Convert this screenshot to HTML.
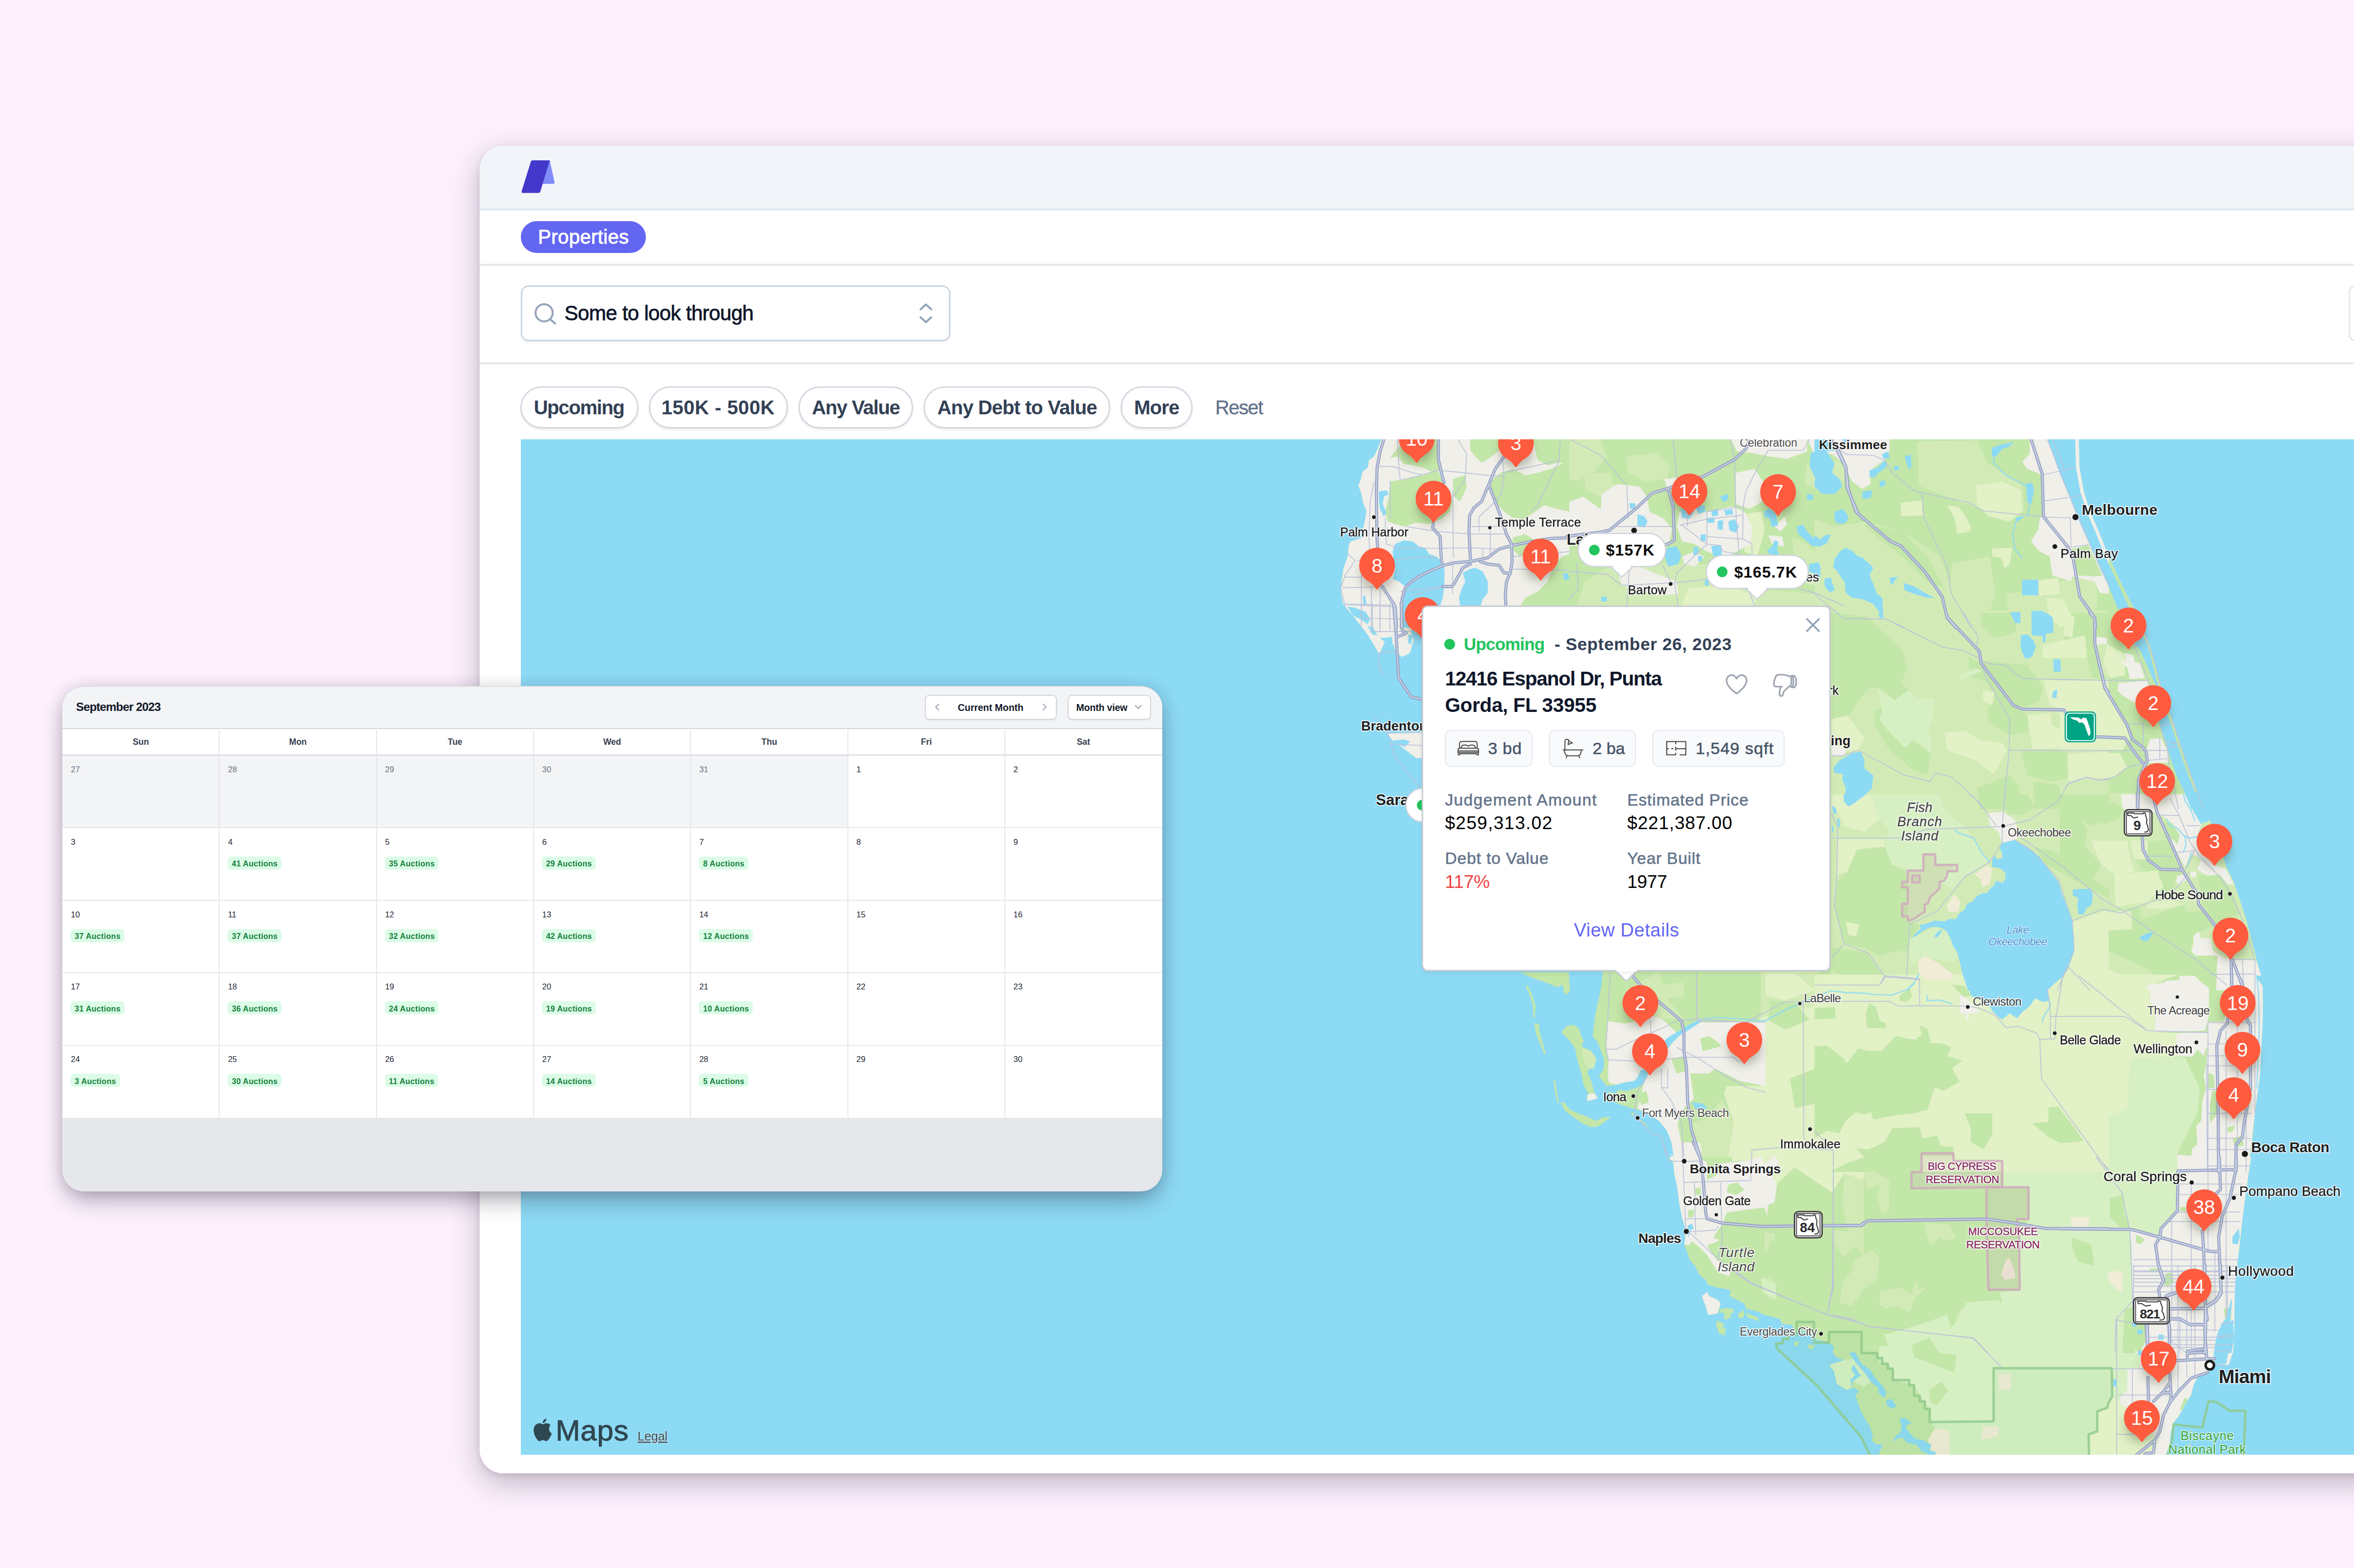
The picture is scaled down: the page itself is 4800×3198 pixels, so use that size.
<!DOCTYPE html><html><head><meta charset="utf-8"><title>Properties</title><style>
*{box-sizing:border-box;margin:0;padding:0}
html,body{width:4800px;height:3198px;overflow:hidden;background:#fdf1fe;font-family:"Liberation Sans",sans-serif;}
.b{position:absolute}
.t{position:absolute;white-space:nowrap;line-height:1.2}
svg{position:absolute;overflow:visible}

#map text{font-family:"Liberation Sans",sans-serif}
</style></head><body><div class="b" id="win" style="left:978px;top:297px;width:3900px;height:2708px;background:#fff;border-radius:48px;box-shadow:0 20px 60px rgba(35,25,45,.28),0 4px 14px rgba(35,25,45,.09);"></div>
<div class="b" style="left:978.0px;top:297.0px;width:3900.0px;height:132.0px;background:#f1f5f9;border-top-left-radius:48px;border-bottom:4px solid #e2e8f0;"></div>
<svg style="left:1063px;top:327px" width="70" height="68" viewBox="0 0 70 68"><path d="M41.5 0 H58 L67.6 44 Q68.6 48 64.5 48 H43 Z" fill="#818cf8"/><path d="M23 0 H58 L39 63 Q38 66.5 34 66.5 H3.5 Q-0.5 66.5 0.8 62.5 L19.5 2.5 Q20.3 0 23 0Z" fill="#4338ca"/></svg>
<div class="b" style="left:978.0px;top:429.0px;width:3900.0px;height:113.0px;border-bottom:4px solid #e5e7eb;"></div>
<div class="b" style="left:1062.0px;top:451.0px;width:255.0px;height:65.0px;background:#6366f1;border-radius:33px;"></div>
<span class="t" style="left:1097.0px;top:458.6px;font-size:40px;color:#fff;letter-spacing:0.30px;-webkit-text-stroke:0.9px #fff;">Properties</span>
<div class="b" style="left:978.0px;top:541.0px;width:3900.0px;height:202.0px;border-bottom:4px solid #e5e7eb;"></div>
<div class="b" style="left:1062.0px;top:582.0px;width:876.0px;height:114.0px;background:#fff;border:3px solid #cbd5e1;border-radius:16px;box-shadow:0 3px 4px rgba(0,0,0,.06);"></div>
<svg style="left:1085px;top:614px" width="56" height="56" viewBox="0 0 56 56"><circle cx="24.5" cy="24" r="17.5" fill="none" stroke="#94a3b8" stroke-width="4"/><path d="M37 37 L47 46" stroke="#94a3b8" stroke-width="4" stroke-linecap="round"/></svg>
<span class="t" style="left:1151.0px;top:613.7px;font-size:42px;color:#0f172a;letter-spacing:-0.70px;-webkit-text-stroke:0.8px #0f172a;">Some to look through</span>
<svg style="left:1870px;top:616px" width="36" height="46" viewBox="0 0 36 46"><path d="M7 15 L18 5 L29 15 M7 31 L18 41 L29 31" fill="none" stroke="#94a3b8" stroke-width="4" stroke-linecap="round" stroke-linejoin="round"/></svg>
<div class="b" style="left:4789.0px;top:582.0px;width:60.0px;height:114.0px;background:#fff;border:3px solid #e2e8f0;border-radius:14px;"></div>
<div class="b" style="left:1061.0px;top:788.0px;width:241.0px;height:86.0px;background:#fff;border:3px solid #d4d9e1;border-radius:43px;box-shadow:0 3px 5px rgba(0,0,0,.07);"></div>
<span class="t" style="left:1088.4px;top:806.6px;font-size:40px;color:#334155;font-weight:700;letter-spacing:-1.42px;">Upcoming</span>
<div class="b" style="left:1323.0px;top:788.0px;width:284.0px;height:86.0px;background:#fff;border:3px solid #d4d9e1;border-radius:43px;box-shadow:0 3px 5px rgba(0,0,0,.07);"></div>
<span class="t" style="left:1348.7px;top:806.6px;font-size:40px;color:#334155;font-weight:700;letter-spacing:0.40px;">150K - 500K</span>
<div class="b" style="left:1628.0px;top:788.0px;width:234.0px;height:86.0px;background:#fff;border:3px solid #d4d9e1;border-radius:43px;box-shadow:0 3px 5px rgba(0,0,0,.07);"></div>
<span class="t" style="left:1655.4px;top:806.6px;font-size:40px;color:#334155;font-weight:700;letter-spacing:-1.35px;">Any Value</span>
<div class="b" style="left:1883.0px;top:788.0px;width:381.0px;height:86.0px;background:#fff;border:3px solid #d4d9e1;border-radius:43px;box-shadow:0 3px 5px rgba(0,0,0,.07);"></div>
<span class="t" style="left:1911.3px;top:806.6px;font-size:40px;color:#334155;font-weight:700;letter-spacing:-0.87px;">Any Debt to Value</span>
<div class="b" style="left:2285.0px;top:788.0px;width:147.0px;height:86.0px;background:#fff;border:3px solid #d4d9e1;border-radius:43px;box-shadow:0 3px 5px rgba(0,0,0,.07);"></div>
<span class="t" style="left:2312.4px;top:806.6px;font-size:40px;color:#334155;font-weight:700;letter-spacing:-0.92px;">More</span>
<span class="t" style="left:2478.0px;top:806.6px;font-size:40px;color:#64748b;letter-spacing:-1.62px;-webkit-text-stroke:0.5px #64748b;">Reset</span>
<svg id="map" style="left:1062px;top:896px" width="3738" height="2071" viewBox="1062 896 3738 2071">
<defs><clipPath id="mc"><rect x="1062" y="896" width="3738" height="2071"/></clipPath><filter id="ps" x="-50%" y="-50%" width="200%" height="200%"><feGaussianBlur stdDeviation="9"/></filter><filter id="halo" x="-10%" y="-30%" width="120%" height="160%"><feMorphology operator="dilate" radius="1.6"/><feGaussianBlur stdDeviation="1.1"/></filter></defs>
<g clip-path="url(#mc)">
<rect x="1062" y="896" width="3738" height="2071" fill="#8ddaf5"/>
<g fill="#c3e6a9"><path d="M2816.8 880.0 L2816.8 895.3 L2809.2 915.7 L2801.5 931.0 L2791.3 938.7 L2788.8 954.0 L2778.6 961.6 L2773.5 982.0 L2769.6 989.7 L2776.0 1007.6 L2778.6 1022.9 L2786.2 1043.3 L2783.7 1058.6 L2778.6 1081.5 L2776.0 1096.8 L2753.1 1104.5 L2749.2 1117.2 L2748.0 1135.1 L2739.0 1160.6 L2735.2 1186.1 L2733.9 1206.5 L2737.8 1226.9 L2737.1 1230.0 L2762.7 1260.6 L2788.2 1293.8 L2800.9 1314.2 L2811.1 1332.0 L2813.7 1332.0 L2823.9 1309.1 L2841.7 1314.2 L2846.8 1332.0 L2859.6 1339.7 L2874.9 1332.0 L2882.6 1306.5 L2877.4 1288.7 L2887.7 1245.3 L2900.4 1240.2 L2950.0 1300.0 L3240.0 1960.0 L3267.9 1975.3 L3267.9 1983.0 L3265.3 2011.0 L3260.2 2036.5 L3252.6 2069.7 L3250.0 2092.7 L3247.4 2113.1 L3257.7 2125.8 L3262.8 2138.6 L3270.4 2159.0 L3270.4 2179.4 L3260.2 2194.7 L3275.5 2215.1 L3278.1 2225.3 L3293.4 2248.3 L3306.1 2253.4 L3329.1 2261.0 L3357.1 2268.7 L3382.7 2286.5 L3398.0 2304.4 L3408.2 2329.9 L3413.3 2360.0 L3388.8 2330.0 L3404.1 2363.2 L3411.7 2370.8 L3414.3 2396.3 L3419.4 2419.3 L3424.5 2457.6 L3429.6 2483.1 L3437.2 2508.6 L3434.7 2539.2 L3442.3 2559.6 L3444.9 2569.8 L3455.1 2580.0 L3465.3 2600.4 L3478.1 2610.6 L3483.2 2620.8 L3501.0 2625.9 L3529.1 2631.0 L3526.5 2643.8 L3557.1 2659.1 L3559.7 2669.3 L3582.7 2674.4 L3598.0 2682.0 L3628.6 2689.7 L3633.7 2699.9 L3654.1 2702.4 L3659.2 2712.7 L3684.7 2722.9 L3663.3 2707.6 L3699.0 2722.9 L3704.1 2733.1 L3721.9 2735.6 L3739.8 2745.8 L3737.2 2758.6 L3744.9 2768.8 L3760.2 2773.9 L3737.2 2781.5 L3729.6 2784.1 L3739.8 2796.8 L3742.3 2809.6 L3744.9 2822.3 L3765.3 2835.1 L3780.6 2830.0 L3790.8 2837.7 L3783.2 2845.3 L3790.8 2868.3 L3795.9 2881.0 L3806.1 2898.9 L3813.8 2911.6 L3818.9 2929.5 L3816.3 2937.1 L3824.0 2944.8 L3839.3 2947.3 L3831.6 2962.7 L3834.2 2978.0 L4416.8 2978.0 L4416.8 2967.8 L4424.5 2942.2 L4427.0 2919.3 L4432.1 2901.4 L4442.3 2888.7 L4450.0 2875.9 L4457.7 2860.6 L4467.9 2845.3 L4473.0 2824.9 L4480.6 2809.6 L4501.0 2799.4 L4516.3 2781.5 L4544.4 2784.1 L4553.3 2758.6 L4555.9 2722.9 L4557.1 2631.0 L4559.7 2580.0 L4557.1 2615.1 L4562.2 2576.8 L4567.3 2538.6 L4572.4 2487.6 L4577.6 2449.3 L4582.7 2411.0 L4590.3 2360.0 L4587.8 2359.9 L4592.9 2321.6 L4598.0 2270.6 L4603.1 2232.3 L4608.2 2194.1 L4610.7 2143.1 L4613.3 2092.0 L4614.5 2041.0 L4613.3 2010.4 L4598.0 1990.0 L4610.7 1989.9 L4603.1 1964.4 L4590.3 1913.4 L4580.1 1875.1 L4567.3 1836.8 L4554.6 1798.6 L4539.3 1768.0 L4518.9 1696.5 L4503.6 1671.0 L4480.6 1620.0 L4483.2 1619.9 L4470.4 1589.3 L4455.1 1548.5 L4444.9 1517.9 L4437.2 1492.3 L4421.9 1449.0 L4404.1 1392.9 L4393.9 1352.0 L4383.7 1313.8 L4373.5 1293.4 L4349.7 1237.1 L4335.7 1211.6 L4320.4 1178.5 L4300.0 1135.1 L4279.6 1084.1 L4261.7 1043.3 L4249.0 1002.4 L4240.1 951.4 L4238.8 896.6 L4238.8 880.0 Z"/><path d="M3099.5 1983.0 L3199.0 1983.0 L3201.5 2021.2 L3193.9 2028.9 L3188.8 2023.8 L3186.2 2008.5 L3176.0 2013.6 L3163.3 2008.5 L3142.9 2000.8 L3127.6 1995.7 L3109.7 1988.1 Z"/><path d="M3111.0 2011.0 L3114.8 2009.7 L3125.0 2031.4 L3131.4 2051.8 L3128.8 2077.3 L3126.3 2077.3 L3126.3 2051.8 L3119.9 2031.4 Z"/><path d="M3128.8 2087.6 L3137.8 2087.6 L3139.0 2102.9 L3145.4 2125.8 L3151.8 2148.8 L3149.2 2150.1 L3139.0 2125.8 L3131.4 2105.4 Z"/><path d="M3167.1 2203.6 L3170.9 2203.6 L3178.6 2248.3 L3176.0 2250.8 L3170.9 2225.3 Z"/><path d="M3182.4 2248.3 L3188.8 2248.3 L3201.5 2263.6 L3219.4 2271.2 L3239.8 2278.9 L3255.1 2286.5 L3267.9 2278.9 L3285.7 2277.6 L3270.4 2289.1 L3260.2 2296.7 L3244.9 2299.3 L3227.0 2291.6 L3209.2 2278.9 L3191.3 2266.1 Z"/><path d="M3183.7 2105.4 L3193.9 2092.7 L3209.2 2090.1 L3219.4 2097.8 L3224.5 2113.1 L3229.6 2123.3 L3224.5 2133.5 L3244.9 2143.7 L3255.1 2159.0 L3250.0 2179.4 L3239.8 2179.4 L3237.2 2189.6 L3244.9 2204.9 L3250.0 2225.3 L3257.7 2240.6 L3237.2 2245.7 L3234.7 2235.5 L3239.8 2230.4 L3229.6 2215.1 L3224.5 2189.6 L3216.8 2164.1 L3211.7 2138.6 L3201.5 2123.3 L3191.3 2113.1 Z"/><path d="M3324.0 2269.9 L3329.1 2268.7 L3357.1 2289.1 L3387.8 2317.1 L3385.2 2319.7 L3354.6 2294.2 Z"/><path d="M3470.4 2643.8 L3480.6 2634.8 L3485.7 2643.8 L3503.6 2651.4 L3508.7 2659.1 L3501.0 2679.5 L3483.2 2682.0 L3478.1 2664.2 Z"/><path d="M3513.8 2687.1 L3526.5 2679.5 L3531.6 2684.6 L3518.9 2692.2 Z"/><path d="M3501.0 2707.6 L3513.8 2712.7 L3518.9 2722.9 L3506.1 2720.3 Z"/><path d="M3544.4 2682.0 L3554.6 2671.8 L3557.1 2684.6 L3549.5 2689.7 Z"/><path d="M3506.1 2669.3 L3536.7 2671.8 L3531.6 2679.5 L3508.7 2676.9 Z"/><path d="M3500.0 2651.4 L3507.7 2656.5 L3505.1 2676.9 L3500.0 2679.5 Z"/><path d="M3515.3 2666.7 L3533.2 2669.3 L3525.5 2684.6 L3515.3 2682.0 Z"/><path d="M3543.4 2679.5 L3556.1 2671.8 L3553.6 2687.1 L3545.9 2689.7 Z"/><path d="M3500.0 2692.2 L3515.3 2699.9 L3512.8 2712.7 L3500.0 2707.6 Z"/><path d="M3507.7 2712.7 L3520.4 2707.6 L3515.3 2725.4 Z"/><path d="M3558.7 2676.9 L3584.2 2687.1 L3586.7 2694.8 L3563.8 2687.1 Z"/><path d="M3658.2 2736.9 L3668.4 2735.6 L3665.8 2745.8 L3659.4 2744.5 Z"/><path d="M3686.2 2742.0 L3701.5 2743.3 L3693.9 2753.5 L3687.5 2749.6 Z"/><path d="M2829.0 1495.3 L2900.4 1492.8 L2900.4 1546.3 L2887.7 1546.3 L2864.7 1528.5 L2839.2 1510.6 Z"/><path d="M4178.6 890.2 L4190.1 890.2 L4204.1 931.0 L4214.3 964.2 L4224.5 987.1 L4221.9 989.7 L4209.2 964.2 L4196.4 931.0 Z"/><path d="M4363.3 1308.7 L4370.9 1311.2 L4378.6 1334.2 L4373.5 1336.7 Z"/><path d="M4368.4 1344.4 L4376.0 1346.9 L4383.7 1367.3 L4378.6 1369.9 Z"/><path d="M4419.4 1469.4 L4427.0 1471.9 L4432.1 1494.9 L4427.0 1502.6 L4421.9 1489.8 Z"/><path d="M4429.6 1505.1 L4437.2 1507.7 L4439.8 1520.4 L4433.4 1517.9 Z"/><path d="M4439.8 1533.2 L4444.9 1533.2 L4452.6 1556.1 L4446.2 1553.6 Z"/></g>
<clipPath id="lc"><path d="M2816.8 880.0 L2816.8 895.3 L2809.2 915.7 L2801.5 931.0 L2791.3 938.7 L2788.8 954.0 L2778.6 961.6 L2773.5 982.0 L2769.6 989.7 L2776.0 1007.6 L2778.6 1022.9 L2786.2 1043.3 L2783.7 1058.6 L2778.6 1081.5 L2776.0 1096.8 L2753.1 1104.5 L2749.2 1117.2 L2748.0 1135.1 L2739.0 1160.6 L2735.2 1186.1 L2733.9 1206.5 L2737.8 1226.9 L2737.1 1230.0 L2762.7 1260.6 L2788.2 1293.8 L2800.9 1314.2 L2811.1 1332.0 L2813.7 1332.0 L2823.9 1309.1 L2841.7 1314.2 L2846.8 1332.0 L2859.6 1339.7 L2874.9 1332.0 L2882.6 1306.5 L2877.4 1288.7 L2887.7 1245.3 L2900.4 1240.2 L2950.0 1300.0 L3240.0 1960.0 L3267.9 1975.3 L3267.9 1983.0 L3265.3 2011.0 L3260.2 2036.5 L3252.6 2069.7 L3250.0 2092.7 L3247.4 2113.1 L3257.7 2125.8 L3262.8 2138.6 L3270.4 2159.0 L3270.4 2179.4 L3260.2 2194.7 L3275.5 2215.1 L3278.1 2225.3 L3293.4 2248.3 L3306.1 2253.4 L3329.1 2261.0 L3357.1 2268.7 L3382.7 2286.5 L3398.0 2304.4 L3408.2 2329.9 L3413.3 2360.0 L3388.8 2330.0 L3404.1 2363.2 L3411.7 2370.8 L3414.3 2396.3 L3419.4 2419.3 L3424.5 2457.6 L3429.6 2483.1 L3437.2 2508.6 L3434.7 2539.2 L3442.3 2559.6 L3444.9 2569.8 L3455.1 2580.0 L3465.3 2600.4 L3478.1 2610.6 L3483.2 2620.8 L3501.0 2625.9 L3529.1 2631.0 L3526.5 2643.8 L3557.1 2659.1 L3559.7 2669.3 L3582.7 2674.4 L3598.0 2682.0 L3628.6 2689.7 L3633.7 2699.9 L3654.1 2702.4 L3659.2 2712.7 L3684.7 2722.9 L3663.3 2707.6 L3699.0 2722.9 L3704.1 2733.1 L3721.9 2735.6 L3739.8 2745.8 L3737.2 2758.6 L3744.9 2768.8 L3760.2 2773.9 L3737.2 2781.5 L3729.6 2784.1 L3739.8 2796.8 L3742.3 2809.6 L3744.9 2822.3 L3765.3 2835.1 L3780.6 2830.0 L3790.8 2837.7 L3783.2 2845.3 L3790.8 2868.3 L3795.9 2881.0 L3806.1 2898.9 L3813.8 2911.6 L3818.9 2929.5 L3816.3 2937.1 L3824.0 2944.8 L3839.3 2947.3 L3831.6 2962.7 L3834.2 2978.0 L4416.8 2978.0 L4416.8 2967.8 L4424.5 2942.2 L4427.0 2919.3 L4432.1 2901.4 L4442.3 2888.7 L4450.0 2875.9 L4457.7 2860.6 L4467.9 2845.3 L4473.0 2824.9 L4480.6 2809.6 L4501.0 2799.4 L4516.3 2781.5 L4544.4 2784.1 L4553.3 2758.6 L4555.9 2722.9 L4557.1 2631.0 L4559.7 2580.0 L4557.1 2615.1 L4562.2 2576.8 L4567.3 2538.6 L4572.4 2487.6 L4577.6 2449.3 L4582.7 2411.0 L4590.3 2360.0 L4587.8 2359.9 L4592.9 2321.6 L4598.0 2270.6 L4603.1 2232.3 L4608.2 2194.1 L4610.7 2143.1 L4613.3 2092.0 L4614.5 2041.0 L4613.3 2010.4 L4598.0 1990.0 L4610.7 1989.9 L4603.1 1964.4 L4590.3 1913.4 L4580.1 1875.1 L4567.3 1836.8 L4554.6 1798.6 L4539.3 1768.0 L4518.9 1696.5 L4503.6 1671.0 L4480.6 1620.0 L4483.2 1619.9 L4470.4 1589.3 L4455.1 1548.5 L4444.9 1517.9 L4437.2 1492.3 L4421.9 1449.0 L4404.1 1392.9 L4393.9 1352.0 L4383.7 1313.8 L4373.5 1293.4 L4349.7 1237.1 L4335.7 1211.6 L4320.4 1178.5 L4300.0 1135.1 L4279.6 1084.1 L4261.7 1043.3 L4249.0 1002.4 L4240.1 951.4 L4238.8 896.6 L4238.8 880.0 Z M3099.5 1983.0 L3199.0 1983.0 L3201.5 2021.2 L3193.9 2028.9 L3188.8 2023.8 L3186.2 2008.5 L3176.0 2013.6 L3163.3 2008.5 L3142.9 2000.8 L3127.6 1995.7 L3109.7 1988.1 Z M3111.0 2011.0 L3114.8 2009.7 L3125.0 2031.4 L3131.4 2051.8 L3128.8 2077.3 L3126.3 2077.3 L3126.3 2051.8 L3119.9 2031.4 Z M3128.8 2087.6 L3137.8 2087.6 L3139.0 2102.9 L3145.4 2125.8 L3151.8 2148.8 L3149.2 2150.1 L3139.0 2125.8 L3131.4 2105.4 Z M3167.1 2203.6 L3170.9 2203.6 L3178.6 2248.3 L3176.0 2250.8 L3170.9 2225.3 Z M3182.4 2248.3 L3188.8 2248.3 L3201.5 2263.6 L3219.4 2271.2 L3239.8 2278.9 L3255.1 2286.5 L3267.9 2278.9 L3285.7 2277.6 L3270.4 2289.1 L3260.2 2296.7 L3244.9 2299.3 L3227.0 2291.6 L3209.2 2278.9 L3191.3 2266.1 Z M3183.7 2105.4 L3193.9 2092.7 L3209.2 2090.1 L3219.4 2097.8 L3224.5 2113.1 L3229.6 2123.3 L3224.5 2133.5 L3244.9 2143.7 L3255.1 2159.0 L3250.0 2179.4 L3239.8 2179.4 L3237.2 2189.6 L3244.9 2204.9 L3250.0 2225.3 L3257.7 2240.6 L3237.2 2245.7 L3234.7 2235.5 L3239.8 2230.4 L3229.6 2215.1 L3224.5 2189.6 L3216.8 2164.1 L3211.7 2138.6 L3201.5 2123.3 L3191.3 2113.1 Z M3324.0 2269.9 L3329.1 2268.7 L3357.1 2289.1 L3387.8 2317.1 L3385.2 2319.7 L3354.6 2294.2 Z M3470.4 2643.8 L3480.6 2634.8 L3485.7 2643.8 L3503.6 2651.4 L3508.7 2659.1 L3501.0 2679.5 L3483.2 2682.0 L3478.1 2664.2 Z M3513.8 2687.1 L3526.5 2679.5 L3531.6 2684.6 L3518.9 2692.2 Z M3501.0 2707.6 L3513.8 2712.7 L3518.9 2722.9 L3506.1 2720.3 Z M3544.4 2682.0 L3554.6 2671.8 L3557.1 2684.6 L3549.5 2689.7 Z M3506.1 2669.3 L3536.7 2671.8 L3531.6 2679.5 L3508.7 2676.9 Z M3500.0 2651.4 L3507.7 2656.5 L3505.1 2676.9 L3500.0 2679.5 Z M3515.3 2666.7 L3533.2 2669.3 L3525.5 2684.6 L3515.3 2682.0 Z M3543.4 2679.5 L3556.1 2671.8 L3553.6 2687.1 L3545.9 2689.7 Z M3500.0 2692.2 L3515.3 2699.9 L3512.8 2712.7 L3500.0 2707.6 Z M3507.7 2712.7 L3520.4 2707.6 L3515.3 2725.4 Z M3558.7 2676.9 L3584.2 2687.1 L3586.7 2694.8 L3563.8 2687.1 Z M3658.2 2736.9 L3668.4 2735.6 L3665.8 2745.8 L3659.4 2744.5 Z M3686.2 2742.0 L3701.5 2743.3 L3693.9 2753.5 L3687.5 2749.6 Z M2829.0 1495.3 L2900.4 1492.8 L2900.4 1546.3 L2887.7 1546.3 L2864.7 1528.5 L2839.2 1510.6 Z M4178.6 890.2 L4190.1 890.2 L4204.1 931.0 L4214.3 964.2 L4224.5 987.1 L4221.9 989.7 L4209.2 964.2 L4196.4 931.0 Z M4363.3 1308.7 L4370.9 1311.2 L4378.6 1334.2 L4373.5 1336.7 Z M4368.4 1344.4 L4376.0 1346.9 L4383.7 1367.3 L4378.6 1369.9 Z M4419.4 1469.4 L4427.0 1471.9 L4432.1 1494.9 L4427.0 1502.6 L4421.9 1489.8 Z M4429.6 1505.1 L4437.2 1507.7 L4439.8 1520.4 L4433.4 1517.9 Z M4439.8 1533.2 L4444.9 1533.2 L4452.6 1556.1 L4446.2 1553.6 Z"/></clipPath>
<g clip-path="url(#lc)">
<g fill="#d2ebb6"><path d="M2941.8 895.3 L2987.8 895.3 L2992.9 925.9 L2982.7 956.5 L2962.2 964.2 L2944.4 951.4 L2941.8 925.9 Z"/><path d="M2776.0 964.2 L2793.9 966.7 L2799.0 987.1 L2788.8 999.9 L2778.6 992.2 Z"/><path d="M2819.4 982.0 L2832.1 984.6 L2829.6 1012.7 L2819.4 1022.9 L2816.8 999.9 Z"/><path d="M2878.1 1084.1 L2898.5 1081.5 L2906.1 1096.8 L2893.4 1109.6 L2880.6 1101.9 Z"/><path d="M2839.8 1181.0 L2860.2 1181.0 L2865.3 1193.8 L2857.7 1211.6 L2844.9 1209.1 L2837.2 1193.8 Z"/><path d="M2865.3 1198.9 L2890.8 1201.4 L2893.4 1219.3 L2875.5 1234.6 L2860.2 1232.0 Z"/><path d="M2998.0 1173.4 L3008.2 1170.8 L3005.6 1188.7 L2995.4 1193.8 Z"/><path d="M3033.7 1186.1 L3054.1 1183.6 L3059.2 1201.4 L3054.1 1221.8 L3038.8 1219.3 Z"/><path d="M3230.6 1186.1 L3276.5 1158.1 L3378.6 1147.9 L3480.6 1150.4 L3557.1 1198.9 L3710.2 1211.6 L3800.0 1235.9 L3215.3 1235.9 Z"/><path d="M3314.8 931.0 L3378.6 923.4 L3406.6 951.4 L3399.0 976.9 L3353.1 982.0 L3319.9 964.2 Z"/><path d="M3200.0 895.3 L3263.8 895.3 L3276.5 931.0 L3251.0 964.2 L3215.3 982.0 L3200.0 976.9 Z"/><path d="M3230.6 966.7 L3284.2 964.2 L3291.8 1002.4 L3261.2 1012.7 L3233.2 999.9 Z"/><path d="M3654.1 1094.3 L3684.7 1109.6 L3710.2 1135.1 L3735.7 1173.4 L3710.2 1198.9 L3671.9 1186.1 L3659.2 1135.1 Z"/><path d="M3684.7 943.8 L3710.2 964.2 L3707.7 997.3 L3679.6 987.1 Z"/><path d="M3909.2 900.4 L4031.6 897.9 L4052.0 943.8 L4123.5 989.7 L4128.6 1043.3 L4057.1 1056.0 L4031.6 1033.1 L3993.4 1022.9 L3942.3 1002.4 L3911.7 989.7 L3911.7 943.8 Z"/><path d="M3700.0 1058.6 L3740.8 1073.9 L3802.0 1063.7 L3878.6 1084.1 L3955.1 1135.1 L3980.6 1198.9 L4018.9 1280.0 L3700.0 1280.0 Z"/><path d="M4092.9 1211.6 L4159.2 1198.9 L4223.0 1181.0 L4274.0 1173.4 L4276.5 1237.1 L4235.7 1280.0 L4092.9 1280.0 Z"/><path d="M3980.6 1147.9 L4057.1 1135.1 L4069.9 1211.6 L4044.4 1280.0 L3993.4 1280.0 L3975.5 1209.1 Z"/><path d="M3720.4 943.8 L3751.0 938.7 L3766.3 964.2 L3751.0 994.8 L3720.4 976.9 Z"/><path d="M3786.7 1209.1 L3802.0 1204.0 L3812.2 1214.2 L3802.0 1224.4 L3786.7 1219.3 Z"/><path d="M3734.4 1244.9 L4300.0 1244.9 L4300.0 1650.0 L3734.4 1650.0 Z"/><path d="M4197.4 1617.4 L4506.1 1617.4 L4633.7 2020.0 L4197.4 2020.0 Z"/><path d="M3734.4 1617.4 L4300.0 1617.4 L4300.0 2020.0 L3734.4 2020.0 Z"/><path d="M4062.2 2270.6 L4077.6 2260.4 L4087.8 2260.4 L4113.3 2347.1 L4082.7 2390.0 L4049.5 2390.0 L4044.4 2344.6 L4062.2 2314.0 Z"/><path d="M4200.0 2360.0 L4276.5 2360.0 L4296.9 2390.6 L4302.0 2444.2 L4276.5 2467.1 L4225.5 2462.0 L4200.0 2436.5 Z"/><path d="M3224.5 2138.6 L3244.9 2143.7 L3255.1 2159.0 L3250.0 2179.4 L3239.8 2179.4 L3229.6 2164.1 Z"/><path d="M3377.6 2011.0 L3433.7 2003.4 L3433.7 2034.0 L3398.0 2036.5 Z"/><path d="M3313.8 2018.7 L3382.7 1983.0 L3398.0 2036.5 L3433.7 2077.3 L3387.8 2077.3 L3357.1 2074.8 Z"/><path d="M3446.4 2291.6 L3484.7 2278.9 L3510.2 2240.6 L3535.7 2291.6 L3523.0 2360.0 L3466.8 2360.0 Z"/><path d="M3598.0 2513.7 L3618.4 2516.2 L3618.4 2529.0 L3608.2 2534.1 L3605.6 2551.9 L3598.0 2549.4 Z"/><path d="M3592.9 2608.1 L3608.2 2605.5 L3623.5 2618.3 L3618.4 2643.8 L3608.2 2651.4 L3595.4 2623.4 Z"/><path d="M3761.2 2393.8 L3800.0 2406.5 L3800.0 2559.6 L3774.0 2534.1 L3756.1 2457.6 Z"/><path d="M3966.8 2804.5 L4061.2 2791.7 L4065.1 2835.1 L4010.2 2860.6 L3966.8 2870.8 Z"/><path d="M3755.1 2618.3 L3780.6 2585.1 L3831.6 2587.7 L3826.5 2610.6 L3801.0 2628.5 L3775.5 2664.2 L3755.1 2656.5 Z"/><path d="M3831.6 2633.6 L3877.6 2625.9 L3903.1 2648.9 L3898.0 2669.3 L3862.2 2664.2 L3841.8 2669.3 Z"/><path d="M3700.0 2360.0 L3728.1 2360.0 L3763.8 2385.5 L3756.1 2400.8 L3740.8 2398.3 L3725.5 2390.6 L3700.0 2393.2 Z"/><path d="M3756.1 2375.3 L3814.8 2383.0 L3853.1 2408.5 L3850.5 2423.8 L3832.7 2416.1 L3807.1 2426.3 L3802.0 2405.9 L3766.3 2393.2 Z"/><path d="M3832.7 2416.1 L3850.5 2423.8 L3853.1 2467.1 L3837.8 2479.9 L3827.6 2446.7 Z"/><path d="M3921.9 2492.7 L3975.5 2497.8 L3988.3 2523.3 L3973.0 2530.9 L3955.1 2523.3 L3937.2 2541.1 L3929.6 2523.3 Z"/><path d="M3733.2 2508.0 L3771.4 2513.1 L3784.2 2538.6 L3761.2 2564.1 L3740.8 2538.6 Z"/><path d="M3779.1 2571.7 L3817.3 2548.8 L3832.7 2564.1 L3827.6 2597.2 L3799.5 2589.6 L3794.4 2625.3 L3763.8 2661.0 L3751.0 2658.5 L3758.7 2615.1 L3776.5 2604.9 Z"/><path d="M3832.7 2633.0 L3863.3 2627.9 L3878.6 2640.6 L3899.0 2638.1 L3904.1 2615.1 L3911.7 2612.6 L3909.2 2630.4 L3929.6 2625.3 L3904.1 2648.3 L3891.3 2676.3 L3863.3 2658.5 L3832.7 2663.6 Z"/><path d="M3998.5 2671.2 L4031.6 2653.4 L4039.3 2666.1 L4067.3 2704.4 L4057.1 2760.0 L4006.1 2717.1 L3988.3 2686.5 Z"/><path d="M4159.2 2615.1 L4197.4 2625.3 L4207.7 2666.1 L4184.7 2678.9 L4164.3 2653.4 Z"/><path d="M4225.5 2523.3 L4261.2 2538.6 L4271.4 2581.9 L4238.3 2571.7 Z"/><path d="M2859.6 1523.4 L2887.7 1520.8 L2892.8 1531.0 L2880.0 1543.8 L2864.7 1533.6 Z"/><path d="M2880.0 1449.4 L2892.8 1439.2 L2895.3 1446.8 L2882.6 1454.5 Z"/><path d="M3590.0 1975.0 L3710.0 1975.0 L3710.0 2340.0 L3590.0 2340.0 Z"/></g>
<g fill="#c3e6a9"><path d="M3734.4 1250.0 L3807.1 1257.7 L3878.6 1326.5 L3888.8 1364.8 L3876.0 1392.9 L3893.9 1408.2 L3863.3 1428.6 L3842.9 1408.2 L3814.8 1400.5 L3789.3 1428.6 L3771.4 1459.2 L3734.4 1469.4 Z"/><path d="M4013.8 1339.3 L4041.8 1352.0 L4082.7 1403.1 L4108.2 1438.8 L4138.8 1466.8 L4133.7 1492.3 L4098.0 1500.0 L4057.1 1471.9 L4052.0 1449.0 L4067.3 1423.5 L4052.0 1392.9 L4016.3 1377.6 Z"/><path d="M4039.3 1346.9 L4133.7 1357.1 L4166.8 1403.1 L4159.2 1428.6 L4133.7 1441.3 L4108.2 1438.8 Z"/><path d="M3822.4 1449.0 L3837.8 1443.9 L3832.7 1469.4 L3842.9 1484.7 L3883.7 1525.5 L3893.9 1505.1 L3937.2 1538.3 L3929.6 1581.6 L3899.0 1568.9 L3876.0 1548.5 L3853.1 1530.6 L3822.4 1479.6 Z"/><path d="M4120.9 1530.6 L4210.2 1530.6 L4235.7 1581.6 L4184.7 1594.4 L4133.7 1581.6 Z"/><path d="M4031.6 1607.1 L4098.0 1581.6 L4118.4 1607.1 L4113.3 1650.0 L4036.7 1650.0 Z"/><path d="M4146.4 1594.4 L4197.4 1599.5 L4207.7 1650.0 L4149.0 1650.0 Z"/><path d="M4039.3 1250.0 L4118.4 1250.0 L4108.2 1290.8 L4069.9 1301.0 L4041.8 1280.6 Z"/><path d="M4210.2 1283.2 L4248.5 1265.3 L4268.9 1301.0 L4235.7 1316.3 L4210.2 1306.1 Z"/><path d="M4200.0 1250.0 L4268.9 1250.0 L4271.4 1313.8 L4286.7 1372.4 L4296.9 1382.7 L4266.3 1382.7 L4251.0 1326.5 L4225.5 1321.4 L4210.2 1295.9 Z"/><path d="M4274.0 1250.0 L4307.1 1250.0 L4302.0 1283.2 L4312.2 1301.0 L4342.9 1324.0 L4332.7 1334.2 L4296.9 1313.8 L4276.5 1313.8 Z"/><path d="M4337.8 1362.2 L4368.4 1364.8 L4373.5 1382.7 L4342.9 1385.2 Z"/><path d="M4368.4 1479.6 L4404.1 1479.6 L4406.6 1505.1 L4383.7 1507.7 L4378.6 1515.3 L4368.4 1505.1 Z"/><path d="M4332.7 1538.3 L4368.4 1530.6 L4376.0 1556.1 L4353.1 1571.4 L4337.8 1561.2 Z"/><path d="M4340.3 1581.6 L4363.3 1576.5 L4363.3 1619.9 L4342.9 1612.2 Z"/><path d="M4245.9 1898.1 L4284.2 1898.1 L4284.2 1859.8 L4363.3 1849.6 L4365.8 1875.1 L4455.1 1844.5 L4457.7 1859.8 L4506.1 1857.2 L4513.8 1887.9 L4473.0 1908.3 L4467.9 1938.9 L4475.5 1949.1 L4521.4 1949.1 L4518.9 2020.0 L4480.6 2020.0 L4478.1 1997.6 L4444.9 1995.0 L4442.3 2002.7 L4419.4 2007.8 L4378.6 1977.1 L4263.8 1921.0 Z"/><path d="M4381.1 1714.4 L4416.8 1714.4 L4444.9 1773.1 L4406.6 1773.1 L4378.6 1752.7 Z"/><path d="M4200.0 1620.0 L4230.6 1620.0 L4235.7 1660.8 L4256.1 1691.4 L4251.0 1727.1 L4284.2 1762.9 L4263.8 1798.6 L4225.5 1783.3 L4200.0 1762.9 Z"/><path d="M4281.6 1653.2 L4307.1 1635.3 L4332.7 1648.1 L4319.9 1671.0 L4286.7 1681.2 Z"/><path d="M4480.6 1783.3 L4501.0 1785.8 L4526.5 1783.3 L4541.8 1803.7 L4557.1 1829.2 L4567.3 1864.9 L4552.0 1870.0 L4513.8 1887.9 L4506.1 1857.2 L4490.8 1844.5 L4485.7 1813.9 Z"/><path d="M4411.7 1671.0 L4424.5 1706.7 L4439.8 1739.9 L4424.5 1732.2 L4411.7 1704.2 Z"/><path d="M4353.1 1752.7 L4378.6 1752.7 L4406.6 1773.1 L4444.9 1773.1 L4455.1 1783.3 L4439.8 1785.8 L4429.6 1813.9 L4404.1 1824.1 L4378.6 1785.8 Z"/><path d="M3786.7 1732.2 L3842.9 1727.1 L3858.2 1762.9 L3888.8 1778.2 L3890.1 1877.7 L3914.3 1886.6 L3899.0 1913.4 L3888.8 1938.9 L3858.2 1941.4 L3832.7 1949.1 L3802.0 1933.8 L3761.2 1923.6 L3740.8 1849.6 L3745.9 1798.6 L3766.3 1778.2 Z"/><path d="M4149.0 1729.7 L4184.7 1734.8 L4235.7 1773.1 L4300.0 1813.9 L4300.0 1831.7 L4261.2 1813.9 L4210.2 1783.3 L4171.9 1762.9 Z"/><path d="M4090.3 1620.0 L4133.7 1620.0 L4149.0 1645.5 L4120.9 1663.4 L4092.9 1658.3 Z"/><path d="M4210.2 1620.0 L4300.0 1620.0 L4300.0 1671.0 L4261.2 1683.8 L4223.0 1658.3 Z"/><path d="M3735.7 1931.2 L3807.1 1944.0 L3842.9 1992.4 L3832.7 2010.3 L3763.8 2010.3 L3735.7 1977.1 Z"/><path d="M4455.1 2155.8 L4493.4 2153.3 L4499.7 2168.6 L4493.4 2194.1 L4498.5 2219.6 L4490.8 2245.1 L4488.3 2285.9 L4478.1 2296.1 L4480.6 2334.4 L4470.4 2342.0 L4467.9 2357.3 L4439.8 2354.8 L4455.1 2321.6 L4480.6 2270.6 L4485.7 2219.6 L4470.4 2189.0 Z"/><path d="M4332.7 1990.0 L4378.6 1990.0 L4388.8 2005.3 L4386.2 2038.5 L4363.3 2018.1 Z"/><path d="M4475.5 1990.0 L4531.6 1990.0 L4536.7 2015.5 L4531.6 2041.0 L4541.8 2066.5 L4531.6 2084.4 L4503.6 2084.4 L4504.8 2015.5 L4490.8 2005.3 Z"/><path d="M4200.0 2265.5 L4220.4 2285.9 L4245.9 2321.6 L4225.5 2347.1 L4200.0 2334.4 Z"/></g>
<g fill="#d6f0c4"><path d="M3827.6 1403.1 L3863.3 1428.6 L3891.3 1408.2 L3909.2 1423.5 L3944.9 1426.0 L3942.3 1464.3 L3932.1 1484.7 L3939.8 1517.9 L3934.7 1535.7 L3904.1 1507.7 L3883.7 1525.5 L3842.9 1479.6 L3832.7 1466.8 L3837.8 1446.4 Z"/><path d="M3995.9 1377.6 L4031.6 1362.2 L4041.8 1369.9 L4018.9 1377.6 L3998.5 1387.8 Z"/><path d="M3812.2 1620.0 L3955.1 1620.0 L3967.9 1658.3 L4006.1 1683.8 L4031.6 1722.0 L4057.1 1757.8 L4006.1 1788.4 L3980.6 1813.9 L3955.1 1798.6 L3970.4 1776.9 L3990.8 1764.1 L3946.2 1764.1 L3946.2 1742.4 L3921.9 1742.4 L3921.9 1775.6 L3890.1 1775.6 L3858.2 1762.9 L3842.9 1727.1 L3853.1 1696.5 L3832.7 1671.0 Z"/><path d="M3893.9 1915.9 L3944.9 1890.4 L3970.4 1900.6 L3993.4 1951.6 L3980.6 1961.8 L3929.6 1951.6 L3893.9 1964.4 Z"/><path d="M4098.0 2291.0 L4143.9 2291.0 L4177.0 2319.1 L4202.6 2331.8 L4248.5 2326.7 L4300.0 2390.0 L4108.2 2390.0 Z"/><path d="M4062.2 2061.4 L4075.0 2074.2 L4082.7 2079.3 L4098.0 2066.5 L4113.3 2076.7 L4123.5 2064.0 L4133.7 2056.3 L4141.3 2048.7 L4149.0 2035.9 L4159.2 2041.0 L4169.4 2043.6 L4177.0 2041.0 L4179.6 2053.8 L4161.7 2089.5 L4149.0 2102.2 L4115.8 2094.6 L4090.3 2095.9 L4069.9 2074.2 Z"/><path d="M4342.9 2168.6 L4353.1 2158.4 L4429.6 2153.3 L4455.1 2155.8 L4470.4 2189.0 L4485.7 2219.6 L4480.6 2270.6 L4455.1 2321.6 L4439.8 2354.8 L4439.8 2390.0 L4225.5 2390.0 L4240.8 2306.3 L4337.8 2260.4 Z"/><path d="M4197.4 2360.0 L4439.8 2360.0 L4439.8 2469.7 L4406.6 2505.4 L4404.1 2523.3 L4342.9 2510.5 L4346.7 2538.6 L4348.0 2615.1 L4350.5 2699.3 L4353.1 2760.0 L4197.4 2760.0 Z"/><path d="M4197.4 2580.0 L4350.5 2580.0 L4350.5 2697.3 L4332.7 2671.8 L4337.8 2743.3 L4363.3 2758.6 L4363.3 2791.7 L4337.8 2791.7 L4337.8 2835.1 L4325.0 2845.3 L4322.4 2860.6 L4353.1 2886.1 L4378.6 2911.6 L4399.0 2937.1 L4393.9 2970.3 L4197.4 2970.3 Z"/><path d="M3831.6 2745.8 L3877.6 2743.3 L3933.7 2728.0 L3984.7 2702.4 L4010.2 2656.5 L4074.0 2651.4 L4100.0 2669.3 L4100.0 2970.3 L3949.0 2970.3 L3946.4 2911.6 L3934.9 2900.2 L3934.9 2873.4 L3914.5 2846.6 L3903.1 2824.9 L3859.7 2814.7 L3859.7 2791.7 L3849.5 2781.5 L3831.6 2779.0 Z"/><path d="M3591.8 2605.5 L3619.9 2618.3 L3622.4 2651.4 L3594.4 2636.1 Z"/><path d="M3729.6 2784.1 L3760.2 2773.9 L3778.1 2771.3 L3788.3 2784.1 L3803.6 2801.9 L3813.8 2817.2 L3801.0 2830.0 L3778.1 2817.2 L3775.5 2830.0 L3765.3 2835.1 L3744.9 2822.3 L3742.3 2809.6 L3739.8 2796.8 Z"/><path d="M4082.7 2360.0 L4300.0 2360.0 L4300.0 2760.0 L4057.1 2760.0 L4077.6 2706.9 L4082.7 2653.4 L4077.6 2635.5 L4118.4 2630.4 L4118.4 2502.9 L4138.8 2487.6 L4138.8 2421.2 L4085.2 2421.2 Z"/><path d="M3842.9 2722.2 L3904.1 2704.4 L3942.3 2691.6 L3970.4 2681.4 L3980.6 2712.0 L4001.0 2722.2 L4018.9 2760.0 L3853.1 2760.0 Z"/><path d="M4090.0 2745.0 L4210.0 2745.0 L4210.0 2975.0 L4090.0 2975.0 Z"/></g>
<g fill="#e2f1c6"><path d="M3557.1 1048.4 L3592.9 1043.3 L3598.0 1084.1 L3582.7 1135.1 L3557.1 1124.9 Z"/><path d="M3442.3 1198.9 L3531.6 1193.8 L3582.7 1219.3 L3577.6 1235.9 L3429.6 1235.9 Z"/><path d="M3876.0 1025.4 L3919.4 1020.3 L3921.9 1050.9 L3876.0 1053.5 Z"/><path d="M3970.4 1030.5 L3993.4 1033.1 L4008.7 1053.5 L4018.9 1073.9 L4016.3 1084.1 L3990.8 1089.2 L3985.7 1058.6 Z"/><path d="M4062.2 1118.5 L4103.1 1117.2 L4098.0 1150.4 L4087.8 1159.3 L4080.1 1137.7 L4062.2 1135.1 Z"/><path d="M4029.1 989.7 L4082.7 982.0 L4120.9 999.9 L4123.5 1043.3 L4098.0 1063.7 L4057.1 1053.5 L4031.6 1033.1 Z"/><path d="M4156.6 1183.6 L4197.4 1178.5 L4200.0 1211.6 L4159.2 1214.2 Z"/><path d="M4171.9 1219.3 L4205.1 1221.8 L4225.5 1257.6 L4205.1 1280.0 L4179.6 1262.7 Z"/><path d="M4133.7 1459.2 L4179.6 1454.1 L4184.7 1479.6 L4210.2 1492.3 L4207.7 1525.5 L4143.9 1528.1 L4141.3 1505.1 Z"/><path d="M3965.3 1494.9 L4006.1 1489.8 L4039.3 1510.2 L4082.7 1515.3 L4092.9 1530.6 L4064.8 1579.1 L4029.1 1551.0 L4001.0 1540.8 L3970.4 1530.6 Z"/><path d="M4164.3 1316.3 L4251.0 1295.9 L4256.1 1341.8 L4164.3 1341.8 Z"/><path d="M4166.8 1387.8 L4300.0 1387.8 L4300.0 1505.1 L4274.0 1505.1 L4210.2 1449.0 L4179.6 1438.8 Z"/><path d="M3734.4 1466.8 L3766.3 1459.2 L3802.0 1505.1 L3789.3 1530.6 L3734.4 1535.7 Z"/><path d="M3734.4 1619.9 L3776.5 1650.0 L3734.4 1650.0 Z"/><path d="M4210.2 1250.0 L4230.6 1257.7 L4225.5 1301.0 L4207.7 1295.9 Z"/><path d="M4041.8 1408.2 L4067.3 1410.7 L4062.2 1438.8 L4044.4 1428.6 Z"/><path d="M4235.7 1535.7 L4300.0 1533.2 L4300.0 1581.6 L4261.2 1581.6 Z"/><path d="M4200.0 1387.8 L4291.8 1387.8 L4332.7 1477.0 L4342.9 1505.1 L4327.6 1530.6 L4200.0 1530.6 Z"/><path d="M4296.9 1313.8 L4332.7 1334.2 L4332.7 1377.6 L4302.0 1382.7 L4289.3 1352.0 Z"/><path d="M4215.3 1538.3 L4322.4 1535.7 L4337.8 1566.3 L4307.1 1586.7 L4251.0 1586.7 L4217.9 1599.5 Z"/><path d="M4312.2 1783.3 L4399.0 1775.6 L4411.7 1808.8 L4378.6 1839.4 L4314.8 1849.6 L4312.2 1824.1 Z"/><path d="M4281.6 1859.8 L4345.4 1857.2 L4348.0 1895.5 L4284.2 1898.1 Z"/><path d="M4200.0 1938.9 L4228.1 1941.4 L4302.0 1977.1 L4378.6 2020.0 L4200.0 2020.0 Z"/><path d="M4378.6 1839.4 L4429.6 1836.8 L4452.6 1844.5 L4411.7 1854.7 L4378.6 1852.1 Z"/><path d="M4342.9 1714.4 L4378.6 1714.4 L4378.6 1752.7 L4353.1 1752.7 Z"/><path d="M4263.8 1714.4 L4337.8 1714.4 L4342.9 1747.6 L4353.1 1778.2 L4312.2 1783.3 L4284.2 1762.9 Z"/><path d="M3745.9 1711.8 L3842.9 1711.8 L3842.9 1727.1 L3786.7 1732.2 L3766.3 1778.2 L3745.9 1783.3 Z"/><path d="M3735.7 1620.0 L3812.2 1620.0 L3832.7 1671.0 L3802.0 1696.5 L3761.2 1686.3 L3745.9 1653.2 Z"/><path d="M3763.8 1880.2 L3791.8 1885.3 L3784.2 1910.8 L3768.9 1905.7 Z"/><path d="M4225.5 1880.2 L4300.0 1854.7 L4300.0 2020.0 L4217.9 2020.0 L4217.9 1977.1 L4229.3 1941.4 Z"/><path d="M3700.0 1987.4 L4300.0 1987.4 L4300.0 2390.0 L3700.0 2390.0 Z"/><path d="M3858.2 2194.1 L3868.4 2209.4 L3865.8 2245.1 L3863.3 2273.2 L3819.9 2283.4 L3814.8 2260.4 L3817.3 2229.8 L3842.9 2219.6 Z"/><path d="M3878.6 2229.8 L3904.1 2227.2 L3911.7 2245.1 L3901.5 2260.4 L3883.7 2255.3 Z"/><path d="M3914.3 2163.5 L3950.0 2168.6 L3957.7 2201.7 L3937.2 2211.9 L3921.9 2209.4 L3924.5 2194.1 L3911.7 2191.5 Z"/><path d="M4197.4 1987.4 L4442.3 1987.4 L4386.2 2007.9 L4383.7 2043.6 L4395.2 2053.8 L4393.9 2104.8 L4437.2 2107.3 L4439.8 2153.3 L4353.1 2158.4 L4342.9 2168.6 L4337.8 2260.4 L4240.8 2306.3 L4225.5 2390.0 L4197.4 2390.0 Z"/><path d="M4258.7 2924.4 L4276.5 2919.3 L4276.5 2886.1 L4296.9 2860.6 L4307.1 2850.4 L4322.4 2860.6 L4353.1 2886.1 L4378.6 2911.6 L4399.0 2937.1 L4393.9 2970.3 L4261.2 2970.3 Z"/><path d="M3510.2 2215.1 L3600.0 2215.1 L3600.0 2360.0 L3523.0 2360.0 L3535.7 2291.6 Z"/><path d="M3531.6 2330.0 L3800.0 2330.0 L3800.0 2406.5 L3761.2 2393.8 L3735.7 2432.0 L3697.4 2406.5 L3659.2 2381.0 L3623.5 2414.2 L3608.2 2391.2 L3628.6 2370.8 L3618.4 2355.5 L3598.0 2373.4 L3590.3 2358.1 L3572.4 2365.7 L3531.6 2368.3 Z"/><path d="M2808.6 1393.3 L2831.5 1390.7 L2829.0 1398.4 L2811.1 1406.0 Z"/><path d="M3588.0 2075.0 L3712.0 2050.0 L3712.0 2342.0 L3588.0 2342.0 Z"/><path d="M3600.0 1985.0 L3660.0 1985.0 L3700.0 2020.0 L3640.0 2040.0 L3600.0 2030.0 Z"/></g>
<g fill="#f1ecd8"><path d="M4026.5 1783.3 L4052.0 1765.4 L4062.2 1773.1 L4057.1 1803.7 L4041.8 1808.8 L4039.3 1793.5 Z"/><path d="M3970.4 1844.5 L3985.7 1824.1 L3997.2 1839.4 L3993.4 1859.8 L3973.0 1859.8 Z"/><path d="M3911.7 1959.3 L3924.5 1949.1 L3952.6 1964.4 L3967.9 1977.1 L3983.2 1987.3 L3980.6 1997.6 L3929.6 1997.6 L3911.7 1982.2 Z"/><path d="M4223.0 2482.4 L4261.2 2482.4 L4256.1 2501.6 L4223.0 2501.6 Z"/><path d="M4299.5 2597.2 L4312.2 2592.1 L4327.6 2594.7 L4327.6 2635.5 L4317.3 2630.4 L4302.0 2615.1 Z"/><path d="M4296.9 2595.3 L4327.6 2592.8 L4327.6 2636.1 L4302.0 2613.2 Z"/><path d="M3931.1 2937.1 L3946.4 2911.6 L3974.5 2919.3 L3977.0 2970.3 L3941.3 2970.3 Z"/><path d="M4043.4 2909.1 L4076.5 2909.1 L4074.0 2929.5 L4040.8 2937.1 Z"/><path d="M4074.0 2801.9 L4100.0 2801.9 L4100.0 2835.1 L4076.5 2835.1 Z"/><path d="M4223.0 2482.4 L4261.2 2482.4 L4256.1 2501.6 L4224.2 2501.6 Z"/><path d="M4090.3 2569.2 L4098.0 2566.6 L4108.2 2594.7 L4109.4 2607.4 L4087.8 2610.0 L4080.1 2599.8 Z"/></g>
<g fill="#f0efe9"><path d="M2816.8 895.3 L3200.0 895.3 L3200.0 1237.1 L2899.0 1237.1 L2899.0 1280.0 L2776.0 1280.0 L2753.1 1257.6 L2737.8 1226.9 L2733.9 1206.5 L2739.0 1160.6 L2748.0 1135.1 L2749.2 1117.2 L2753.1 1104.5 L2776.0 1096.8 L2778.6 1081.5 L2783.7 1058.6 L2786.2 1043.3 L2778.6 1022.9 L2776.0 1007.6 L2769.6 989.7 L2773.5 982.0 L2778.6 961.6 L2788.8 954.0 L2791.3 938.7 L2801.5 931.0 L2809.2 915.7 Z"/><path d="M2994.1 1163.2 L3003.1 1168.3 L3008.2 1186.1 L3000.5 1201.4 L2994.1 1186.1 Z"/><path d="M3200.0 1022.9 L3228.1 1012.7 L3263.8 1038.2 L3266.3 1007.6 L3296.9 987.1 L3342.9 992.2 L3358.2 1012.7 L3363.3 1043.3 L3393.9 1058.6 L3409.2 1079.0 L3404.1 1104.5 L3378.6 1109.6 L3223.0 1109.6 L3200.0 1104.5 Z"/><path d="M3424.5 1043.3 L3455.1 1033.1 L3480.6 1043.3 L3531.6 1033.1 L3557.1 1043.3 L3572.4 1073.9 L3569.9 1109.6 L3531.6 1130.0 L3506.1 1135.1 L3480.6 1124.9 L3455.1 1109.6 L3429.6 1104.5 L3419.4 1073.9 Z"/><path d="M3539.3 964.2 L3577.6 956.5 L3598.0 987.1 L3592.9 1022.9 L3567.3 1038.2 L3539.3 1028.0 Z"/><path d="M3529.1 895.3 L3684.7 895.3 L3684.7 920.8 L3643.9 936.1 L3608.2 931.0 L3569.9 923.4 L3541.8 920.8 Z"/><path d="M3684.7 895.3 L3800.0 895.3 L3800.0 931.0 L3761.2 946.3 L3735.7 925.9 L3697.4 923.4 Z"/><path d="M3296.9 1160.6 L3342.9 1155.5 L3378.6 1170.8 L3419.4 1186.1 L3421.9 1211.6 L3378.6 1214.2 L3307.1 1193.8 Z"/><path d="M3393.9 976.9 L3419.4 974.4 L3419.4 992.2 L3399.0 997.3 Z"/><path d="M3618.4 1073.9 L3638.8 1053.5 L3643.9 1068.8 L3631.1 1084.1 Z"/><path d="M3429.6 1135.1 L3455.1 1124.9 L3475.5 1135.1 L3455.1 1155.5 L3434.7 1150.4 Z"/><path d="M3501.0 1135.1 L3531.6 1130.0 L3541.8 1150.4 L3521.4 1160.6 L3501.0 1150.4 Z"/><path d="M3605.6 1091.7 L3633.7 1094.3 L3638.8 1114.7 L3613.3 1109.6 Z"/><path d="M3700.0 895.3 L3853.1 895.3 L3853.1 920.8 L3842.9 938.7 L3819.9 954.0 L3812.2 969.3 L3814.8 987.1 L3796.9 997.3 L3776.5 982.0 L3763.8 956.5 L3751.0 925.9 L3725.5 918.3 L3700.0 918.3 Z"/><path d="M4138.8 895.3 L4300.0 895.3 L4300.0 1211.6 L4281.6 1209.1 L4271.4 1186.1 L4225.5 1175.9 L4223.0 1186.1 L4184.7 1173.4 L4179.6 1135.1 L4159.2 1124.9 L4141.3 1104.5 L4156.6 1079.0 L4159.2 1056.0 L4164.3 1053.5 L4164.3 969.3 L4154.1 964.2 L4133.7 956.5 L4123.5 941.2 L4138.8 925.9 Z"/><path d="M3734.4 1520.4 L3766.3 1525.5 L3761.2 1540.8 L3734.4 1540.8 Z"/><path d="M4274.0 1298.5 L4296.9 1301.0 L4296.9 1313.8 L4275.3 1313.8 Z"/><path d="M4322.4 1346.9 L4363.3 1352.0 L4373.5 1382.7 L4342.9 1385.2 L4337.8 1362.2 Z"/><path d="M4319.9 1392.9 L4378.6 1387.8 L4381.1 1403.1 L4363.3 1423.5 L4353.1 1433.7 L4327.6 1418.4 L4317.3 1408.2 Z"/><path d="M4383.7 1507.7 L4406.6 1505.1 L4419.4 1530.6 L4421.9 1556.1 L4378.6 1556.1 L4376.0 1530.6 Z"/><path d="M4274.0 1301.0 L4294.4 1301.0 L4294.4 1313.8 L4274.0 1313.8 Z"/><path d="M4327.6 1627.6 L4358.2 1632.7 L4388.8 1650.0 L4327.6 1650.0 Z"/><path d="M4424.5 1619.9 L4444.9 1627.6 L4455.1 1650.0 L4429.6 1650.0 Z"/><path d="M4332.7 1331.6 L4350.5 1336.7 L4353.1 1352.0 L4335.2 1349.5 Z"/><path d="M4325.0 1620.0 L4460.2 1620.0 L4473.0 1655.7 L4488.3 1681.2 L4480.6 1706.7 L4513.8 1762.9 L4539.3 1773.1 L4554.6 1803.7 L4541.8 1803.7 L4526.5 1783.3 L4501.0 1785.8 L4480.6 1773.1 L4488.3 1752.7 L4467.9 1739.9 L4455.1 1768.0 L4439.8 1739.9 L4424.5 1706.7 L4419.4 1671.0 L4404.1 1660.8 L4358.2 1648.1 L4327.6 1648.1 Z"/><path d="M4439.8 1785.8 L4455.1 1783.3 L4460.2 1793.5 L4444.9 1803.7 L4437.2 1798.6 Z"/><path d="M4465.3 1778.2 L4478.1 1778.2 L4478.1 1788.4 L4467.9 1788.4 Z"/><path d="M4473.0 1908.3 L4483.2 1899.3 L4488.3 1913.4 L4506.1 1913.4 L4513.8 1941.4 L4529.1 1949.1 L4539.3 1954.2 L4600.5 1959.3 L4610.7 1989.9 L4613.3 2020.0 L4518.9 2020.0 L4521.4 1949.1 L4475.5 1949.1 L4467.9 1938.9 L4473.0 1926.1 Z"/><path d="M4378.6 2007.8 L4442.3 2002.7 L4444.9 1995.0 L4478.1 1997.6 L4480.6 2020.0 L4378.6 2020.0 Z"/><path d="M4054.6 1658.3 L4082.7 1655.7 L4108.2 1671.0 L4118.4 1706.7 L4108.2 1713.1 L4082.7 1719.5 L4075.0 1696.5 L4057.1 1683.8 Z"/><path d="M3995.9 2028.3 L4006.1 2033.4 L4026.5 2053.8 L4039.3 2064.0 L4026.5 2066.5 L4013.8 2066.5 L4013.8 2079.3 L4008.7 2079.3 L4007.4 2066.5 L3997.2 2066.5 Z"/><path d="M3886.2 2117.6 L3906.6 2117.6 L3905.4 2131.6 L3888.8 2130.3 Z"/><path d="M4386.2 2007.9 L4411.7 2005.3 L4416.8 2000.2 L4442.3 1998.9 L4444.9 1990.0 L4475.5 1990.0 L4490.8 2005.3 L4504.8 2015.5 L4503.6 2074.2 L4495.9 2102.2 L4393.9 2104.8 L4395.2 2053.8 L4383.7 2043.6 Z"/><path d="M4437.2 2107.3 L4501.0 2104.8 L4501.0 2132.9 L4493.4 2153.3 L4480.6 2140.5 L4470.4 2155.8 L4439.8 2153.3 Z"/><path d="M4501.0 2084.4 L4531.6 2084.4 L4541.8 2066.5 L4531.6 2041.0 L4539.3 2015.5 L4531.6 1990.0 L4598.0 1990.0 L4613.3 2010.4 L4614.5 2092.0 L4608.2 2194.1 L4598.0 2270.6 L4587.8 2359.9 L4585.2 2390.0 L4439.8 2390.0 L4439.8 2354.8 L4467.9 2357.3 L4470.4 2342.0 L4480.6 2334.4 L4478.1 2296.1 L4488.3 2285.9 L4490.8 2245.1 L4498.5 2219.6 L4493.4 2194.1 L4499.7 2168.6 L4501.0 2132.9 Z"/><path d="M4439.8 2360.0 L4590.3 2360.0 L4582.7 2411.0 L4572.4 2487.6 L4562.2 2576.8 L4553.3 2666.1 L4557.1 2729.9 L4552.0 2760.0 L4353.1 2760.0 L4376.0 2742.7 L4378.6 2701.8 L4350.5 2699.3 L4348.0 2615.1 L4346.7 2538.6 L4342.9 2510.5 L4404.1 2523.3 L4406.6 2505.4 L4439.8 2469.7 Z"/><path d="M4350.5 2580.0 L4559.7 2580.0 L4557.1 2631.0 L4555.9 2722.9 L4553.3 2758.6 L4544.4 2784.1 L4516.3 2781.5 L4501.0 2799.4 L4480.6 2809.6 L4473.0 2824.9 L4467.9 2845.3 L4457.7 2860.6 L4450.0 2875.9 L4442.3 2888.7 L4432.1 2901.4 L4427.0 2919.3 L4424.5 2942.2 L4416.8 2970.3 L4393.9 2970.3 L4399.0 2937.1 L4378.6 2911.6 L4353.1 2886.1 L4322.4 2860.6 L4325.0 2845.3 L4337.8 2835.1 L4337.8 2791.7 L4363.3 2791.7 L4363.3 2758.6 L4376.0 2733.1 L4376.0 2702.4 L4350.5 2697.3 Z"/><path d="M4521.4 2831.3 L4532.9 2826.2 L4535.5 2847.9 L4524.0 2850.4 Z"/><path d="M3237.2 2230.4 L3255.1 2230.4 L3257.7 2240.6 L3237.2 2245.7 Z"/><path d="M3278.1 2082.4 L3313.8 2087.6 L3344.4 2079.9 L3369.9 2072.2 L3387.8 2077.3 L3418.4 2105.4 L3398.0 2118.2 L3354.6 2179.4 L3344.4 2184.5 L3339.3 2197.2 L3331.6 2204.9 L3313.8 2207.4 L3295.9 2212.6 L3280.6 2207.4 L3278.1 2189.6 L3280.6 2164.1 L3275.5 2138.6 Z"/><path d="M3408.2 2128.4 L3423.5 2113.1 L3443.9 2100.3 L3466.8 2085.0 L3600.0 2085.0 L3600.0 2215.1 L3548.5 2204.9 L3497.4 2179.4 L3484.7 2189.6 L3471.9 2215.1 L3454.1 2240.6 L3433.7 2261.0 L3420.9 2291.6 L3433.7 2360.0 L3408.2 2360.0 L3398.0 2304.4 L3382.7 2286.5 L3357.1 2268.7 L3339.3 2261.0 L3352.0 2210.0 L3357.1 2194.7 L3369.9 2184.5 Z"/><path d="M3404.1 2363.2 L3411.7 2345.3 L3429.6 2330.0 L3465.3 2330.0 L3470.4 2345.3 L3465.3 2360.6 L3480.6 2370.8 L3506.1 2373.4 L3572.4 2365.7 L3590.3 2358.1 L3598.0 2373.4 L3618.4 2355.5 L3628.6 2370.8 L3608.2 2391.2 L3623.5 2414.2 L3618.4 2452.4 L3605.6 2457.6 L3603.1 2480.5 L3598.0 2462.7 L3557.1 2467.8 L3521.4 2472.9 L3511.2 2498.4 L3503.6 2508.6 L3493.4 2523.9 L3506.1 2529.0 L3498.5 2534.1 L3480.6 2539.2 L3493.4 2559.6 L3501.0 2569.8 L3529.1 2590.2 L3526.5 2603.0 L3503.6 2595.3 L3480.6 2559.6 L3465.3 2544.3 L3450.0 2531.5 L3444.9 2539.2 L3434.7 2539.2 L3437.2 2508.6 L3429.6 2483.1 L3424.5 2457.6 L3419.4 2419.3 L3414.3 2396.3 L3411.7 2370.8 Z"/><path d="M3470.4 2643.8 L3480.6 2634.8 L3485.7 2643.8 L3503.6 2651.4 L3508.7 2659.1 L3501.0 2679.5 L3483.2 2682.0 L3478.1 2664.2 Z"/><path d="M2737.1 1230.0 L2900.4 1230.0 L2900.4 1240.2 L2887.7 1245.3 L2877.4 1288.7 L2882.6 1306.5 L2874.9 1332.0 L2859.6 1339.7 L2846.8 1332.0 L2841.7 1314.2 L2823.9 1309.1 L2813.7 1332.0 L2811.1 1332.0 L2800.9 1314.2 L2788.2 1293.8 L2762.7 1260.6 Z"/><path d="M2829.0 1495.3 L2900.4 1492.8 L2900.4 1546.3 L2887.7 1546.3 L2864.7 1528.5 L2839.2 1510.6 Z"/></g>
<g fill="#c3e6a9"><path d="M2834.7 982.0 L2865.3 976.9 L2901.0 969.3 L2931.6 959.1 L2941.8 982.0 L2957.1 999.9 L2962.2 1022.9 L2957.1 1043.3 L2939.3 1058.6 L2913.8 1068.8 L2885.7 1066.2 L2865.3 1073.9 L2844.9 1068.8 L2829.6 1063.7 L2824.5 1043.3 L2830.9 1017.8 L2833.4 997.3 Z"/><path d="M2865.3 895.3 L2931.6 895.3 L2931.6 936.1 L2939.3 956.5 L2918.9 961.6 L2901.0 954.0 L2880.6 948.9 L2862.8 946.3 L2850.0 931.0 L2834.7 933.6 L2844.9 920.8 L2855.1 908.1 Z"/><path d="M2998.0 895.3 L3059.2 895.3 L3056.6 918.3 L3038.8 933.6 L3020.9 943.8 L3008.2 931.0 L2998.0 918.3 Z"/><path d="M3125.5 895.3 L3200.0 895.3 L3200.0 946.3 L3176.5 943.8 L3156.1 948.9 L3135.7 938.7 L3130.6 918.3 Z"/><path d="M3033.7 987.1 L3059.2 964.2 L3084.7 956.5 L3110.2 969.3 L3135.7 964.2 L3168.9 954.0 L3200.0 938.7 L3200.0 1043.3 L3176.5 1038.2 L3148.5 1030.5 L3130.6 1043.3 L3107.7 1058.6 L3084.7 1056.0 L3066.8 1043.3 L3049.0 1022.9 L3038.8 1002.4 Z"/><path d="M2962.2 976.9 L2987.8 969.3 L2990.3 994.8 L2977.6 1022.9 L2964.8 1012.7 Z"/><path d="M3084.7 1096.8 L3110.2 1089.2 L3125.5 1099.4 L3120.4 1124.9 L3100.0 1135.1 L3084.7 1122.3 Z"/><path d="M3100.0 1237.1 L3110.2 1219.3 L3135.7 1206.5 L3156.1 1186.1 L3168.9 1150.4 L3186.7 1135.1 L3200.0 1130.0 L3200.0 1237.1 Z"/><path d="M3799.5 1068.8 L3878.6 1084.1 L3929.6 1135.1 L3965.3 1198.9 L3929.6 1186.1 L3878.6 1135.1 L3827.6 1096.8 Z"/><path d="M4223.0 1119.8 L4258.7 1112.1 L4286.7 1173.4 L4274.0 1175.9 L4235.7 1173.4 L4228.1 1145.3 Z"/><path d="M4414.3 1673.6 L4429.6 1678.7 L4444.9 1704.2 L4439.8 1722.0 L4424.5 1706.7 Z"/><path d="M3700.0 2132.9 L3725.5 2132.9 L3758.7 2158.4 L3766.3 2168.6 L3789.3 2138.0 L3809.7 2143.1 L3837.8 2143.1 L3865.8 2112.4 L3883.7 2117.6 L3906.6 2120.1 L3919.4 2109.9 L3914.3 2092.0 L3929.6 2097.1 L3937.2 2127.8 L3957.7 2127.8 L3978.1 2135.4 L3970.4 2153.3 L4001.0 2163.5 L3980.6 2178.8 L3995.9 2206.8 L3962.8 2224.7 L3944.9 2217.0 L3929.6 2265.5 L3919.4 2265.5 L3904.1 2270.6 L3878.6 2273.2 L3858.2 2275.7 L3819.9 2283.4 L3814.8 2268.1 L3802.0 2273.2 L3784.2 2268.1 L3763.8 2285.9 L3751.0 2311.4 L3725.5 2306.3 L3700.0 2321.6 Z"/><path d="M3804.6 2066.5 L3812.2 2046.1 L3825.0 2053.8 L3832.7 2081.8 L3845.4 2086.9 L3845.4 2097.1 L3807.1 2097.1 Z"/><path d="M3700.0 2056.3 L3740.8 2053.8 L3743.4 2076.7 L3700.0 2079.3 Z"/><path d="M3873.5 2030.8 L3893.9 2015.5 L3899.0 2030.8 L3888.8 2043.6 L3873.5 2041.0 Z"/><path d="M4006.1 2270.6 L4062.2 2270.6 L4062.2 2314.0 L4044.4 2344.6 L4018.9 2329.3 L4018.9 2301.2 Z"/><path d="M4143.9 2291.0 L4177.0 2288.5 L4177.0 2257.9 L4197.4 2257.9 L4223.0 2291.0 L4248.5 2326.7 L4202.6 2331.8 L4177.0 2319.1 Z"/><path d="M3784.2 2342.0 L3809.7 2344.6 L3842.9 2329.3 L3858.2 2301.2 L3914.3 2298.7 L3919.4 2321.6 L3950.0 2316.5 L3957.7 2336.9 L3983.2 2339.5 L3983.2 2357.3 L3916.8 2357.3 L3916.8 2390.0 L3730.6 2390.0 L3766.3 2372.7 L3802.0 2359.9 Z"/><path d="M3980.6 2007.9 L4006.1 2010.4 L4018.9 2030.8 L4003.6 2033.4 Z"/><path d="M4503.6 2189.0 L4513.8 2191.5 L4516.3 2219.6 L4501.0 2219.6 Z"/><path d="M4511.2 2224.7 L4521.4 2224.7 L4521.4 2270.6 L4506.1 2291.0 L4506.1 2252.8 Z"/><path d="M4541.8 2298.7 L4557.1 2296.1 L4552.0 2308.9 L4541.8 2308.9 Z"/><path d="M4552.0 2321.6 L4572.4 2316.5 L4575.0 2336.9 L4557.1 2339.5 Z"/><path d="M4302.0 2444.2 L4327.6 2436.5 L4332.7 2474.8 L4342.9 2502.9 L4322.4 2502.9 L4302.0 2482.4 Z"/><path d="M4225.5 2523.3 L4263.8 2538.6 L4271.4 2581.9 L4238.3 2574.3 L4225.5 2546.2 Z"/><path d="M4332.7 2668.7 L4350.5 2666.1 L4353.1 2760.0 L4327.6 2760.0 Z"/><path d="M4355.6 2518.2 L4365.8 2523.3 L4373.5 2528.4 L4363.3 2538.6 L4355.6 2533.5 Z"/><path d="M4383.7 2587.0 L4401.5 2587.0 L4401.5 2594.7 L4383.7 2594.7 Z"/><path d="M4416.8 2597.2 L4429.6 2594.7 L4432.1 2615.1 L4419.4 2625.3 L4409.2 2617.7 Z"/><path d="M4534.2 2668.7 L4549.5 2669.9 L4549.5 2689.1 L4536.7 2687.8 Z"/><path d="M4444.9 2462.0 L4457.7 2462.0 L4457.7 2469.7 L4444.9 2469.7 Z"/><path d="M4332.7 2671.8 L4376.0 2682.0 L4376.0 2733.1 L4363.3 2758.6 L4337.8 2743.3 Z"/><path d="M4536.7 2674.4 L4549.5 2671.8 L4549.5 2692.2 L4539.3 2692.2 Z"/><path d="M4455.1 2850.4 L4462.8 2855.5 L4452.6 2878.5 L4444.9 2873.4 Z"/><path d="M4522.7 2826.2 L4531.6 2819.8 L4534.2 2827.4 L4525.3 2832.6 Z"/><path d="M3466.8 2118.2 L3484.7 2113.1 L3500.0 2123.3 L3510.2 2133.5 L3492.3 2138.6 L3471.9 2143.7 Z"/><path d="M3408.2 2159.0 L3433.7 2153.9 L3438.8 2184.5 L3418.4 2189.6 Z"/><path d="M3339.3 2230.4 L3357.1 2225.3 L3362.2 2248.3 L3346.9 2253.4 Z"/><path d="M3446.4 2189.6 L3484.7 2189.6 L3525.5 2204.9 L3510.2 2240.6 L3484.7 2278.9 L3446.4 2291.6 L3433.7 2261.0 L3454.1 2240.6 Z"/><path d="M3524.0 2416.7 L3541.8 2411.6 L3557.1 2426.9 L3539.3 2437.1 L3521.4 2432.0 Z"/><path d="M3442.3 2467.8 L3455.1 2467.8 L3452.6 2483.1 L3442.3 2483.1 Z"/><path d="M3455.1 2424.4 L3467.9 2421.8 L3467.9 2437.1 L3455.1 2437.1 Z"/><path d="M3480.6 2370.8 L3506.1 2373.4 L3501.0 2396.3 L3480.6 2406.5 Z"/><path d="M3898.0 2743.3 L3933.7 2728.0 L3954.1 2758.6 L3989.8 2763.7 L3984.7 2799.4 L3964.3 2791.7 L3933.7 2779.0 L3903.1 2768.8 Z"/><path d="M3933.7 2835.1 L3959.2 2817.2 L3971.9 2837.7 L3949.0 2865.7 L3936.2 2860.6 Z"/><path d="M3610.0 2040.0 L3660.0 2045.0 L3690.0 2080.0 L3640.0 2100.0 L3605.0 2080.0 Z"/><path d="M3650.0 2200.0 L3700.0 2180.0 L3705.0 2250.0 L3660.0 2260.0 Z"/></g>
</g>
<g fill="#8ddaf5"><path d="M2862.8 1101.9 L2880.6 1104.5 L2893.4 1114.7 L2906.1 1117.2 L2913.8 1130.0 L2929.1 1135.1 L2939.3 1145.3 L2944.9 1155.5 L2945.7 1173.4 L2944.4 1198.9 L2941.8 1219.3 L2936.7 1234.6 L2899.0 1237.1 L2899.0 1280.0 L2857.7 1280.0 L2856.4 1237.1 L2857.7 1219.3 L2865.3 1196.3 L2852.6 1186.1 L2839.8 1181.0 L2844.9 1160.6 L2842.3 1145.3 L2839.8 1124.9 L2844.9 1109.6 Z"/><path d="M2982.7 1168.3 L2998.0 1160.6 L3008.2 1158.1 L3023.5 1165.7 L3033.7 1186.1 L3033.7 1209.1 L3023.5 1221.8 L3018.4 1237.1 L2977.6 1237.1 L2975.0 1219.3 L2980.1 1201.4 L2987.8 1186.1 Z"/><path d="M2811.7 1002.4 L2827.0 999.9 L2832.1 1007.6 L2821.9 1012.7 L2819.4 1028.0 L2827.0 1045.8 L2821.9 1053.5 L2814.3 1038.2 L2811.7 1020.3 Z"/><path d="M2778.6 1216.7 L2783.7 1214.2 L2786.2 1232.0 L2781.1 1237.1 Z"/><path d="M2748.0 1237.1 L2763.3 1239.7 L2783.7 1247.3 L2793.9 1262.7 L2788.8 1272.9 L2773.5 1262.7 L2758.2 1255.0 Z"/><path d="M3186.7 1170.8 L3196.9 1168.3 L3200.0 1181.0 L3189.3 1183.6 Z"/><path d="M3427.0 1038.2 L3442.3 1033.1 L3455.1 1043.3 L3444.9 1058.6 L3429.6 1056.0 Z"/><path d="M3457.7 1033.1 L3475.5 1030.5 L3478.1 1043.3 L3462.8 1048.4 Z"/><path d="M3507.4 1012.7 L3521.4 1007.6 L3525.3 1017.8 L3513.8 1024.1 Z"/><path d="M3489.5 1040.7 L3502.3 1038.2 L3503.6 1050.9 L3490.8 1053.5 Z"/><path d="M3515.1 1040.7 L3531.6 1038.2 L3534.2 1048.4 L3518.9 1050.9 Z"/><path d="M3480.6 1056.0 L3495.9 1056.0 L3495.9 1066.2 L3481.9 1066.2 Z"/><path d="M3502.3 1062.4 L3513.8 1061.1 L3512.5 1081.5 L3502.3 1079.0 Z"/><path d="M3524.0 1063.7 L3536.7 1058.6 L3545.7 1073.9 L3539.3 1086.6 L3526.5 1081.5 Z"/><path d="M3467.3 1090.5 L3477.6 1089.2 L3478.1 1103.2 L3467.9 1104.5 Z"/><path d="M3339.0 1048.4 L3353.1 1053.5 L3359.4 1063.7 L3353.1 1076.4 L3339.0 1071.3 Z"/><path d="M3322.4 1025.9 L3334.7 1026.7 L3333.9 1038.2 L3323.7 1036.9 Z"/><path d="M3399.0 1117.2 L3419.4 1114.7 L3428.3 1132.6 L3421.9 1150.4 L3401.5 1155.5 L3395.2 1137.7 Z"/><path d="M3453.8 1116.0 L3462.8 1114.7 L3462.8 1131.3 L3452.6 1132.6 Z"/><path d="M3462.8 1133.8 L3470.9 1133.8 L3470.4 1145.3 L3462.8 1144.0 Z"/><path d="M3489.5 1113.4 L3509.9 1112.1 L3511.2 1132.6 L3493.4 1135.1 Z"/><path d="M3596.7 1043.3 L3608.2 1036.9 L3620.9 1048.4 L3626.0 1071.3 L3613.3 1075.2 L3608.2 1058.6 L3598.0 1053.5 Z"/><path d="M3692.3 923.4 L3710.2 918.3 L3730.6 931.0 L3740.8 946.3 L3735.7 964.2 L3751.0 976.9 L3756.1 992.2 L3740.8 1007.6 L3720.4 1007.6 L3707.7 992.2 L3700.0 971.8 L3689.8 951.4 Z"/><path d="M3684.7 1007.6 L3697.4 1008.8 L3696.2 1020.3 L3684.7 1019.0 Z"/><path d="M3740.8 1043.3 L3758.7 1038.2 L3768.9 1053.5 L3761.2 1068.8 L3743.4 1066.2 Z"/><path d="M3663.0 1073.9 L3677.0 1070.1 L3684.7 1084.1 L3697.4 1096.8 L3710.2 1101.9 L3720.4 1091.7 L3730.6 1094.3 L3723.0 1109.6 L3710.2 1114.7 L3694.9 1113.4 L3679.6 1099.4 L3666.8 1089.2 Z"/><path d="M3763.8 1117.2 L3776.5 1124.9 L3789.3 1135.1 L3800.0 1137.7 L3812.2 1160.6 L3812.2 1209.1 L3786.7 1211.6 L3774.0 1198.9 L3756.1 1181.0 L3743.4 1160.6 L3740.8 1142.8 L3751.0 1124.9 Z"/><path d="M3688.5 1150.4 L3707.7 1146.6 L3714.0 1160.6 L3700.0 1170.8 L3688.5 1165.7 Z"/><path d="M3618.4 1101.9 L3626.0 1104.5 L3623.5 1122.3 L3628.6 1132.6 L3608.2 1130.0 L3603.1 1122.3 L3613.3 1114.7 Z"/><path d="M3720.4 1179.7 L3734.4 1178.5 L3735.7 1200.2 L3723.0 1201.4 Z"/><path d="M3265.1 1218.0 L3276.5 1216.7 L3276.5 1226.9 L3265.1 1226.9 Z"/><path d="M3475.5 1183.6 L3483.2 1182.3 L3484.4 1193.8 L3476.8 1195.1 Z"/><path d="M3794.4 1209.1 L3800.0 1206.5 L3800.0 1221.8 Z"/><path d="M3753.6 895.3 L3768.9 895.3 L3763.8 903.0 Z"/><path d="M3700.0 895.3 L3730.6 895.3 L3745.9 918.3 L3725.5 920.8 L3740.8 946.3 L3730.6 951.4 L3723.0 938.7 L3705.1 956.5 L3700.0 956.5 Z"/><path d="M3700.0 976.9 L3715.3 992.2 L3756.1 982.0 L3738.3 1005.0 L3715.3 1007.6 L3700.0 992.2 Z"/><path d="M3837.8 925.9 L3850.5 920.8 L3853.1 933.6 L3840.3 936.1 Z"/><path d="M3883.7 931.0 L3896.4 927.2 L3897.7 954.0 L3891.3 956.5 Z"/><path d="M3812.2 959.1 L3827.6 954.0 L3842.9 938.7 L3848.0 951.4 L3827.6 966.7 L3822.4 974.4 L3812.2 971.8 Z"/><path d="M3862.0 951.4 L3872.2 950.2 L3872.2 959.1 L3862.0 959.6 Z"/><path d="M3832.7 982.0 L3842.9 979.5 L3845.4 989.7 L3832.7 993.5 Z"/><path d="M3796.9 1002.4 L3817.3 999.9 L3814.8 1015.2 L3798.2 1017.8 Z"/><path d="M3740.8 1045.8 L3754.8 1038.2 L3763.8 1048.4 L3768.9 1061.1 L3751.0 1068.8 L3740.8 1061.1 Z"/><path d="M3700.0 1091.7 L3712.8 1101.9 L3717.9 1109.6 L3700.0 1112.1 Z"/><path d="M3720.4 1091.7 L3733.2 1090.5 L3725.5 1107.0 L3717.9 1104.5 Z"/><path d="M3740.8 1137.7 L3766.3 1135.1 L3763.8 1119.8 L3776.5 1122.3 L3789.3 1137.7 L3807.1 1145.3 L3819.9 1158.1 L3812.2 1173.4 L3819.9 1191.2 L3827.6 1211.6 L3837.8 1219.3 L3840.3 1257.6 L3832.7 1249.9 L3819.9 1232.0 L3796.9 1221.8 L3776.5 1219.3 L3763.8 1209.1 L3761.2 1186.1 L3751.0 1168.3 L3738.3 1158.1 Z"/><path d="M3720.4 1183.6 L3733.2 1181.0 L3742.1 1204.0 L3730.6 1207.8 L3720.4 1193.8 Z"/><path d="M3700.0 1147.9 L3710.2 1155.5 L3712.8 1175.9 L3700.0 1181.0 Z"/><path d="M3853.1 1178.5 L3870.9 1175.9 L3863.3 1183.6 L3859.4 1193.8 L3854.3 1188.7 Z"/><path d="M3881.1 1188.7 L3904.1 1196.3 L3924.5 1209.1 L3944.9 1219.3 L3929.6 1219.3 L3904.1 1211.6 L3883.7 1204.0 Z"/><path d="M4062.2 913.2 L4075.0 908.1 L4105.6 901.7 L4098.0 910.6 L4082.7 915.7 L4067.3 933.6 L4061.0 928.5 Z"/><path d="M4131.1 987.1 L4143.9 984.6 L4147.7 999.9 L4141.3 1030.5 L4133.7 1022.9 Z"/><path d="M4110.7 1056.0 L4128.6 1052.2 L4118.4 1061.1 L4110.7 1063.7 Z"/><path d="M4123.0 1182.3 L4156.1 1182.3 L4156.1 1214.2 L4123.0 1214.2 Z"/><path d="M4099.2 1248.6 L4119.6 1248.6 L4119.6 1270.3 L4108.2 1270.3 Z"/><path d="M4142.6 1246.1 L4164.3 1246.1 L4184.7 1257.6 L4187.2 1280.0 L4142.6 1280.0 Z"/><path d="M3751.0 1551.0 L3776.5 1535.7 L3794.4 1533.2 L3802.0 1551.0 L3800.8 1566.3 L3819.9 1581.6 L3817.3 1607.1 L3802.0 1622.4 L3784.2 1635.2 L3771.4 1644.1 L3761.2 1632.7 L3763.8 1607.1 L3756.1 1589.3 L3758.7 1579.1 L3740.8 1576.5 L3738.3 1566.3 Z"/><path d="M4120.9 1295.9 L4133.7 1293.4 L4146.4 1306.1 L4151.5 1318.9 L4143.9 1339.3 L4131.1 1344.4 L4123.5 1331.6 L4119.6 1316.3 Z"/><path d="M4142.6 1250.0 L4166.8 1250.0 L4186.0 1260.2 L4187.2 1290.8 L4171.9 1292.1 L4170.7 1309.9 L4165.6 1309.9 L4164.8 1297.2 L4142.6 1295.9 Z"/><path d="M4099.2 1250.0 L4119.6 1250.0 L4119.6 1270.4 L4110.7 1270.4 Z"/><path d="M4187.2 1344.4 L4201.3 1344.4 L4202.6 1369.9 L4187.8 1369.4 Z"/><path d="M4186.0 1410.7 L4194.9 1405.6 L4193.6 1423.5 L4184.7 1423.5 Z"/><path d="M3830.1 1250.0 L3840.3 1255.1 L3839.0 1262.8 L3831.4 1257.7 Z"/><path d="M4460.2 1620.0 L4479.3 1620.0 L4501.0 1671.0 L4488.3 1681.2 L4473.0 1655.7 Z"/><path d="M4228.1 1816.4 L4261.2 1813.9 L4266.3 1824.1 L4265.1 1844.5 L4253.6 1852.1 L4245.9 1864.9 L4238.3 1864.9 L4235.7 1844.5 L4238.3 1831.7 L4228.1 1826.6 Z"/><path d="M4363.3 1910.8 L4378.6 1903.2 L4391.3 1900.6 L4383.7 1913.4 L4378.6 1919.7 L4365.8 1917.2 Z"/><path d="M3758.7 1620.0 L3802.0 1620.0 L3781.6 1637.9 L3768.9 1644.2 L3759.9 1635.3 Z"/><path d="M3735.7 1643.0 L3743.4 1648.1 L3744.6 1660.8 L3738.3 1658.3 Z"/><path d="M3745.9 1668.5 L3751.0 1671.0 L3751.0 1688.9 L3747.2 1683.8 Z"/><path d="M3735.7 1683.8 L3739.5 1687.6 L3738.3 1696.5 L3735.2 1699.1 Z"/><path d="M4226.8 1813.9 L4261.2 1812.6 L4267.6 1824.1 L4265.1 1844.5 L4253.6 1853.4 L4248.5 1864.9 L4238.3 1864.9 L4235.7 1844.5 L4239.5 1831.7 L4226.8 1826.6 Z"/><path d="M3943.6 1909.5 L3952.6 1899.3 L3960.2 1895.5 L3957.7 1903.2 L3948.7 1912.1 Z"/><path d="M3899.0 1913.4 L3919.4 1900.6 L3921.9 1898.1 L3916.8 1893.0 L3904.1 1905.7 Z"/><path d="M4108.2 1713.1 L4133.7 1727.1 L4159.2 1747.6 L4177.0 1773.1 L4197.4 1798.6 L4205.1 1824.1 L4217.9 1857.2 L4225.5 1880.2 L4229.3 1913.4 L4229.3 1941.4 L4217.9 1972.0 L4205.1 1992.4 L4184.7 2010.3 L4174.5 2020.0 L4012.5 2020.0 L4009.9 2010.3 L4003.6 1992.4 L3998.5 1972.0 L3993.4 1951.6 L3990.8 1941.4 L3983.2 1931.2 L3978.1 1915.9 L3970.4 1900.6 L3962.8 1894.2 L3950.0 1890.4 L3937.2 1890.4 L3921.9 1898.1 L3916.8 1893.0 L3914.3 1886.6 L3924.5 1885.3 L3944.9 1877.7 L3965.3 1878.9 L3975.5 1873.8 L3988.3 1875.1 L3993.4 1864.9 L4006.1 1854.7 L4011.2 1841.9 L4021.4 1839.4 L4029.1 1829.2 L4041.8 1821.5 L4052.0 1821.5 L4057.1 1813.9 L4067.3 1803.7 L4069.9 1796.0 L4082.7 1801.1 L4090.3 1790.9 L4087.8 1778.2 L4077.6 1770.5 L4062.2 1768.0 L4062.2 1752.7 L4067.3 1745.0 L4072.4 1752.7 L4082.7 1750.1 L4082.7 1739.9 L4077.6 1729.7 L4082.7 1719.5 L4108.2 1713.1 Z"/><path d="M4003.6 1987.4 L4006.1 1997.7 L4013.8 2015.5 L4018.9 2030.8 L4039.3 2041.0 L4057.1 2051.2 L4062.2 2061.4 L4075.0 2074.2 L4082.7 2079.3 L4098.0 2066.5 L4113.3 2076.7 L4123.5 2064.0 L4133.7 2056.3 L4141.3 2048.7 L4149.0 2035.9 L4159.2 2041.0 L4169.4 2043.6 L4177.0 2041.0 L4174.5 2014.2 L4205.1 1987.4 Z"/><path d="M4002.6 1956.8 L4206.6 1956.8 L4206.6 1990.0 L4002.6 1990.0 Z"/><path d="M4524.0 2712.0 L4539.3 2699.3 L4553.3 2691.6 L4555.9 2729.9 L4549.5 2760.0 L4513.8 2760.0 L4518.9 2729.9 Z"/><path d="M4552.0 2523.3 L4564.8 2505.4 L4567.3 2523.3 L4562.2 2538.6 L4552.0 2536.0 Z"/><path d="M4348.0 2696.7 L4356.9 2696.7 L4356.9 2705.7 L4348.0 2705.7 Z"/><path d="M4358.2 2712.0 L4368.4 2712.0 L4368.4 2721.0 L4358.2 2721.0 Z"/><path d="M4401.5 2722.2 L4411.7 2722.2 L4411.7 2732.4 L4401.5 2732.4 Z"/><path d="M4549.0 2651.4 L4551.5 2651.4 L4548.5 2682.0 L4544.9 2722.9 L4543.4 2758.6 L4539.3 2782.0 L4516.3 2781.5 L4513.8 2768.8 L4516.3 2745.8 L4521.4 2722.9 L4529.1 2702.4 L4539.3 2687.1 Z"/><path d="M4348.0 2696.1 L4356.9 2696.1 L4356.9 2705.0 L4348.0 2705.0 Z"/><path d="M4358.2 2711.4 L4368.4 2711.4 L4368.4 2720.3 L4358.2 2720.3 Z"/><path d="M4401.5 2722.9 L4411.7 2722.9 L4411.7 2731.8 L4401.5 2731.8 Z"/><path d="M4359.4 2754.7 L4368.4 2754.7 L4368.4 2763.7 L4359.4 2763.7 Z"/><path d="M4308.4 2813.4 L4316.1 2813.4 L4316.1 2827.4 L4308.4 2827.4 Z"/><path d="M3275.5 2215.1 L3295.9 2212.6 L3313.8 2207.4 L3331.6 2204.9 L3339.3 2197.2 L3344.4 2184.5 L3354.6 2179.4 L3398.0 2118.2 L3418.4 2105.4 L3438.8 2092.7 L3464.3 2079.9 L3466.8 2085.0 L3443.9 2100.3 L3423.5 2113.1 L3408.2 2128.4 L3369.9 2184.5 L3357.1 2194.7 L3352.0 2210.0 L3339.3 2217.7 L3316.3 2225.3 L3301.0 2222.8 L3293.4 2230.4 L3278.1 2225.3 Z"/><path d="M3331.6 2261.0 L3357.1 2268.7 L3382.7 2286.5 L3398.0 2304.4 L3408.2 2329.9 L3408.2 2360.0 L3400.5 2360.0 L3390.3 2335.0 L3377.6 2314.6 L3352.0 2289.1 L3331.6 2276.3 Z"/><path d="M3449.0 2248.3 L3471.9 2250.8 L3482.1 2261.0 L3459.2 2263.6 Z"/><path d="M3442.3 2498.4 L3450.0 2495.8 L3453.8 2506.0 L3447.4 2508.6 L3442.3 2523.9 L3439.8 2508.6 Z"/><path d="M3770.4 2758.6 L3783.2 2758.6 L3795.9 2781.5 L3813.8 2794.3 L3821.4 2807.0 L3839.3 2827.4 L3846.9 2840.2 L3841.8 2850.4 L3831.6 2842.8 L3829.1 2830.0 L3813.8 2817.2 L3803.6 2801.9 L3788.3 2784.1 L3778.1 2771.3 Z"/><path d="M3775.5 2789.2 L3780.6 2784.1 L3790.8 2801.9 L3795.9 2804.5 L3778.1 2817.2 L3775.5 2830.0 L3773.0 2814.7 L3783.2 2804.5 L3776.8 2796.8 Z"/><path d="M3846.9 2855.5 L3857.1 2853.0 L3867.3 2868.3 L3857.1 2873.4 L3846.9 2865.7 Z"/><path d="M3872.4 2893.8 L3882.7 2891.2 L3898.0 2901.4 L3885.2 2909.1 L3892.9 2921.8 L3905.6 2934.6 L3920.9 2937.1 L3938.8 2947.3 L3933.7 2957.6 L3949.0 2962.7 L3941.3 2970.3 L3918.4 2960.1 L3908.2 2947.3 L3887.8 2942.2 L3880.1 2932.0 L3867.3 2934.6 L3857.1 2942.2 L3864.8 2929.5 L3875.0 2921.8 L3877.6 2906.5 Z"/><path d="M2757.6 1240.2 L2772.9 1245.3 L2788.2 1263.2 L2780.5 1265.7 L2767.8 1253.0 Z"/><path d="M2788.2 1275.9 L2800.9 1281.0 L2808.6 1296.3 L2798.4 1293.8 Z"/><path d="M2813.7 1301.4 L2839.2 1298.9 L2839.2 1314.2 L2823.9 1309.1 Z"/><path d="M2872.3 1293.8 L2880.0 1296.3 L2877.4 1314.2 L2871.1 1311.6 Z"/><path d="M2839.2 1510.6 L2864.7 1508.1 L2874.9 1513.2 L2864.7 1523.4 L2849.4 1518.3 Z"/><path d="M4173.5 890.2 L4196.4 956.5 L4219.4 1012.7 L4239.8 1063.7 L4260.2 1109.6 L4280.6 1155.5 L4301.0 1198.9 L4318.9 1242.2 L4343.1 1242.2 L4328.6 1211.6 L4313.3 1178.5 L4292.9 1135.1 L4272.4 1084.1 L4254.6 1043.3 L4241.8 1002.4 L4232.9 951.4 L4231.6 890.2 Z"/><path d="M4353.1 1313.8 L4363.3 1326.5 L4378.6 1357.1 L4386.2 1377.6 L4399.0 1403.1 L4404.1 1479.6 L4416.8 1512.8 L4424.5 1543.4 L4437.2 1579.1 L4452.6 1612.2 L4467.9 1650.0 L4488.3 1650.0 L4478.1 1619.9 L4465.3 1589.3 L4450.0 1548.5 L4439.8 1517.9 L4432.1 1492.3 L4416.8 1449.0 L4399.0 1392.9 L4388.8 1352.0 L4378.6 1313.8 L4368.4 1293.4 L4353.1 1293.4 Z"/><path d="M4467.9 1614.9 L4488.3 1614.9 L4506.1 1671.0 L4495.9 1678.7 L4480.6 1655.7 Z"/></g>
<path d="M4064.8 933.6 L4064.8 943.8 L4090.3 969.3 L4133.7 992.2 M4138.8 1030.5 L4133.7 1053.5 M4110.7 1063.7 L4104.3 1089.2 L4108.2 1119.8 L4123.5 1137.7 M4452.6 1620.0 L4455.1 1632.8 L4467.9 1653.2 L4475.5 1673.6 M4419.4 1671.0 L4424.5 1683.8 L4439.8 1688.9 L4452.6 1704.2 L4465.3 1709.3 L4480.6 1706.7 M4455.1 1704.2 L4457.7 1722.0 L4452.6 1737.3 M4467.9 1739.9 L4462.8 1757.8 L4460.2 1768.0 M3985.7 1692.7 L3993.4 1699.1 L4024.0 1709.3 L4041.8 1739.9 L4057.1 1759.0 M3911.7 1987.3 L3901.5 2007.8 L3888.8 2020.0 M3700.0 2033.4 L3733.2 2020.6 L3763.8 2024.4 L3802.0 2025.7 L3819.9 2028.3 L3858.2 2029.5 L3888.8 2018.1 L3904.1 2002.8 L3911.7 1990.0 M3929.6 2030.8 L3929.6 2041.0 L3955.1 2039.7 L3980.6 2047.4 M4174.5 2023.2 L4180.9 2051.2 L4166.8 2074.2 L4164.3 2084.4 M4601.8 1990.0 L4605.6 2028.3 L4606.9 2092.0 L4604.3 2168.6 L4601.8 2219.6 M3464.3 2079.9 L3497.4 2074.8 L3535.7 2077.3 L3600.0 2082.4 M3600.0 2082.0 L3640.0 2060.0 L3700.0 2034.0" fill="none" stroke="#8ddaf5" stroke-width="2.6" stroke-opacity=".85" stroke-linecap="round" stroke-linejoin="round"/>
<g fill="rgba(120,190,110,.07)"><path d="M3622.4 2739.4 L3635.2 2739.4 L3635.2 2730.5 L3646.7 2730.5 L3646.7 2721.6 L3663.3 2721.6 L3663.3 2696.1 L3699.0 2696.1 L3699.0 2738.2 L3729.6 2738.2 L3729.6 2716.5 L3795.9 2716.5 L3795.9 2759.8 L3827.8 2759.8 L3827.8 2770.1 L3838.0 2770.1 L3838.0 2781.5 L3849.5 2781.5 L3849.5 2791.7 L3859.7 2791.7 L3859.7 2814.7 L3892.9 2814.7 L3892.9 2824.9 L3903.1 2824.9 L3903.1 2846.6 L3914.5 2846.6 L3914.5 2858.1 L3924.7 2858.1 L3924.7 2873.4 L3934.9 2873.4 L3934.9 2900.2 L4065.1 2898.9 L4065.1 2790.5 L4112.2 2790.5 L4112.2 2972.9 L3813.8 2972.9 L3795.9 2932.0 L3704.1 2824.9 L3622.4 2749.6 Z"/><path d="M4112.0 2790.0 L4200.0 2790.0 L4306.0 2790.0 L4307.0 2848.0 L4299.0 2860.0 L4297.0 2871.0 L4276.0 2878.0 L4276.0 2919.0 L4259.0 2925.0 L4260.0 2975.0 L4112.0 2975.0 Z"/></g>
<path d="M4200.0 2790.5 L4305.9 2790.5 L4307.1 2847.9 L4299.5 2860.6 L4296.9 2870.8 L4276.5 2878.5 L4276.5 2919.3 L4258.7 2925.7 L4259.9 2970.3 M4419.4 2970.3 L4429.6 2937.1 L4432.1 2905.3 L4490.8 2911.6 L4503.6 2858.1 L4518.9 2859.3 L4546.9 2877.2 L4578.8 2877.2 L4575.0 2970.3 M3815.1 2972.9 L3795.9 2932.0 L3704.1 2824.9 L3622.4 2749.6 L3622.4 2739.4 L3635.2 2739.4 L3635.2 2730.5 L3646.7 2730.5 L3646.7 2721.6 L3663.3 2721.6 L3663.3 2696.1 L3699.0 2696.1 L3699.0 2738.2 L3729.6 2738.2 L3729.6 2716.5 L3795.9 2716.5 L3795.9 2759.8 L3827.8 2759.8 L3827.8 2770.1 L3838.0 2770.1 L3838.0 2781.5 L3849.5 2781.5 L3849.5 2791.7 L3859.7 2791.7 L3859.7 2814.7 L3892.9 2814.7 L3892.9 2824.9 L3903.1 2824.9 L3903.1 2846.6 L3914.5 2846.6 L3914.5 2858.1 L3924.7 2858.1 L3924.7 2873.4 L3934.9 2873.4 L3934.9 2900.2 L4065.1 2898.9 L4065.1 2790.5 L4112.2 2790.5 M4095.0 2790.5 L4205.0 2790.5" fill="none" stroke="#8fc98a" stroke-width="5" stroke-linejoin="round" stroke-opacity=".8"/>
<g fill="rgba(200,160,180,.16)" stroke="#cfa9bd" stroke-width="4.5" stroke-linejoin="round" stroke-opacity=".85"><path d="M3921.9 1742.4 L3946.2 1742.4 L3946.2 1764.1 L3990.8 1764.1 L3990.8 1776.9 L3971.7 1776.9 L3969.1 1788.4 L3964.0 1796.0 L3955.1 1798.6 L3955.1 1811.3 L3944.9 1821.5 L3936.0 1829.2 L3930.9 1843.2 L3924.5 1844.5 L3924.5 1859.8 L3914.3 1866.2 L3901.5 1875.1 L3890.1 1877.7 L3890.1 1868.7 L3878.6 1868.7 L3878.6 1843.2 L3890.1 1843.2 L3890.1 1810.1 L3878.6 1810.1 L3878.6 1798.6 L3890.1 1798.6 L3890.1 1775.6 L3921.9 1775.6 Z"/><path d="M3899.0 1785.8 L3914.3 1785.8 L3914.3 1799.8 L3899.0 1799.8 Z"/><path d="M3918.1 2352.3 L3918.1 2390.6 L3897.7 2390.6 L3897.7 2423.8 L4082.7 2421.2 L4082.7 2367.7 L3983.2 2367.7 L3983.2 2352.3 Z"/><path d="M4050.8 2421.2 L4136.2 2421.2 L4136.2 2486.3 L4113.3 2486.3 L4113.3 2502.9 L4117.1 2502.9 L4118.4 2630.4 L4054.6 2630.4 L4050.8 2502.9 Z"/></g>
<path d="M2811.7 951.4 L2839.8 951.4 L2880.6 964.2 L2901.0 968.0 L2931.6 959.1 L2972.4 962.9 L3033.7 969.3 L3066.8 971.8 M2850.0 895.3 L2852.6 956.5 L2855.1 979.5 M2834.7 979.5 L2834.7 1058.6 M2855.1 979.5 L2898.5 969.3 M2962.2 999.9 L2963.5 1137.7 M2972.4 895.3 L2990.3 925.9 L2987.8 976.9 L2963.5 1012.7 M2867.9 1073.9 L2931.6 1084.1 L2998.0 1089.2 L3071.9 1089.2 M2839.8 1117.2 L2931.6 1118.5 L2998.0 1117.2 L3049.0 1119.8 M2768.4 1142.8 L2844.9 1141.5 L2906.1 1135.1 L2931.6 1137.7 M2748.0 1130.0 L2763.3 1142.8 L2742.9 1173.4 L2733.9 1198.9 L2742.9 1237.1 M2737.8 1198.9 L2819.4 1196.3 M2740.3 1232.0 L2844.9 1234.6 M2742.9 1177.2 L2778.6 1177.2 M2776.0 1142.8 L2776.0 1280.0 M2796.4 1196.3 L2796.4 1280.0 M2814.3 1196.3 L2814.3 1280.0 M2801.5 982.0 L2793.9 1022.9 L2791.3 1096.8 L2793.9 1142.8 M2824.5 1056.0 L2827.0 1109.6 L2844.9 1114.7 M3015.8 1084.1 L3015.8 1053.5 L3038.8 1033.1 L3061.7 1007.6 L3066.8 971.8 L3064.3 938.7 M3000.5 1073.9 L3071.9 1073.9 M3038.8 1073.9 L3038.8 1135.1 M3023.5 1117.2 L3023.5 1142.8 M3181.6 895.3 L3179.1 941.2 L3163.8 969.3 L3135.7 1030.5 L3123.0 1043.3 M3064.3 964.2 L3135.7 948.9 L3179.1 938.7 M2855.1 1206.5 L2941.8 1196.3 M2962.2 1150.4 L2962.2 1211.6 M2880.6 1214.2 L2939.3 1196.3 M3084.7 1135.1 L3200.0 1124.9 M3084.7 1160.6 L3200.0 1163.2 M3529.1 895.3 L3536.7 941.2 L3539.3 1033.1 L3541.8 1084.1 L3546.9 1130.0 M3605.6 918.3 L3582.7 956.5 L3559.7 1002.4 L3554.6 1033.1 L3553.3 1099.4 M3480.6 1043.3 L3552.0 1033.1 M3424.5 1071.3 L3480.6 1058.6 L3552.0 1050.9 M3480.6 1043.3 L3480.6 1109.6 L3419.4 1168.3 L3414.3 1188.7 L3421.9 1235.9 M3317.3 989.7 L3319.9 1058.6 M3411.7 895.3 L3419.4 976.9 M3200.0 895.3 L3263.8 928.5 L3314.8 987.1 M3296.9 1073.9 L3411.7 1073.9 M3429.6 1071.3 L3480.6 1109.6 M3480.6 1109.6 L3506.1 1112.1 L3513.8 1124.9 L3546.9 1130.0 M3554.6 1099.4 L3572.4 1109.6 L3572.4 1130.0 M3200.0 1165.7 L3276.5 1170.8 L3307.1 1193.8 L3411.7 1188.7 M3416.8 1188.7 L3480.6 1181.0 M3669.4 1201.4 L3700.0 1209.1 L3761.2 1235.9 M3322.4 1160.6 L3317.3 1235.9 M3215.3 1147.9 L3217.9 1201.4 L3200.0 1221.8 M3388.8 1150.4 L3406.6 1186.1 M3567.3 1206.5 L3577.6 1235.9 M3605.6 918.3 L3677.0 918.3 L3689.8 895.3 M3439.8 1043.3 L3441.1 1073.9 M3480.6 1094.3 L3554.6 1099.4 M4184.7 895.3 L4200.0 931.0 L4210.2 964.2 M3751.0 918.3 L3766.3 927.2 L3819.9 928.5 L3842.9 938.7 L3858.2 964.2 L3904.1 1002.4 L3919.4 1005.0 L4016.3 1025.4 L4044.4 1042.0 L4108.2 1048.4 L4164.3 1053.5 M3919.4 1005.0 L3921.9 1053.5 L3970.4 1155.5 L3978.1 1209.1 L4018.9 1280.0 M4166.8 968.0 L4230.6 954.0 M4169.4 1021.6 L4245.9 1010.1 M4166.8 1054.7 L4221.7 1056.0 L4223.0 1116.0 L4258.7 1110.9 M3700.0 1211.6 L3758.7 1261.4 L3845.4 1262.7 L3883.7 1280.0 M4174.5 895.3 L4210.2 987.1 L4261.2 1109.6 L4300.0 1193.8 M3745.9 1250.0 L3758.7 1261.5 L3845.4 1262.8 L3962.8 1320.2 L4003.6 1326.5 L4034.2 1341.8 L4052.0 1353.3 L4090.3 1357.1 L4123.5 1383.9 L4300.0 1387.8 M4003.6 1250.0 L4034.2 1299.7 L4029.1 1318.9 L4039.3 1352.0 L4052.0 1385.2 L4098.0 1466.8 L4096.7 1530.6 L4085.2 1650.0 M4096.7 1529.8 L4300.0 1530.6 M3734.4 1540.8 L3756.1 1542.1 L3789.3 1529.8 L3819.9 1547.2 L3882.4 1580.4 L3934.7 1594.4 L3946.2 1576.0 L3980.6 1585.5 L4031.6 1632.7 L4044.4 1650.0 M4171.9 1650.0 L4197.4 1632.7 L4217.9 1596.9 L4254.8 1584.9 L4281.6 1591.8 L4300.0 1589.3 M4350.5 1313.8 L4378.6 1382.7 L4383.7 1398.0 L4404.1 1479.6 L4419.4 1525.5 L4421.9 1556.1 L4442.3 1650.0 M4200.0 1386.5 L4378.6 1387.8 M4200.0 1530.6 L4419.4 1530.6 M4340.3 1475.8 L4370.9 1475.8 L4369.6 1530.6 M4378.6 1551.0 L4419.4 1547.2 M4404.1 1505.1 L4404.1 1547.2 M4200.0 1627.6 L4217.9 1598.2 L4253.6 1585.5 L4281.6 1591.8 L4312.2 1584.2 L4337.8 1565.1 L4373.5 1556.1 M4424.5 1627.7 L4444.9 1665.9 L4465.3 1716.9 L4485.7 1747.6 L4526.5 1788.4 L4541.8 1811.3 L4567.3 1862.3 L4582.7 1908.3 L4598.0 1959.3 L4598.0 2020.0 M4401.5 1662.1 L4444.9 1663.4 M4381.1 1746.3 L4429.6 1746.3 M4439.8 1738.6 L4478.1 1734.8 M4457.7 1683.8 L4485.7 1683.8 M4200.0 1762.9 L4284.2 1831.7 L4327.6 1857.2 L4393.9 1903.2 L4480.6 1959.3 L4541.8 2010.3 M4225.5 1877.7 L4286.7 1854.7 L4325.0 1862.3 L4393.9 1836.8 L4455.1 1826.6 M4455.1 1773.1 L4467.9 1752.7 L4473.0 1737.3 M4465.3 1778.2 L4439.8 1808.8 L4429.6 1816.4 M4506.1 1987.3 L4598.0 1986.1 M4552.0 1956.7 L4598.0 1956.7 M4572.4 1956.7 L4575.0 2020.0 M3734.4 1709.3 L3873.5 1709.3 L3929.6 1691.4 L4082.7 1685.8 M4082.7 1685.8 L4138.8 1672.3 L4197.4 1632.8 L4205.1 1620.0 M4016.3 1620.0 L4034.2 1634.0 L4069.9 1683.8 M4087.8 1620.0 L4082.7 1685.8 L4082.7 1719.5 L4057.1 1757.8 L4006.1 1788.4 L3950.0 1858.5 L3893.9 1885.3 L3887.5 1992.4 M3734.4 1658.3 L3747.2 1686.3 L3745.9 1773.1 L3740.8 1847.0 L3759.9 1924.8 L3809.7 1944.0 L3844.1 1992.4 L3914.3 1997.6 L3914.3 2020.0 M3759.9 1924.8 L3734.4 1954.2 M3844.1 1992.4 L3832.7 2009.0 L3700.0 2009.0 M4108.2 1713.1 L4146.4 1737.3 L4197.4 1793.5 L4225.5 1877.7 L4229.3 1938.9 L4207.7 1989.9 L4194.9 2020.0 M4120.9 1708.0 L4200.0 1763.9 M4225.5 1877.7 L4286.7 1854.7 L4300.0 1856.0 M4207.7 1989.9 L4217.9 1972.0 L4261.2 2020.0 M3700.0 2042.3 L3853.1 2042.3 L3870.9 2052.5 L3914.3 2051.2 L4012.5 2052.0 L4036.7 2056.3 L4069.9 2071.6 L4090.3 2095.9 L4115.8 2093.3 L4152.8 2107.3 L4159.2 2120.1 L4189.8 2118.8 L4192.3 2074.2 L4206.4 1990.0 M3842.9 1990.0 L3832.7 2009.1 L3700.0 2009.1 M3842.9 1990.0 L3914.3 1996.4 L3914.3 2051.2 M4159.2 2120.1 L4163.0 2200.5 L4300.0 2390.0 M4180.9 2117.6 L4180.9 2072.9 L4300.0 2072.9 M4174.5 2014.2 L4179.6 2053.8 L4180.9 2072.9 M3700.0 2306.3 L3738.3 2345.9 L3738.3 2390.0 M4502.3 2086.9 L4502.3 2390.0 M4539.3 2102.2 L4539.3 2390.0 M4562.2 2092.0 L4562.2 2390.0 M4598.0 1990.0 L4598.0 2270.6 M4580.1 2270.6 L4580.1 2390.0 M4501.0 2085.7 L4600.1 2085.7 M4501.0 2129.0 L4598.1 2129.0 M4501.0 2153.3 L4597.0 2153.3 M4501.0 2173.7 L4596.1 2173.7 M4501.0 2222.1 L4594.0 2222.1 M4501.0 2270.6 L4591.8 2270.6 M4501.0 2321.6 L4589.5 2321.6 M4501.0 2344.6 L4588.5 2344.6 M4501.0 2377.8 L4587.0 2377.8 M4200.0 2072.9 L4332.7 2072.9 L4378.6 2102.2 L4501.0 2106.1 M4238.3 1990.0 L4378.6 2102.2 M4499.7 2168.6 L4501.0 2390.0 M4467.9 2411.0 L4467.9 2760.0 M4428.3 2487.6 L4428.3 2691.6 M4502.3 2360.0 L4502.3 2548.8 M4539.3 2360.0 L4539.3 2691.6 M4444.9 2691.6 L4444.9 2760.0 M4516.3 2553.9 L4516.3 2717.1 M4442.3 2414.8 L4571.9 2414.8 M4442.3 2436.5 L4570.6 2436.5 M4439.8 2472.2 L4568.6 2472.2 M4421.9 2491.4 L4567.5 2491.4 M4350.5 2569.2 L4563.0 2569.2 M4350.5 2581.9 L4562.3 2581.9 M4350.5 2592.1 L4561.7 2592.1 M4350.5 2601.1 L4561.2 2601.1 M4350.5 2615.1 L4560.4 2615.1 M4378.6 2727.3 L4553.9 2727.3 M4378.6 2742.7 L4553.0 2742.7 M4274.0 2360.0 L4327.6 2434.0 L4342.9 2510.5 L4350.5 2699.3 L4314.8 2691.6 L4312.2 2760.0 M4441.1 2580.0 L4441.1 2835.1 M4458.9 2669.3 L4458.9 2809.6 M4475.5 2580.0 L4475.5 2809.6 M4516.3 2580.0 L4516.3 2707.6 M4541.8 2580.0 L4541.8 2687.1 M4350.5 2580.0 L4350.5 2697.3 M4316.1 2692.2 L4316.1 2970.3 M4348.0 2791.7 L4348.0 2860.6 M4350.5 2594.0 L4557.1 2594.0 M4350.5 2608.1 L4557.1 2608.1 M4350.5 2623.4 L4557.1 2623.4 M4350.5 2634.8 L4557.1 2634.8 M4424.5 2712.7 L4521.4 2712.7 M4424.5 2733.1 L4518.9 2733.1 M4424.5 2748.4 L4516.3 2748.4 M4307.1 2791.7 L4429.6 2791.7 M4317.3 2845.3 L4424.5 2845.3 M4317.3 2925.7 L4378.6 2925.7 M4313.5 2692.2 L4350.5 2651.4 M4424.5 2733.1 L4457.7 2758.6 M4516.3 2756.0 L4552.0 2753.5 M4521.4 2725.4 L4557.1 2721.6 M4529.1 2699.9 L4557.1 2697.3 M4516.3 2781.5 L4541.8 2786.6 M3283.2 1983.0 L3278.1 2082.4 L3274.2 2136.0 L3279.3 2161.5 L3329.1 2164.1 L3387.8 2161.5 L3433.7 2156.4 L3535.7 2156.4 L3543.4 2164.1 L3561.2 2164.1 M3275.5 2139.8 L3295.9 2139.8 L3334.2 2120.7 L3387.8 2097.8 L3418.4 2082.4 L3459.2 2078.6 M3364.8 2079.9 L3367.3 2113.1 L3377.6 2123.3 M3418.4 2136.0 L3433.7 2143.7 L3459.2 2156.4 L3523.0 2197.2 L3561.2 2217.7 L3600.0 2227.9 M3387.8 2179.4 L3387.8 2217.7 L3400.5 2218.9 L3400.5 2179.4 M3387.8 2217.7 L3408.2 2245.7 L3428.6 2291.6 L3433.7 2360.0 M3359.7 2194.7 L3339.3 2225.3 L3331.6 2276.3 L3341.8 2284.0 L3367.3 2312.0 L3387.8 2317.1 L3398.0 2360.0 M3459.2 1983.0 L3460.5 2079.9 M3459.2 2082.4 L3600.0 2085.0 M3429.6 2330.0 L3433.4 2406.5 L3437.2 2508.6 L3444.9 2513.7 L3480.6 2546.8 L3506.1 2569.8 L3569.9 2615.7 L3725.5 2681.5 L3800.0 2699.9 M3434.7 2411.6 L3569.9 2407.8 L3572.4 2345.3 L3633.7 2340.2 L3738.3 2345.3 L3738.3 2625.9 L3725.5 2681.5 M3455.1 2411.6 L3457.7 2518.8 M3508.7 2411.6 L3511.2 2534.1 L3503.6 2564.7 M3437.2 2485.6 L3478.1 2485.6 M3444.9 2512.4 L3498.5 2508.6 L3503.6 2500.9 M3404.1 2368.3 L3465.3 2368.3 M3391.3 2330.0 L3404.1 2368.3 M3538.3 2595.3 L3571.4 2618.3 L3724.5 2680.8 L3770.4 2688.4 L3808.7 2705.0 L4023.0 2729.2 L4081.6 2789.2 M3737.2 2580.0 L3736.0 2625.9 L3725.8 2680.8 M3738.3 2360.0 L3737.0 2625.3 L3725.5 2681.4 M3700.0 2671.2 L3725.5 2681.4 L3766.3 2687.8 L3809.7 2705.7 L4024.0 2728.6 L4054.6 2760.0 M4276.5 2360.0 L4300.0 2385.5 M2811.1 1332.0 L2813.7 1362.7 L2821.3 1378.0 M2803.5 1463.4 L2829.0 1495.3 L2836.6 1520.8 L2846.8 1546.3 L2887.7 1597.3 L2900.4 1612.7 M2742.2 1232.6 L2839.2 1237.7 M2778.0 1260.6 L2877.4 1263.2 M2793.3 1288.7 L2877.4 1287.4 M2775.4 1230.0 L2776.7 1258.1 M2798.4 1230.0 L2798.4 1288.7 M2813.7 1230.0 L2813.7 1288.7 M2834.1 1230.0 L2834.1 1286.1 M2811.1 1332.0 L2846.8 1328.2 M2829.0 1495.3 L2900.4 1494.0 M2834.1 1517.0 L2900.4 1520.8 M3459.0 2078.0 L3560.0 2085.0 L3640.0 2043.0 L3700.0 2042.0 M3677.0 2040.0 L3678.0 2320.0 L3690.0 2345.0 M4373.5 1293.4 L4393.9 1352.0 L4404.1 1392.9 L4437.2 1492.3 L4470.4 1589.3 L4493.4 1650.0 M4404.1 1479.6 L4434.7 1474.5 M4416.8 1512.8 L4442.3 1515.3 M4419.4 1525.5 L4444.9 1520.4" fill="none" stroke="#bbc3da" stroke-width="1.7" stroke-linejoin="round"/>
<path d="M2821.9 895.3 L2814.3 920.8 L2807.9 954.0 L2806.6 1002.4 L2807.1 1058.6 L2807.9 1099.4 L2809.2 1117.2 M2932.9 895.3 L2932.9 936.1 L2939.3 964.2 L2944.4 984.6 M2922.7 1066.2 L2921.4 1076.4 L2936.7 1094.3 L2938.0 1124.9 L2939.3 1145.3 L2941.8 1150.4 M3066.8 931.0 L3049.0 956.5 L3036.2 987.1 L3020.9 1022.9 L3005.6 1035.6 L2996.7 1050.9 L2995.4 1084.1 L2998.0 1135.1 L2999.2 1145.3 M3036.2 989.7 L3056.6 1043.3 L3071.9 1089.2 L3082.1 1109.6 L3083.4 1145.3 L3079.6 1168.3 L3071.9 1186.1 L3069.4 1211.6 L3070.7 1237.1 M3200.0 1096.8 L3161.2 1098.1 L3123.0 1104.5 L3084.7 1112.1 L3056.6 1119.8 L3033.7 1137.7 L2998.0 1145.3 L2964.8 1147.9 L2944.4 1153.0 L2918.9 1163.2 L2893.4 1175.9 L2878.1 1186.1 L2865.3 1198.9 L2858.9 1221.8 L2857.7 1242.2 L2857.7 1280.0 M3018.4 1145.3 L3033.7 1150.4 L3056.6 1153.0 L3066.8 1168.3 L3079.6 1169.5 M2998.0 1150.4 L2982.7 1158.1 L2964.8 1191.2 L2959.7 1196.3 L2941.8 1196.3 M2816.8 1193.8 L2832.1 1216.7 L2844.9 1237.1 L2847.4 1280.0 M3194.9 1093.8 L3263.8 1085.4 L3281.6 1081.5 L3337.8 1035.6 L3368.4 1006.3 L3401.5 996.1 L3473.0 971.8 L3536.7 937.4 L3559.7 915.7 L3568.6 895.3 M3401.5 997.3 L3411.7 1033.1 L3414.3 1101.9 L3401.5 1109.6 L3378.6 1113.4 M3748.5 918.3 L3763.8 951.4 L3768.9 997.3 L3784.2 1043.3 L3800.0 1058.6 M3733.2 895.3 L3745.9 918.3 L3763.8 954.0 L3766.3 994.8 L3789.3 1048.4 L3855.6 1104.5 L3876.0 1113.4 L3924.5 1165.7 L3960.2 1216.7 L3970.4 1260.1 L3988.3 1280.0 M4141.3 895.3 L4164.3 966.7 L4166.8 1053.5 L4217.9 1117.2 L4228.1 1142.8 L4240.8 1216.7 L4271.4 1260.1 L4272.7 1280.0 M3967.9 1250.0 L3971.7 1260.2 L4036.7 1329.1 L4039.3 1352.0 L4105.6 1438.8 L4123.5 1446.4 L4207.7 1447.7 L4212.8 1454.1 M4274.0 1502.6 L4300.0 1503.8 M4261.2 1250.0 L4271.4 1260.2 L4271.4 1313.8 L4291.8 1400.5 L4300.0 1413.3 M4261.2 1250.0 L4271.4 1260.2 L4271.4 1313.8 L4291.8 1403.1 L4337.8 1479.6 L4348.0 1507.7 L4370.9 1525.5 L4376.0 1533.2 L4378.6 1551.0 L4373.5 1561.2 L4360.7 1589.3 L4359.4 1650.0 M4274.0 1502.6 L4332.7 1505.1 L4353.1 1535.7 L4373.5 1561.2 M4358.2 1620.0 L4358.2 1645.5 M4368.4 1706.7 L4369.6 1732.2 L4381.1 1755.2 L4406.6 1773.1 L4450.0 1774.3 M4388.8 1620.0 L4399.0 1658.3 L4424.5 1714.4 L4450.0 1774.3 L4480.6 1824.1 L4483.2 1844.5 L4518.9 1890.4 L4549.5 1956.7 L4550.8 2020.0 M4552.0 1956.7 L4567.3 1997.6 L4575.0 2020.0 M4550.8 1990.0 L4550.8 2010.4 L4541.8 2086.9 L4527.8 2102.2 L4520.2 2132.9 L4522.7 2245.1 L4524.0 2390.0 M4564.8 1990.0 L4572.4 2007.9 L4582.7 2081.8 L4589.0 2092.0 L4589.0 2219.6 L4575.0 2296.1 L4572.4 2319.1 L4559.7 2334.4 L4558.4 2390.0 M4200.0 2506.2 L4342.9 2507.4 L4353.1 2509.2 L4404.1 2523.3 L4493.4 2548.8 L4508.7 2552.6 L4524.0 2552.6 M4441.1 2388.1 L4439.8 2469.7 L4406.6 2505.4 L4404.1 2523.3 L4395.2 2538.6 L4401.5 2581.9 L4411.7 2612.6 L4401.5 2630.4 L4404.1 2648.3 M4559.7 2360.0 L4559.7 2383.0 L4546.9 2444.2 L4531.6 2479.9 L4524.0 2523.3 L4525.3 2553.9 L4529.1 2638.1 L4518.9 2653.4 L4498.5 2666.1 L4495.9 2760.0 M4525.3 2360.0 L4526.5 2388.1 L4527.8 2426.3 L4518.9 2434.0 M4490.8 2510.5 L4493.4 2548.8 L4497.2 2666.1 L4501.0 2691.6 M4376.0 2701.8 L4378.6 2742.7 L4376.0 2760.0 M4419.4 2648.3 L4424.5 2717.1 L4421.9 2760.0 M4441.1 2388.1 L4559.7 2385.5 M4419.4 2641.9 L4439.8 2635.5 M4424.5 2669.9 L4498.5 2668.7 M4424.5 2690.4 L4444.9 2690.4 L4465.3 2701.8 L4495.9 2701.8 M4460.2 2760.0 L4495.9 2758.0 M4378.6 2699.9 L4379.8 2743.3 M4379.8 2809.6 L4381.1 2858.1 M4495.9 2580.0 L4497.2 2664.2 L4495.9 2722.9 L4499.7 2768.8 L4501.0 2773.9 M4419.4 2646.3 L4424.5 2738.2 L4421.9 2743.3 M4424.5 2801.9 L4427.0 2847.9 L4424.5 2860.6 M4401.5 2580.0 L4411.7 2610.6 L4401.5 2631.0 L4404.1 2646.3 M4424.5 2669.3 L4495.9 2668.0 M4424.5 2689.7 L4444.9 2689.7 L4465.3 2701.2 L4495.9 2701.2 M4416.8 2643.8 L4439.8 2636.1 M4498.5 2664.2 L4518.9 2651.4 L4529.1 2633.6 L4527.8 2580.0 M4460.2 2766.2 L4460.2 2756.0 L4498.5 2750.9 M4437.2 2775.2 L4501.0 2771.3 L4516.3 2771.3 M4501.0 2799.4 L4467.9 2810.9 L4442.3 2837.7 L4424.5 2860.6 L4411.7 2886.1 L4404.1 2919.3 L4393.9 2937.1 L4353.1 2970.3 M4424.5 2819.8 L4411.7 2837.7 L4391.3 2858.1 M4411.7 2840.2 L4427.0 2840.2 M4393.9 2937.1 L4391.3 2962.7 L4373.5 2965.2 M3329.1 1990.6 L3344.4 2008.5 L3377.6 2039.1 L3428.6 2082.4 L3433.7 2105.4 L3433.7 2143.7 L3438.8 2176.8 L3441.3 2248.3 L3449.0 2304.4 L3466.8 2360.0 M3452.6 2330.0 L3467.9 2363.2 L3473.0 2406.5 L3478.1 2472.9 L3480.6 2485.6 L3511.2 2494.5 L3592.9 2501.4 L3659.2 2500.4 M3716.6 2499.6 L3794.4 2498.9 L3800.0 2494.5 M3715.3 2499.8 L3795.7 2499.8 L3807.1 2490.1 L4049.5 2486.3 L4113.3 2495.2 L4169.4 2505.4 L4300.0 2506.2 M2841.7 1230.0 L2846.8 1293.8 L2851.9 1383.1 L2877.4 1421.3 L2900.4 1426.4 M2857.0 1230.0 L2859.6 1286.1 L2867.2 1291.2 L2849.4 1298.9" fill="none" stroke="#98a4c5" stroke-width="6.4" stroke-linejoin="round" stroke-linecap="round"/>
<path d="M2821.9 895.3 L2814.3 920.8 L2807.9 954.0 L2806.6 1002.4 L2807.1 1058.6 L2807.9 1099.4 L2809.2 1117.2 M2932.9 895.3 L2932.9 936.1 L2939.3 964.2 L2944.4 984.6 M2922.7 1066.2 L2921.4 1076.4 L2936.7 1094.3 L2938.0 1124.9 L2939.3 1145.3 L2941.8 1150.4 M3066.8 931.0 L3049.0 956.5 L3036.2 987.1 L3020.9 1022.9 L3005.6 1035.6 L2996.7 1050.9 L2995.4 1084.1 L2998.0 1135.1 L2999.2 1145.3 M3036.2 989.7 L3056.6 1043.3 L3071.9 1089.2 L3082.1 1109.6 L3083.4 1145.3 L3079.6 1168.3 L3071.9 1186.1 L3069.4 1211.6 L3070.7 1237.1 M3200.0 1096.8 L3161.2 1098.1 L3123.0 1104.5 L3084.7 1112.1 L3056.6 1119.8 L3033.7 1137.7 L2998.0 1145.3 L2964.8 1147.9 L2944.4 1153.0 L2918.9 1163.2 L2893.4 1175.9 L2878.1 1186.1 L2865.3 1198.9 L2858.9 1221.8 L2857.7 1242.2 L2857.7 1280.0 M3018.4 1145.3 L3033.7 1150.4 L3056.6 1153.0 L3066.8 1168.3 L3079.6 1169.5 M2998.0 1150.4 L2982.7 1158.1 L2964.8 1191.2 L2959.7 1196.3 L2941.8 1196.3 M2816.8 1193.8 L2832.1 1216.7 L2844.9 1237.1 L2847.4 1280.0 M3194.9 1093.8 L3263.8 1085.4 L3281.6 1081.5 L3337.8 1035.6 L3368.4 1006.3 L3401.5 996.1 L3473.0 971.8 L3536.7 937.4 L3559.7 915.7 L3568.6 895.3 M3401.5 997.3 L3411.7 1033.1 L3414.3 1101.9 L3401.5 1109.6 L3378.6 1113.4 M3748.5 918.3 L3763.8 951.4 L3768.9 997.3 L3784.2 1043.3 L3800.0 1058.6 M3733.2 895.3 L3745.9 918.3 L3763.8 954.0 L3766.3 994.8 L3789.3 1048.4 L3855.6 1104.5 L3876.0 1113.4 L3924.5 1165.7 L3960.2 1216.7 L3970.4 1260.1 L3988.3 1280.0 M4141.3 895.3 L4164.3 966.7 L4166.8 1053.5 L4217.9 1117.2 L4228.1 1142.8 L4240.8 1216.7 L4271.4 1260.1 L4272.7 1280.0 M3967.9 1250.0 L3971.7 1260.2 L4036.7 1329.1 L4039.3 1352.0 L4105.6 1438.8 L4123.5 1446.4 L4207.7 1447.7 L4212.8 1454.1 M4274.0 1502.6 L4300.0 1503.8 M4261.2 1250.0 L4271.4 1260.2 L4271.4 1313.8 L4291.8 1400.5 L4300.0 1413.3 M4261.2 1250.0 L4271.4 1260.2 L4271.4 1313.8 L4291.8 1403.1 L4337.8 1479.6 L4348.0 1507.7 L4370.9 1525.5 L4376.0 1533.2 L4378.6 1551.0 L4373.5 1561.2 L4360.7 1589.3 L4359.4 1650.0 M4274.0 1502.6 L4332.7 1505.1 L4353.1 1535.7 L4373.5 1561.2 M4358.2 1620.0 L4358.2 1645.5 M4368.4 1706.7 L4369.6 1732.2 L4381.1 1755.2 L4406.6 1773.1 L4450.0 1774.3 M4388.8 1620.0 L4399.0 1658.3 L4424.5 1714.4 L4450.0 1774.3 L4480.6 1824.1 L4483.2 1844.5 L4518.9 1890.4 L4549.5 1956.7 L4550.8 2020.0 M4552.0 1956.7 L4567.3 1997.6 L4575.0 2020.0 M4550.8 1990.0 L4550.8 2010.4 L4541.8 2086.9 L4527.8 2102.2 L4520.2 2132.9 L4522.7 2245.1 L4524.0 2390.0 M4564.8 1990.0 L4572.4 2007.9 L4582.7 2081.8 L4589.0 2092.0 L4589.0 2219.6 L4575.0 2296.1 L4572.4 2319.1 L4559.7 2334.4 L4558.4 2390.0 M4200.0 2506.2 L4342.9 2507.4 L4353.1 2509.2 L4404.1 2523.3 L4493.4 2548.8 L4508.7 2552.6 L4524.0 2552.6 M4441.1 2388.1 L4439.8 2469.7 L4406.6 2505.4 L4404.1 2523.3 L4395.2 2538.6 L4401.5 2581.9 L4411.7 2612.6 L4401.5 2630.4 L4404.1 2648.3 M4559.7 2360.0 L4559.7 2383.0 L4546.9 2444.2 L4531.6 2479.9 L4524.0 2523.3 L4525.3 2553.9 L4529.1 2638.1 L4518.9 2653.4 L4498.5 2666.1 L4495.9 2760.0 M4525.3 2360.0 L4526.5 2388.1 L4527.8 2426.3 L4518.9 2434.0 M4490.8 2510.5 L4493.4 2548.8 L4497.2 2666.1 L4501.0 2691.6 M4376.0 2701.8 L4378.6 2742.7 L4376.0 2760.0 M4419.4 2648.3 L4424.5 2717.1 L4421.9 2760.0 M4441.1 2388.1 L4559.7 2385.5 M4419.4 2641.9 L4439.8 2635.5 M4424.5 2669.9 L4498.5 2668.7 M4424.5 2690.4 L4444.9 2690.4 L4465.3 2701.8 L4495.9 2701.8 M4460.2 2760.0 L4495.9 2758.0 M4378.6 2699.9 L4379.8 2743.3 M4379.8 2809.6 L4381.1 2858.1 M4495.9 2580.0 L4497.2 2664.2 L4495.9 2722.9 L4499.7 2768.8 L4501.0 2773.9 M4419.4 2646.3 L4424.5 2738.2 L4421.9 2743.3 M4424.5 2801.9 L4427.0 2847.9 L4424.5 2860.6 M4401.5 2580.0 L4411.7 2610.6 L4401.5 2631.0 L4404.1 2646.3 M4424.5 2669.3 L4495.9 2668.0 M4424.5 2689.7 L4444.9 2689.7 L4465.3 2701.2 L4495.9 2701.2 M4416.8 2643.8 L4439.8 2636.1 M4498.5 2664.2 L4518.9 2651.4 L4529.1 2633.6 L4527.8 2580.0 M4460.2 2766.2 L4460.2 2756.0 L4498.5 2750.9 M4437.2 2775.2 L4501.0 2771.3 L4516.3 2771.3 M4501.0 2799.4 L4467.9 2810.9 L4442.3 2837.7 L4424.5 2860.6 L4411.7 2886.1 L4404.1 2919.3 L4393.9 2937.1 L4353.1 2970.3 M4424.5 2819.8 L4411.7 2837.7 L4391.3 2858.1 M4411.7 2840.2 L4427.0 2840.2 M4393.9 2937.1 L4391.3 2962.7 L4373.5 2965.2 M3329.1 1990.6 L3344.4 2008.5 L3377.6 2039.1 L3428.6 2082.4 L3433.7 2105.4 L3433.7 2143.7 L3438.8 2176.8 L3441.3 2248.3 L3449.0 2304.4 L3466.8 2360.0 M3452.6 2330.0 L3467.9 2363.2 L3473.0 2406.5 L3478.1 2472.9 L3480.6 2485.6 L3511.2 2494.5 L3592.9 2501.4 L3659.2 2500.4 M3716.6 2499.6 L3794.4 2498.9 L3800.0 2494.5 M3715.3 2499.8 L3795.7 2499.8 L3807.1 2490.1 L4049.5 2486.3 L4113.3 2495.2 L4169.4 2505.4 L4300.0 2506.2 M2841.7 1230.0 L2846.8 1293.8 L2851.9 1383.1 L2877.4 1421.3 L2900.4 1426.4 M2857.0 1230.0 L2859.6 1286.1 L2867.2 1291.2 L2849.4 1298.9" fill="none" stroke="#cfd5e8" stroke-width="2" stroke-linejoin="round" stroke-linecap="round"/>
<text x="3709.0" y="915.7" font-size="26" fill="#1f1f1f" font-weight="700" letter-spacing="0.21" style="paint-order:stroke;stroke:rgba(255,255,255,.85);stroke-width:3.5px;stroke-linejoin:round;">Kissimmee</text>
<text x="3547.4" y="911.0" font-size="23" fill="#4a4a4a" letter-spacing="-0.02" style="paint-order:stroke;stroke:rgba(255,255,255,.85);stroke-width:3.5px;stroke-linejoin:round;">Celebration</text>
<text x="4244.9" y="1050.4" font-size="30" fill="#1f1f1f" font-weight="700" letter-spacing="0.33" style="paint-order:stroke;stroke:rgba(255,255,255,.85);stroke-width:3.5px;stroke-linejoin:round;">Melbourne</text>
<circle cx="4232.1" cy="1054.7" r="7" fill="#1a1a1a" stroke="rgba(255,255,255,.8)" stroke-width="1.5"/>
<text x="4201.5" y="1137.7" font-size="26.5" fill="#1f1f1f" letter-spacing="0.51" stroke="#1f1f1f" stroke-width="0.5" style="filter:drop-shadow(0 0 1.1px #fff) drop-shadow(0 0 1.1px #fff) drop-shadow(0 0 1px #fff)">Palm Bay</text>
<circle cx="4190.0" cy="1114.7" r="5.5" fill="#1a1a1a" stroke="rgba(255,255,255,.8)" stroke-width="1.5"/>
<text x="2732.7" y="1094.3" font-size="25" fill="#1f1f1f" letter-spacing="-0.13" stroke="#1f1f1f" stroke-width="0.5" style="filter:drop-shadow(0 0 1.1px #fff) drop-shadow(0 0 1.1px #fff) drop-shadow(0 0 1px #fff)">Palm Harbor</text>
<circle cx="2801.5" cy="1054.7" r="4.5" fill="#1a1a1a" stroke="rgba(255,255,255,.8)" stroke-width="1.5"/>
<text x="3048.6" y="1074.0" font-size="25" fill="#1f1f1f" letter-spacing="0.35" stroke="#1f1f1f" stroke-width="0.5" style="filter:drop-shadow(0 0 1.1px #fff) drop-shadow(0 0 1.1px #fff) drop-shadow(0 0 1px #fff)">Temple Terrace</text>
<circle cx="3037.9" cy="1076.3" r="4" fill="#1a1a1a" stroke="rgba(255,255,255,.8)" stroke-width="1.5"/>
<text x="3194.4" y="1111.3" font-size="31" fill="#1f1f1f" font-weight="700" style="paint-order:stroke;stroke:rgba(255,255,255,.85);stroke-width:3.5px;stroke-linejoin:round;">Lakeland</text>
<circle cx="3332.0" cy="1082.0" r="6.5" fill="#1a1a1a" stroke="rgba(255,255,255,.8)" stroke-width="1.5"/>
<text x="3319.4" y="1212.4" font-size="25" fill="#1f1f1f" letter-spacing="0.24" stroke="#1f1f1f" stroke-width="0.5" style="filter:drop-shadow(0 0 1.1px #fff) drop-shadow(0 0 1.1px #fff) drop-shadow(0 0 1px #fff)">Bartow</text>
<circle cx="3406.6" cy="1191.0" r="4.5" fill="#1a1a1a" stroke="rgba(255,255,255,.8)" stroke-width="1.5"/>
<text x="3709.0" y="1186.0" font-size="25" fill="#1f1f1f" text-anchor="end" stroke="#1f1f1f" stroke-width="0.5" style="filter:drop-shadow(0 0 1.1px #fff) drop-shadow(0 0 1.1px #fff) drop-shadow(0 0 1px #fff)">Lake Wales</text>
<text x="2775.4" y="1490.2" font-size="27" fill="#1f1f1f" font-weight="700" style="paint-order:stroke;stroke:rgba(255,255,255,.85);stroke-width:3.5px;stroke-linejoin:round;">Bradenton</text>
<text x="2805.6" y="1642.0" font-size="31" fill="#1f1f1f" font-weight="700" style="paint-order:stroke;stroke:rgba(255,255,255,.85);stroke-width:3.5px;stroke-linejoin:round;">Sarasota</text>
<text x="3749.0" y="1417.0" font-size="25" fill="#1f1f1f" text-anchor="end" stroke="#1f1f1f" stroke-width="0.5" style="filter:drop-shadow(0 0 1.1px #fff) drop-shadow(0 0 1.1px #fff) drop-shadow(0 0 1px #fff)">Avon Park</text>
<text x="3773.5" y="1520.4" font-size="27" fill="#1f1f1f" font-weight="700" text-anchor="end" style="paint-order:stroke;stroke:rgba(255,255,255,.85);stroke-width:3.5px;stroke-linejoin:round;">Sebring</text>
<text x="3914.5" y="1655.7" font-size="27" fill="#4a4a4a" font-style="italic" text-anchor="middle" letter-spacing="0.33" stroke="#4a4a4a" stroke-width="0.5" style="filter:drop-shadow(0 0 1.1px #fff) drop-shadow(0 0 1.1px #fff) drop-shadow(0 0 1px #fff)">Fish</text>
<text x="3914.8" y="1685.0" font-size="27" fill="#4a4a4a" font-style="italic" text-anchor="middle" letter-spacing="1.09" stroke="#4a4a4a" stroke-width="0.5" style="filter:drop-shadow(0 0 1.1px #fff) drop-shadow(0 0 1.1px #fff) drop-shadow(0 0 1px #fff)">Branch</text>
<text x="3914.7" y="1714.4" font-size="27" fill="#4a4a4a" font-style="italic" text-anchor="middle" letter-spacing="0.75" stroke="#4a4a4a" stroke-width="0.5" style="filter:drop-shadow(0 0 1.1px #fff) drop-shadow(0 0 1.1px #fff) drop-shadow(0 0 1px #fff)">Island</text>
<text x="4094.0" y="1706.2" font-size="23.5" fill="#3c3c3c" letter-spacing="-0.47" style="paint-order:stroke;stroke:rgba(255,255,255,.85);stroke-width:3.5px;stroke-linejoin:round;">Okeechobee</text>
<circle cx="4084.7" cy="1684.5" r="4.5" fill="#1a1a1a" stroke="rgba(255,255,255,.8)" stroke-width="1.5"/>
<text x="4114.2" y="1904.4" font-size="22" fill="#4a8fd0" font-style="italic" text-anchor="middle" letter-spacing="-0.57" style="paint-order:stroke;stroke:rgba(255,255,255,.85);stroke-width:2px;stroke-linejoin:round;">Lake</text>
<text x="4114.2" y="1928.0" font-size="22" fill="#4a8fd0" font-style="italic" text-anchor="middle" letter-spacing="-0.53" style="paint-order:stroke;stroke:rgba(255,255,255,.85);stroke-width:2px;stroke-linejoin:round;">Okeechobee</text>
<text x="4394.4" y="1833.8" font-size="26.5" fill="#1f1f1f" letter-spacing="-0.97" stroke="#1f1f1f" stroke-width="0.5" style="filter:drop-shadow(0 0 1.1px #fff) drop-shadow(0 0 1.1px #fff) drop-shadow(0 0 1px #fff)">Hobe Sound</text>
<circle cx="4547.0" cy="1823.0" r="4.5" fill="#1a1a1a" stroke="rgba(255,255,255,.8)" stroke-width="1.5"/>
<text x="3678.4" y="2043.6" font-size="24" fill="#3c3c3c" letter-spacing="-0.71" style="paint-order:stroke;stroke:rgba(255,255,255,.85);stroke-width:3.5px;stroke-linejoin:round;">LaBelle</text>
<circle cx="3670.1" cy="2046.7" r="4" fill="#1a1a1a" stroke="rgba(255,255,255,.8)" stroke-width="1.5"/>
<text x="4022.7" y="2051.2" font-size="24" fill="#3c3c3c" letter-spacing="-0.57" style="paint-order:stroke;stroke:rgba(255,255,255,.85);stroke-width:3.5px;stroke-linejoin:round;">Clewiston</text>
<circle cx="4012.5" cy="2053.8" r="4.5" fill="#1a1a1a" stroke="rgba(255,255,255,.8)" stroke-width="1.5"/>
<text x="4200.0" y="2130.3" font-size="25" fill="#1f1f1f" letter-spacing="-0.43" stroke="#1f1f1f" stroke-width="0.5" style="filter:drop-shadow(0 0 1.1px #fff) drop-shadow(0 0 1.1px #fff) drop-shadow(0 0 1px #fff)">Belle Glade</text>
<circle cx="4189.8" cy="2107.3" r="4.5" fill="#1a1a1a" stroke="rgba(255,255,255,.8)" stroke-width="1.5"/>
<text x="4378.6" y="2069.0" font-size="23.5" fill="#3c3c3c" letter-spacing="-0.58" style="paint-order:stroke;stroke:rgba(255,255,255,.85);stroke-width:3.5px;stroke-linejoin:round;">The Acreage</text>
<circle cx="4439.8" cy="2033.4" r="4" fill="#1a1a1a" stroke="rgba(255,255,255,.8)" stroke-width="1.5"/>
<text x="4350.5" y="2148.0" font-size="26" fill="#1f1f1f" letter-spacing="-0.10" stroke="#1f1f1f" stroke-width="0.5" style="filter:drop-shadow(0 0 1.1px #fff) drop-shadow(0 0 1.1px #fff) drop-shadow(0 0 1px #fff)">Wellington</text>
<circle cx="4478.6" cy="2126.0" r="4.5" fill="#1a1a1a" stroke="rgba(255,255,255,.8)" stroke-width="1.5"/>
<text x="4590.3" y="2349.7" font-size="29.5" fill="#1f1f1f" font-weight="700" letter-spacing="-0.50" style="paint-order:stroke;stroke:rgba(255,255,255,.85);stroke-width:3.5px;stroke-linejoin:round;">Boca Raton</text>
<circle cx="4577.5" cy="2353.5" r="7" fill="#1a1a1a" stroke="rgba(255,255,255,.8)" stroke-width="1.5"/>
<text x="4289.3" y="2408.5" font-size="28" fill="#1f1f1f" letter-spacing="0.01" stroke="#1f1f1f" stroke-width="0.5" style="filter:drop-shadow(0 0 1.1px #fff) drop-shadow(0 0 1.1px #fff) drop-shadow(0 0 1px #fff)">Coral Springs</text>
<circle cx="4469.0" cy="2411.8" r="5" fill="#1a1a1a" stroke="rgba(255,255,255,.8)" stroke-width="1.5"/>
<text x="4566.0" y="2439.0" font-size="28" fill="#1f1f1f" letter-spacing="-0.03" stroke="#1f1f1f" stroke-width="0.5" style="filter:drop-shadow(0 0 1.1px #fff) drop-shadow(0 0 1.1px #fff) drop-shadow(0 0 1px #fff)">Pompano Beach</text>
<circle cx="4555.0" cy="2443.0" r="5" fill="#1a1a1a" stroke="rgba(255,255,255,.8)" stroke-width="1.5"/>
<text x="4543.0" y="2601.8" font-size="28" fill="#1f1f1f" letter-spacing="0.60" stroke="#1f1f1f" stroke-width="0.5" style="filter:drop-shadow(0 0 1.1px #fff) drop-shadow(0 0 1.1px #fff) drop-shadow(0 0 1px #fff)">Hollywood</text>
<circle cx="4531.6" cy="2605.7" r="5" fill="#1a1a1a" stroke="rgba(255,255,255,.8)" stroke-width="1.5"/>
<text x="4524.0" y="2821.0" font-size="39" fill="#1f1f1f" font-weight="700" letter-spacing="-0.88" style="paint-order:stroke;stroke:rgba(255,255,255,.85);stroke-width:3.5px;stroke-linejoin:round;">Miami</text>
<circle cx="4506" cy="2784.6" r="8.5" fill="#fff" stroke="#1a1a1a" stroke-width="5"/>
<text x="4500.9" y="2937.0" font-size="25.5" fill="#2fa02f" text-anchor="middle" letter-spacing="0.70" style="paint-order:stroke;stroke:rgba(255,255,255,.85);stroke-width:2.5px;stroke-linejoin:round;">Biscayne</text>
<text x="4500.7" y="2965.0" font-size="25.5" fill="#2fa02f" text-anchor="middle" letter-spacing="0.41" style="paint-order:stroke;stroke:rgba(255,255,255,.85);stroke-width:2.5px;stroke-linejoin:round;">National Park</text>
<text x="3269.0" y="2245.7" font-size="25" fill="#1f1f1f" letter-spacing="-0.45" stroke="#1f1f1f" stroke-width="0.5" style="filter:drop-shadow(0 0 1.1px #fff) drop-shadow(0 0 1.1px #fff) drop-shadow(0 0 1px #fff)">Iona</text>
<circle cx="3330.4" cy="2235.5" r="4.5" fill="#1a1a1a" stroke="rgba(255,255,255,.8)" stroke-width="1.5"/>
<text x="3348.2" y="2277.6" font-size="23.5" fill="#4a4a4a" letter-spacing="-0.54" style="paint-order:stroke;stroke:rgba(255,255,255,.85);stroke-width:3.5px;stroke-linejoin:round;">Fort Myers Beach</text>
<circle cx="3339.3" cy="2280.0" r="4.5" fill="#1a1a1a" stroke="rgba(255,255,255,.8)" stroke-width="1.5"/>
<text x="3629.8" y="2341.5" font-size="25" fill="#1f1f1f" letter-spacing="0.12" stroke="#1f1f1f" stroke-width="0.5" style="filter:drop-shadow(0 0 1.1px #fff) drop-shadow(0 0 1.1px #fff) drop-shadow(0 0 1px #fff)">Immokalee</text>
<circle cx="3690.8" cy="2303.0" r="4.5" fill="#1a1a1a" stroke="rgba(255,255,255,.8)" stroke-width="1.5"/>
<text x="3445.4" y="2392.5" font-size="26.5" fill="#1f1f1f" font-weight="700" letter-spacing="-0.22" style="paint-order:stroke;stroke:rgba(255,255,255,.85);stroke-width:3.5px;stroke-linejoin:round;">Bonita Springs</text>
<circle cx="3434.2" cy="2368.3" r="5.5" fill="#1a1a1a" stroke="rgba(255,255,255,.8)" stroke-width="1.5"/>
<text x="3432.0" y="2457.6" font-size="25" fill="#1f1f1f" letter-spacing="-0.38" stroke="#1f1f1f" stroke-width="0.5" style="filter:drop-shadow(0 0 1.1px #fff) drop-shadow(0 0 1.1px #fff) drop-shadow(0 0 1px #fff)">Golden Gate</text>
<circle cx="3499.7" cy="2477.4" r="4" fill="#1a1a1a" stroke="rgba(255,255,255,.8)" stroke-width="1.5"/>
<text x="3340.8" y="2534.6" font-size="28" fill="#1f1f1f" font-weight="700" letter-spacing="-0.86" style="paint-order:stroke;stroke:rgba(255,255,255,.85);stroke-width:3.5px;stroke-linejoin:round;">Naples</text>
<circle cx="3438.5" cy="2511.6" r="6" fill="#1a1a1a" stroke="rgba(255,255,255,.8)" stroke-width="1.5"/>
<text x="3503.6" y="2564.0" font-size="28" fill="#4a4a4a" font-style="italic" letter-spacing="0.90" style="paint-order:stroke;stroke:rgba(255,255,255,.85);stroke-width:3.5px;stroke-linejoin:round;">Turtle</text>
<text x="3502.3" y="2592.8" font-size="28" fill="#4a4a4a" font-style="italic" letter-spacing="0.12" style="paint-order:stroke;stroke:rgba(255,255,255,.85);stroke-width:3.5px;stroke-linejoin:round;">Island</text>
<text x="3547.4" y="2724.0" font-size="23" fill="#4a4a4a" letter-spacing="-0.25" style="paint-order:stroke;stroke:rgba(255,255,255,.85);stroke-width:3.5px;stroke-linejoin:round;">Everglades City</text>
<circle cx="3713.3" cy="2720.3" r="4.5" fill="#1a1a1a" stroke="rgba(255,255,255,.8)" stroke-width="1.5"/>
<text x="3930.9" y="2385.5" font-size="21.5" fill="#8a2f62" letter-spacing="-0.58" stroke="#8a2f62" stroke-width="0.5" style="filter:drop-shadow(0 0 1.1px #fff) drop-shadow(0 0 1.1px #fff) drop-shadow(0 0 1px #fff)">BIG CYPRESS</text>
<text x="3926.5" y="2412.8" font-size="22" fill="#8a2f62" letter-spacing="-0.40" stroke="#8a2f62" stroke-width="0.5" style="filter:drop-shadow(0 0 1.1px #fff) drop-shadow(0 0 1.1px #fff) drop-shadow(0 0 1px #fff)">RESERVATION</text>
<text x="4013.3" y="2519.4" font-size="21.5" fill="#8a2f62" letter-spacing="-0.28" stroke="#8a2f62" stroke-width="0.5" style="filter:drop-shadow(0 0 1.1px #fff) drop-shadow(0 0 1.1px #fff) drop-shadow(0 0 1px #fff)">MICCOSUKEE</text>
<text x="4009.2" y="2546.2" font-size="22" fill="#8a2f62" letter-spacing="-0.40" stroke="#8a2f62" stroke-width="0.5" style="filter:drop-shadow(0 0 1.1px #fff) drop-shadow(0 0 1.1px #fff) drop-shadow(0 0 1px #fff)">RESERVATION</text>


<g><rect x="4331.9" y="1651.3" width="56.1" height="53.4" rx="8" fill="#fff" stroke="#3a3a3a" stroke-width="2.8"/><rect x="4336.0" y="1655.4" width="47.9" height="45.2" rx="1.5" fill="#fff" stroke="#3a3a3a" stroke-width="1.7"/><path d="M4358.7 1666.4 L4351.0 1668.3 L4344.6 1663.2 L4338.9 1663.2 L4338.2 1658.1 L4351.0 1658.1 L4351.7 1659.7 L4370.2 1659.7 L4370.8 1658.1 L4374.0 1658.1 L4375.9 1665.8 L4377.8 1671.5 L4376.6 1677.9 L4379.1 1684.3 L4381.0 1692.6 L4378.4 1696.4 L4373.3 1697.0" fill="none" stroke="#3a3a3a" stroke-width="2.1" stroke-linejoin="round" stroke-linecap="round"/><text x="4357.9" y="1693.1" font-size="27.5" font-weight="700" fill="#2a2a2a" text-anchor="middle" letter-spacing="0" style="paint-order:stroke;stroke:#fff;stroke-width:2.5px">9</text></g>
<g><rect x="3659.2" y="2471.1" width="56.1" height="53.6" rx="8" fill="#fff" stroke="#3a3a3a" stroke-width="2.8"/><rect x="3663.3" y="2475.2" width="47.9" height="45.4" rx="1.5" fill="#fff" stroke="#3a3a3a" stroke-width="1.7"/><path d="M3686.0 2486.3 L3678.3 2488.2 L3671.9 2483.1 L3666.2 2483.1 L3665.5 2477.9 L3678.3 2477.9 L3679.0 2479.5 L3697.5 2479.5 L3698.1 2477.9 L3701.3 2477.9 L3703.2 2485.6 L3705.1 2491.4 L3703.9 2497.8 L3706.4 2504.2 L3708.3 2512.6 L3705.7 2516.4 L3700.6 2517.0" fill="none" stroke="#3a3a3a" stroke-width="2.1" stroke-linejoin="round" stroke-linecap="round"/><text x="3685.2" y="2513.1" font-size="27.5" font-weight="700" fill="#2a2a2a" text-anchor="middle" letter-spacing="0" style="paint-order:stroke;stroke:#fff;stroke-width:2.5px">84</text></g>
<g><rect x="4350.5" y="2647.0" width="72.7" height="53.0" rx="8" fill="#fff" stroke="#3a3a3a" stroke-width="2.8"/><rect x="4354.6" y="2651.1" width="64.5" height="44.8" rx="1.5" fill="#fff" stroke="#3a3a3a" stroke-width="1.7"/><path d="M4385.2 2662.0 L4375.4 2663.9 L4367.2 2658.8 L4359.8 2658.8 L4359.0 2653.8 L4375.4 2653.8 L4376.2 2655.3 L4400.0 2655.3 L4400.8 2653.8 L4404.8 2653.8 L4407.3 2661.4 L4409.7 2667.1 L4408.2 2673.4 L4411.4 2679.7 L4413.9 2688.0 L4410.6 2691.8 L4404.0 2692.4" fill="none" stroke="#3a3a3a" stroke-width="2.1" stroke-linejoin="round" stroke-linecap="round"/><text x="4383.6" y="2688.5" font-size="26.5" font-weight="700" fill="#2a2a2a" text-anchor="middle" letter-spacing="-1.2" style="paint-order:stroke;stroke:#fff;stroke-width:2.5px">821</text></g>
<g><rect x="4210" y="1451" width="64" height="63" rx="9" fill="#00a383" stroke="#fff" stroke-width="0"/><rect x="4213.5" y="1454.5" width="57" height="56" rx="6.5" fill="none" stroke="#fff" stroke-width="2.2"/><path transform="translate(4221,1460) scale(0.95,1.2)" d="M0 2 L18 3 L24 6 L28 3 L35 4 L38 10 L43 22 L44 30 L42 34 L39 33 L35 24 L31 15 L26 11 L20 12 L15 8 L6 6 Z" fill="#fff"/></g>
<g fill="rgba(60,70,40,.33)" filter="url(#ps)"><ellipse cx="2888.8" cy="911.0" rx="34" ry="34"/><ellipse cx="3091.0" cy="920.0" rx="34" ry="34"/><ellipse cx="2923.0" cy="1033.0" rx="34" ry="34"/><ellipse cx="2807.9" cy="1169.5" rx="34" ry="34"/><ellipse cx="3141.6" cy="1151.0" rx="34" ry="34"/><ellipse cx="2901.0" cy="1270.5" rx="34" ry="34"/><ellipse cx="3444.9" cy="1018.2" rx="34" ry="34"/><ellipse cx="3625.6" cy="1019.4" rx="34" ry="34"/><ellipse cx="4340.1" cy="1291.6" rx="34" ry="34"/><ellipse cx="4390.7" cy="1450.0" rx="34" ry="34"/><ellipse cx="4398.7" cy="1608.9" rx="34" ry="34"/><ellipse cx="4515.5" cy="1732.4" rx="34" ry="34"/><ellipse cx="4548.1" cy="1924.0" rx="34" ry="34"/><ellipse cx="4562.9" cy="2061.5" rx="34" ry="34"/><ellipse cx="4572.5" cy="2156.9" rx="34" ry="34"/><ellipse cx="4554.8" cy="2249.4" rx="34" ry="34"/><ellipse cx="4494.6" cy="2478.3" rx="34" ry="34"/><ellipse cx="4473.0" cy="2640.0" rx="34" ry="34"/><ellipse cx="4401.7" cy="2787.3" rx="34" ry="34"/><ellipse cx="4367.5" cy="2908.0" rx="34" ry="34"/><ellipse cx="3344.9" cy="2061.5" rx="34" ry="34"/><ellipse cx="3364.3" cy="2160.2" rx="34" ry="34"/><ellipse cx="3556.9" cy="2137.2" rx="34" ry="34"/></g>
<g><path d="M2864.8 922.5 Q2879.8 931.0 2887.3 943.0 Q2888.8 945.0 2890.3 943.0 Q2897.8 931.0 2912.8 922.5 Z" fill="#ff5b3f"/><circle cx="2888.8" cy="895.0" r="36.5" fill="#ff5b3f"/><text x="2888.8" y="909.0" font-size="40" fill="#fff" text-anchor="middle">10</text></g>
<g><path d="M3067.0 931.5 Q3082.0 940.0 3089.5 952.0 Q3091.0 954.0 3092.5 952.0 Q3100.0 940.0 3115.0 931.5 Z" fill="#ff5b3f"/><circle cx="3091.0" cy="904.0" r="36.5" fill="#ff5b3f"/><text x="3091.0" y="918.0" font-size="40" fill="#fff" text-anchor="middle">3</text></g>
<g><path d="M2899.0 1044.5 Q2914.0 1053.0 2921.5 1065.0 Q2923.0 1067.0 2924.5 1065.0 Q2932.0 1053.0 2947.0 1044.5 Z" fill="#ff5b3f"/><circle cx="2923.0" cy="1017.0" r="36.5" fill="#ff5b3f"/><text x="2923.0" y="1031.0" font-size="40" fill="#fff" text-anchor="middle">11</text></g>
<g><path d="M2783.9 1181.0 Q2798.9 1189.5 2806.4 1201.5 Q2807.9 1203.5 2809.4 1201.5 Q2816.9 1189.5 2831.9 1181.0 Z" fill="#ff5b3f"/><circle cx="2807.9" cy="1153.5" r="36.5" fill="#ff5b3f"/><text x="2807.9" y="1167.5" font-size="40" fill="#fff" text-anchor="middle">8</text></g>
<g><path d="M3117.6 1162.5 Q3132.6 1171.0 3140.1 1183.0 Q3141.6 1185.0 3143.1 1183.0 Q3150.6 1171.0 3165.6 1162.5 Z" fill="#ff5b3f"/><circle cx="3141.6" cy="1135.0" r="36.5" fill="#ff5b3f"/><text x="3141.6" y="1149.0" font-size="40" fill="#fff" text-anchor="middle">11</text></g>
<g><path d="M2877.0 1282.0 Q2892.0 1290.5 2899.5 1302.5 Q2901.0 1304.5 2902.5 1302.5 Q2910.0 1290.5 2925.0 1282.0 Z" fill="#ff5b3f"/><circle cx="2901.0" cy="1254.5" r="36.5" fill="#ff5b3f"/><text x="2901.0" y="1268.5" font-size="40" fill="#fff" text-anchor="middle">4</text></g>
<g><path d="M3420.9 1029.7 Q3435.9 1038.2 3443.4 1050.2 Q3444.9 1052.2 3446.4 1050.2 Q3453.9 1038.2 3468.9 1029.7 Z" fill="#ff5b3f"/><circle cx="3444.9" cy="1002.2" r="36.5" fill="#ff5b3f"/><text x="3444.9" y="1016.2" font-size="40" fill="#fff" text-anchor="middle">14</text></g>
<g><path d="M3601.6 1030.9 Q3616.6 1039.4 3624.1 1051.4 Q3625.6 1053.4 3627.1 1051.4 Q3634.6 1039.4 3649.6 1030.9 Z" fill="#ff5b3f"/><circle cx="3625.6" cy="1003.4" r="36.5" fill="#ff5b3f"/><text x="3625.6" y="1017.4" font-size="40" fill="#fff" text-anchor="middle">7</text></g>
<g><path d="M4316.1 1303.1 Q4331.1 1311.6 4338.6 1323.6 Q4340.1 1325.6 4341.6 1323.6 Q4349.1 1311.6 4364.1 1303.1 Z" fill="#ff5b3f"/><circle cx="4340.1" cy="1275.6" r="36.5" fill="#ff5b3f"/><text x="4340.1" y="1289.6" font-size="40" fill="#fff" text-anchor="middle">2</text></g>
<g><path d="M4366.7 1461.5 Q4381.7 1470.0 4389.2 1482.0 Q4390.7 1484.0 4392.2 1482.0 Q4399.7 1470.0 4414.7 1461.5 Z" fill="#ff5b3f"/><circle cx="4390.7" cy="1434.0" r="36.5" fill="#ff5b3f"/><text x="4390.7" y="1448.0" font-size="40" fill="#fff" text-anchor="middle">2</text></g>
<g><path d="M4374.7 1620.4 Q4389.7 1628.9 4397.2 1640.9 Q4398.7 1642.9 4400.2 1640.9 Q4407.7 1628.9 4422.7 1620.4 Z" fill="#ff5b3f"/><circle cx="4398.7" cy="1592.9" r="36.5" fill="#ff5b3f"/><text x="4398.7" y="1606.9" font-size="40" fill="#fff" text-anchor="middle">12</text></g>
<g><path d="M4491.5 1743.9 Q4506.5 1752.4 4514.0 1764.4 Q4515.5 1766.4 4517.0 1764.4 Q4524.5 1752.4 4539.5 1743.9 Z" fill="#ff5b3f"/><circle cx="4515.5" cy="1716.4" r="36.5" fill="#ff5b3f"/><text x="4515.5" y="1730.4" font-size="40" fill="#fff" text-anchor="middle">3</text></g>
<g><path d="M4524.1 1935.5 Q4539.1 1944.0 4546.6 1956.0 Q4548.1 1958.0 4549.6 1956.0 Q4557.1 1944.0 4572.1 1935.5 Z" fill="#ff5b3f"/><circle cx="4548.1" cy="1908.0" r="36.5" fill="#ff5b3f"/><text x="4548.1" y="1922.0" font-size="40" fill="#fff" text-anchor="middle">2</text></g>
<g><path d="M4538.9 2073.0 Q4553.9 2081.5 4561.4 2093.5 Q4562.9 2095.5 4564.4 2093.5 Q4571.9 2081.5 4586.9 2073.0 Z" fill="#ff5b3f"/><circle cx="4562.9" cy="2045.5" r="36.5" fill="#ff5b3f"/><text x="4562.9" y="2059.5" font-size="40" fill="#fff" text-anchor="middle">19</text></g>
<g><path d="M4548.5 2168.4 Q4563.5 2176.9 4571.0 2188.9 Q4572.5 2190.9 4574.0 2188.9 Q4581.5 2176.9 4596.5 2168.4 Z" fill="#ff5b3f"/><circle cx="4572.5" cy="2140.9" r="36.5" fill="#ff5b3f"/><text x="4572.5" y="2154.9" font-size="40" fill="#fff" text-anchor="middle">9</text></g>
<g><path d="M4530.8 2260.9 Q4545.8 2269.4 4553.3 2281.4 Q4554.8 2283.4 4556.3 2281.4 Q4563.8 2269.4 4578.8 2260.9 Z" fill="#ff5b3f"/><circle cx="4554.8" cy="2233.4" r="36.5" fill="#ff5b3f"/><text x="4554.8" y="2247.4" font-size="40" fill="#fff" text-anchor="middle">4</text></g>
<g><path d="M4470.6 2489.8 Q4485.6 2498.3 4493.1 2510.3 Q4494.6 2512.3 4496.1 2510.3 Q4503.6 2498.3 4518.6 2489.8 Z" fill="#ff5b3f"/><circle cx="4494.6" cy="2462.3" r="36.5" fill="#ff5b3f"/><text x="4494.6" y="2476.3" font-size="40" fill="#fff" text-anchor="middle">38</text></g>
<g><path d="M4449.0 2651.5 Q4464.0 2660.0 4471.5 2672.0 Q4473.0 2674.0 4474.5 2672.0 Q4482.0 2660.0 4497.0 2651.5 Z" fill="#ff5b3f"/><circle cx="4473.0" cy="2624.0" r="36.5" fill="#ff5b3f"/><text x="4473.0" y="2638.0" font-size="40" fill="#fff" text-anchor="middle">44</text></g>
<g><path d="M4377.7 2798.8 Q4392.7 2807.3 4400.2 2819.3 Q4401.7 2821.3 4403.2 2819.3 Q4410.7 2807.3 4425.7 2798.8 Z" fill="#ff5b3f"/><circle cx="4401.7" cy="2771.3" r="36.5" fill="#ff5b3f"/><text x="4401.7" y="2785.3" font-size="40" fill="#fff" text-anchor="middle">17</text></g>
<g><path d="M4343.5 2919.5 Q4358.5 2928.0 4366.0 2940.0 Q4367.5 2942.0 4369.0 2940.0 Q4376.5 2928.0 4391.5 2919.5 Z" fill="#ff5b3f"/><circle cx="4367.5" cy="2892.0" r="36.5" fill="#ff5b3f"/><text x="4367.5" y="2906.0" font-size="40" fill="#fff" text-anchor="middle">15</text></g>
<g><path d="M3320.9 2073.0 Q3335.9 2081.5 3343.4 2093.5 Q3344.9 2095.5 3346.4 2093.5 Q3353.9 2081.5 3368.9 2073.0 Z" fill="#ff5b3f"/><circle cx="3344.9" cy="2045.5" r="36.5" fill="#ff5b3f"/><text x="3344.9" y="2059.5" font-size="40" fill="#fff" text-anchor="middle">2</text></g>
<g><path d="M3340.3 2171.7 Q3355.3 2180.2 3362.8 2192.2 Q3364.3 2194.2 3365.8 2192.2 Q3373.3 2180.2 3388.3 2171.7 Z" fill="#ff5b3f"/><circle cx="3364.3" cy="2144.2" r="36.5" fill="#ff5b3f"/><text x="3364.3" y="2158.2" font-size="40" fill="#fff" text-anchor="middle">4</text></g>
<g><path d="M3532.9 2148.7 Q3547.9 2157.2 3555.4 2169.2 Q3556.9 2171.2 3558.4 2169.2 Q3565.9 2157.2 3580.9 2148.7 Z" fill="#ff5b3f"/><circle cx="3556.9" cy="2121.2" r="36.5" fill="#ff5b3f"/><text x="3556.9" y="2135.2" font-size="40" fill="#fff" text-anchor="middle">3</text></g>
<g><path d="M3283.0 1154.5 L3307.0 1177.0 L3331.0 1154.5" fill="#fff" stroke="#cfd3dc" stroke-width="2.5" stroke-linejoin="round"/><rect x="3217.9" y="1088.0" width="178.5" height="67.5" rx="33.8" fill="#fff" stroke="#cfd3dc" stroke-width="2.5"/><path d="M3286.0 1152.5 L3307.0 1174.0 L3328.0 1152.5 Z" fill="#fff"/><circle cx="3251.0" cy="1121.8" r="10.8" fill="#22c55e"/><text x="3274.5" y="1132.8" font-size="32" font-weight="700" fill="#0a0a0a" letter-spacing="1.05">$157K</text></g>
<g><path d="M3558.7 1199.2 L3582.7 1221.8 L3606.7 1199.2" fill="#fff" stroke="#cfd3dc" stroke-width="2.5" stroke-linejoin="round"/><rect x="3479.3" y="1132.5" width="207.9" height="67.7" rx="33.9" fill="#fff" stroke="#cfd3dc" stroke-width="2.5"/><path d="M3561.7 1197.2 L3582.7 1218.8 L3603.7 1197.2 Z" fill="#fff"/><circle cx="3511.7" cy="1166.3" r="10.8" fill="#22c55e"/><text x="3536.2" y="1178.0" font-size="32" font-weight="700" fill="#0a0a0a" letter-spacing="1.10">$165.7K</text></g>
<g><path d="M2959.0 1675.5 L2983.0 1698.0 L3007.0 1675.5" fill="#fff" stroke="#cfd3dc" stroke-width="2.5" stroke-linejoin="round"/><rect x="2866.8" y="1607.7" width="233.2" height="68.8" rx="34.4" fill="#fff" stroke="#cfd3dc" stroke-width="2.5"/><path d="M2962.0 1673.5 L2983.0 1695.0 L3004.0 1673.5 Z" fill="#fff"/><circle cx="2900.0" cy="1642.1" r="10.8" fill="#22c55e"/></g>
<g fill="#2f4750"><path transform="translate(1084.8,2897.4) scale(1.04,1.08)" d="M27.500 12.500 C31 7.500 35.500 7.800 36.200 7.900 C34.500 10.500 33.200 12.500 33.500 16.500 C33.900 21.500 37.800 23.500 38.800 24 C38.300 26 36.500 30 34.500 33 C32.500 36 30.500 38.700 27.800 38.700 C25.200 38.700 24.500 37 21.300 37 C18.200 37 17.200 38.700 14.800 38.800 C12.200 38.900 10.200 36 8.200 33 C4 26.800 1.200 16.500 5.300 10.300 C7.400 7 10.800 5.100 14.500 5 C17.200 5 19.600 6.900 21.200 6.900 C22.800 6.900 25.500 4.700 28.900 5.100 C30.200 5.200 33.800 5.600 36.200 7.900 Z M21 4.500 C20.800 1.500 23.500 -3 28.300 -3.800 C28.800 -0.500 25.500 4.300 21 4.500 Z" transform-origin="0 0"/></g>
<text x="1133" y="2938.4" font-size="60" fill="#2f4750" stroke="#2f4750" stroke-width="1" letter-spacing="0.6">Maps</text>
<text x="1300" y="2938.2" font-size="25" fill="#3d4a50" text-decoration="underline" style="paint-order:stroke;stroke:rgba(255,255,255,.5);stroke-width:2px">Legal</text>
</g></svg>
<svg style="left:3286px;top:1976px" width="60" height="30" viewBox="0 0 60 30"><path d="M6 2 L30 25 L54 2 Z" fill="#fff" stroke="#c9cdd6" stroke-width="3" stroke-linejoin="round"/><rect x="9" y="0" width="42" height="5" fill="#fff"/></svg>
<div class="b" style="left:2899.0px;top:1235.0px;width:834.0px;height:746.0px;background:#fff;border:3px solid #c9cdd6;border-radius:12px;box-shadow:0 4px 10px rgba(0,0,0,.08);"></div>
<svg style="left:3296px;top:1976px" width="42" height="8" viewBox="0 0 42 8"><rect x="0" y="0" width="42" height="5.5" fill="#fff"/></svg>
<svg style="left:3680px;top:1258px" width="34" height="34" viewBox="0 0 34 34"><path d="M4.5 4.5 L29 29 M29 4.5 L4.5 29" stroke="#94a3b8" stroke-width="3.6" stroke-linecap="round"/></svg>
<div class="b" style="left:2945.0px;top:1302.5px;width:22.0px;height:22.0px;background:#22c55e;border-radius:50%;"></div>
<span class="t" style="left:2984.7px;top:1293.4px;font-size:35px;color:#22c55e;font-weight:700;letter-spacing:-0.80px;">Upcoming</span>
<span class="t" style="left:3169.7px;top:1293.4px;font-size:35px;color:#334155;font-weight:700;letter-spacing:0.67px;">- September 26, 2023</span>
<span class="t" style="left:2946.5px;top:1359.7px;font-size:40.5px;color:#0f172a;font-weight:700;letter-spacing:-1.27px;">12416 Espanol Dr, Punta</span>
<span class="t" style="left:2946.5px;top:1414.2px;font-size:40.5px;color:#0f172a;font-weight:700;letter-spacing:-0.39px;">Gorda, FL 33955</span>
<svg style="left:3516px;top:1372px" width="50" height="47" viewBox="0 0 50 47"><path d="M25 12 C22 5.5 15.5 3.5 10.5 6 C4.5 9 3 16.5 6.5 23.5 C10 30.5 18 37.5 25 42.5 C32 37.500 40 30.5 43.5 23.5 C47 16.5 45.5 9 39.5 6 C34.5 3.5 28 5.5 25 12 Z" fill="none" stroke="#9ca3af" stroke-width="3.2" stroke-linejoin="round"/></svg>
<svg style="left:3612px;top:1372px" width="56" height="52" viewBox="0 0 56 52"><g fill="none" stroke="#9ca3af" stroke-width="3.2" stroke-linecap="round" stroke-linejoin="round"><path d="M22 28.5 H9.5 C6 28.500 4.500 26 5 22.5 C5.8 16 7.5 10 10 6.500 C11.500 4.300 13.500 4 16 4 H23 C28 4 33 6.5 39.500 8 C41.500 14 41.500 20 39 27 C35 28 32 32 29 35 C25 37.500 24 40 23.500 44.500 C23.200 48.5 17.500 48.500 16.500 44.500 C15.800 41 18 33 18.500 28.500"/><path d="M39.5 8 C40 5.500 47 5.200 48.500 8.500 C51.500 15 51.500 22 48.500 28 C47 31 40.500 30.500 39 27"/><path d="M43.500 8.500 C45.800 15 45.800 21 43.500 27.500"/></g></svg>
<div class="b" style="left:2945.5px;top:1488.5px;width:179.0px;height:75.0px;background:#f8fafc;border:2.5px solid #e5e9f0;border-radius:13px;"></div>
<div class="b" style="left:3158.0px;top:1488.5px;width:177.5px;height:75.0px;background:#f8fafc;border:2.5px solid #e5e9f0;border-radius:13px;"></div>
<div class="b" style="left:3369.0px;top:1488.5px;width:270.0px;height:75.0px;background:#f8fafc;border:2.5px solid #e5e9f0;border-radius:13px;"></div>
<span class="t" style="left:3034.2px;top:1505.8px;font-size:34px;color:#475569;letter-spacing:0.77px;-webkit-text-stroke:0.6px #475569;">3 bd</span>
<span class="t" style="left:3247.4px;top:1505.8px;font-size:34px;color:#475569;letter-spacing:-0.06px;-webkit-text-stroke:0.6px #475569;">2 ba</span>
<span class="t" style="left:3457.6px;top:1505.8px;font-size:34px;color:#475569;letter-spacing:1.02px;-webkit-text-stroke:0.6px #475569;">1,549 sqft</span>
<svg style="left:2970px;top:1509px" width="48" height="34" viewBox="0 0 48 34"><g fill="none" stroke="#444" stroke-width="1.9" stroke-linejoin="round" stroke-linecap="round"><path d="M6 17 V7.500 C6 5 8 3.300 11 3.300 H37 C40 3.300 42 5 42 7.500 V17"/><path d="M9.500 17 C9.500 12 12 10.500 16.500 10.500 C21 10.500 23 11.500 24 13 C25 11.500 27 10.500 31.500 10.500 C36 10.500 38.500 12 38.500 17"/><path d="M3 25.500 V20.500 C3 18 4.500 17 7 17 H41 C43.500 17 45 18 45 20.500 V25.500 Z"/><path d="M3 22.500 H45"/><path d="M3.500 25.500 V30.500 H6.500 V28.300 H41.500 V30.500 H44.500 V25.500"/></g></svg>
<svg style="left:3185px;top:1505px" width="46" height="44" viewBox="0 0 46 44"><g fill="none" stroke="#444" stroke-width="1.9" stroke-linejoin="round" stroke-linecap="round"><path d="M2.500 24.500 H42.500"/><path d="M6 24.500 V7.500 C6 4.500 8 3 10.500 3 C13 3 14.500 4.500 14.500 6.500"/><path d="M12.500 13.500 L13.500 6.500 L21.500 10 Z"/><path d="M5 24.500 C5 32 7.500 36.500 13.500 36.500 H31 C37 36.500 39.500 32 39.500 24.500"/><path d="M10.500 36 L8.500 40.500 M34 36 L36 40.500"/></g></svg>
<svg style="left:3395px;top:1509px" width="46" height="34" viewBox="0 0 46 34"><g fill="none" stroke="#444" stroke-width="2.1" stroke-linejoin="miter" stroke-linecap="butt"><path d="M22 3.500 H3.500 V30.500 H22 M30 30.500 H42.500 V3.500 H22 V9"/><path d="M22 14 V22 M22 26.500 V30.500 M22 18 H42.500 M3.500 18 H8 M13 18 H17"/></g></svg>
<span class="t" style="left:2946.5px;top:1611.8px;font-size:33.5px;color:#64748b;letter-spacing:1.36px;-webkit-text-stroke:0.6px #64748b;">Judgement Amount</span>
<span class="t" style="left:2946.5px;top:1657.0px;font-size:37px;color:#000;letter-spacing:1.27px;">$259,313.02</span>
<span class="t" style="left:3318.0px;top:1611.8px;font-size:33.5px;color:#64748b;letter-spacing:0.89px;-webkit-text-stroke:0.6px #64748b;">Estimated Price</span>
<span class="t" style="left:3318.0px;top:1657.0px;font-size:37px;color:#000;letter-spacing:0.82px;">$221,387.00</span>
<span class="t" style="left:2946.5px;top:1731.3px;font-size:33.5px;color:#64748b;letter-spacing:0.87px;-webkit-text-stroke:0.6px #64748b;">Debt to Value</span>
<span class="t" style="left:2946.5px;top:1777.0px;font-size:37px;color:#ef4444;letter-spacing:-0.13px;">117%</span>
<span class="t" style="left:3318.0px;top:1731.3px;font-size:33.5px;color:#64748b;letter-spacing:0.76px;-webkit-text-stroke:0.6px #64748b;">Year Built</span>
<span class="t" style="left:3318.0px;top:1777.0px;font-size:37px;color:#000;letter-spacing:-0.27px;">1977</span>
<span class="t" style="left:3209.2px;top:1875.0px;font-size:38px;color:#6366f1;letter-spacing:0.56px;">View Details</span>
<div class="b" id="cal" style="left:127px;top:1399px;width:2242.5px;height:1030.5px;background:#e5e7eb;border-radius:44px;box-shadow:0 22px 50px -8px rgba(35,30,50,.40),0 0 30px rgba(35,30,50,.12);overflow:hidden;border-top:2px solid #dfe1e6">
<div class="b" style="left:0.0px;top:-2.0px;width:2242.5px;height:85.5px;background:#f3f4f6;"></div>
<span class="t" style="left:28.0px;top:27.3px;font-size:24px;color:#111827;font-weight:700;letter-spacing:-0.85px;">September 2023</span>
<div class="b" style="left:1759.0px;top:15.5px;width:268.5px;height:51.0px;background:#fff;border:2px solid #d1d5db;border-radius:9px;box-shadow:0 2px 3px rgba(0,0,0,.05);"></div>
<span class="t" style="left:1826.0px;top:30.5px;font-size:19.5px;color:#111827;font-weight:700;letter-spacing:-0.03px;">Current Month</span>
<svg style="left:1778px;top:33px" width="12" height="16" viewBox="0 0 12 16"><path d="M9 2 L3 8 L9 14" fill="none" stroke="#9ca3af" stroke-width="2" stroke-linecap="round" stroke-linejoin="round"/></svg>
<svg style="left:1996.5px;top:33px" width="12" height="16" viewBox="0 0 12 16"><path d="M3 2 L9 8 L3 14" fill="none" stroke="#9ca3af" stroke-width="2" stroke-linecap="round" stroke-linejoin="round"/></svg>
<div class="b" style="left:2049.5px;top:15.5px;width:170.5px;height:51.0px;background:#fff;border:2px solid #d1d5db;border-radius:9px;box-shadow:0 2px 3px rgba(0,0,0,.05);"></div>
<span class="t" style="left:2067.5px;top:30.5px;font-size:19.5px;color:#111827;font-weight:700;letter-spacing:-0.19px;">Month view</span>
<svg style="left:2186px;top:35px" width="16" height="12" viewBox="0 0 16 12"><path d="M2 3 L8 9 L14 3" fill="none" stroke="#9ca3af" stroke-width="2" stroke-linecap="round" stroke-linejoin="round"/></svg>
<div class="b" style="left:0.0px;top:83.5px;width:2242.5px;height:56.0px;background:#fff;border-top:2px solid #d1d5db;border-bottom:2px solid #d1d5db;"></div>
<span class="t" style="left:143.7px;top:102.4px;font-size:17.5px;color:#374151;font-weight:700;">Sun</span>
<span class="t" style="left:462.6px;top:102.4px;font-size:17.5px;color:#374151;font-weight:700;">Mon</span>
<span class="t" style="left:786.0px;top:102.4px;font-size:17.5px;color:#374151;font-weight:700;">Tue</span>
<span class="t" style="left:1102.9px;top:102.4px;font-size:17.5px;color:#374151;font-weight:700;">Wed</span>
<span class="t" style="left:1425.6px;top:102.4px;font-size:17.5px;color:#374151;font-weight:700;">Thu</span>
<span class="t" style="left:1750.8px;top:102.4px;font-size:17.5px;color:#374151;font-weight:700;">Fri</span>
<span class="t" style="left:2068.7px;top:102.4px;font-size:17.5px;color:#374151;font-weight:700;">Sat</span>
<div class="b" style="left:0.0px;top:139.5px;width:2242.5px;height:739.0px;background:#fff;"></div>
<div class="b" style="left:0.0px;top:139.5px;width:1601.8px;height:147.8px;background:#f3f4f6;"></div>
<span class="t" style="left:17.5px;top:158.9px;font-size:16.5px;color:#6b7280;">27</span>
<span class="t" style="left:337.9px;top:158.9px;font-size:16.5px;color:#6b7280;">28</span>
<span class="t" style="left:658.2px;top:158.9px;font-size:16.5px;color:#6b7280;">29</span>
<span class="t" style="left:978.6px;top:158.9px;font-size:16.5px;color:#6b7280;">30</span>
<span class="t" style="left:1298.9px;top:158.9px;font-size:16.5px;color:#6b7280;">31</span>
<span class="t" style="left:1619.3px;top:158.9px;font-size:16.5px;color:#1f2937;">1</span>
<span class="t" style="left:1939.6px;top:158.9px;font-size:16.5px;color:#1f2937;">2</span>
<span class="t" style="left:17.5px;top:306.7px;font-size:16.5px;color:#1f2937;">3</span>
<span class="t" style="left:337.9px;top:306.7px;font-size:16.5px;color:#1f2937;">4</span>
<div class="b" style="left:337.4px;top:345.7px;width:109.7px;height:27.0px;background:#dcfce7;border-radius:7px;"></div>
<span class="t" style="left:345.7px;top:351.2px;font-size:16px;color:#15803d;font-weight:700;letter-spacing:0.32px;">41 Auctions</span>
<span class="t" style="left:658.2px;top:306.7px;font-size:16.5px;color:#1f2937;">5</span>
<div class="b" style="left:657.7px;top:345.7px;width:109.7px;height:27.0px;background:#dcfce7;border-radius:7px;"></div>
<span class="t" style="left:666.0px;top:351.2px;font-size:16px;color:#15803d;font-weight:700;letter-spacing:0.32px;">35 Auctions</span>
<span class="t" style="left:978.6px;top:306.7px;font-size:16.5px;color:#1f2937;">6</span>
<div class="b" style="left:978.1px;top:345.7px;width:109.7px;height:27.0px;background:#dcfce7;border-radius:7px;"></div>
<span class="t" style="left:986.4px;top:351.2px;font-size:16px;color:#15803d;font-weight:700;letter-spacing:0.32px;">29 Auctions</span>
<span class="t" style="left:1298.9px;top:306.7px;font-size:16.5px;color:#1f2937;">7</span>
<div class="b" style="left:1298.4px;top:345.7px;width:100.5px;height:27.0px;background:#dcfce7;border-radius:7px;"></div>
<span class="t" style="left:1306.7px;top:351.2px;font-size:16px;color:#15803d;font-weight:700;letter-spacing:0.32px;">8 Auctions</span>
<span class="t" style="left:1619.3px;top:306.7px;font-size:16.5px;color:#1f2937;">8</span>
<span class="t" style="left:1939.6px;top:306.7px;font-size:16.5px;color:#1f2937;">9</span>
<span class="t" style="left:17.5px;top:454.5px;font-size:16.5px;color:#1f2937;">10</span>
<div class="b" style="left:17.0px;top:493.5px;width:109.7px;height:27.0px;background:#dcfce7;border-radius:7px;"></div>
<span class="t" style="left:25.3px;top:499.0px;font-size:16px;color:#15803d;font-weight:700;letter-spacing:0.32px;">37 Auctions</span>
<span class="t" style="left:337.9px;top:454.5px;font-size:16.5px;color:#1f2937;">11</span>
<div class="b" style="left:337.4px;top:493.5px;width:109.7px;height:27.0px;background:#dcfce7;border-radius:7px;"></div>
<span class="t" style="left:345.7px;top:499.0px;font-size:16px;color:#15803d;font-weight:700;letter-spacing:0.32px;">37 Auctions</span>
<span class="t" style="left:658.2px;top:454.5px;font-size:16.5px;color:#1f2937;">12</span>
<div class="b" style="left:657.7px;top:493.5px;width:109.7px;height:27.0px;background:#dcfce7;border-radius:7px;"></div>
<span class="t" style="left:666.0px;top:499.0px;font-size:16px;color:#15803d;font-weight:700;letter-spacing:0.32px;">32 Auctions</span>
<span class="t" style="left:978.6px;top:454.5px;font-size:16.5px;color:#1f2937;">13</span>
<div class="b" style="left:978.1px;top:493.5px;width:109.7px;height:27.0px;background:#dcfce7;border-radius:7px;"></div>
<span class="t" style="left:986.4px;top:499.0px;font-size:16px;color:#15803d;font-weight:700;letter-spacing:0.32px;">42 Auctions</span>
<span class="t" style="left:1298.9px;top:454.5px;font-size:16.5px;color:#1f2937;">14</span>
<div class="b" style="left:1298.4px;top:493.5px;width:109.7px;height:27.0px;background:#dcfce7;border-radius:7px;"></div>
<span class="t" style="left:1306.7px;top:499.0px;font-size:16px;color:#15803d;font-weight:700;letter-spacing:0.32px;">12 Auctions</span>
<span class="t" style="left:1619.3px;top:454.5px;font-size:16.5px;color:#1f2937;">15</span>
<span class="t" style="left:1939.6px;top:454.5px;font-size:16.5px;color:#1f2937;">16</span>
<span class="t" style="left:17.5px;top:602.3px;font-size:16.5px;color:#1f2937;">17</span>
<div class="b" style="left:17.0px;top:641.3px;width:109.7px;height:27.0px;background:#dcfce7;border-radius:7px;"></div>
<span class="t" style="left:25.3px;top:646.8px;font-size:16px;color:#15803d;font-weight:700;letter-spacing:0.32px;">31 Auctions</span>
<span class="t" style="left:337.9px;top:602.3px;font-size:16.5px;color:#1f2937;">18</span>
<div class="b" style="left:337.4px;top:641.3px;width:109.7px;height:27.0px;background:#dcfce7;border-radius:7px;"></div>
<span class="t" style="left:345.7px;top:646.8px;font-size:16px;color:#15803d;font-weight:700;letter-spacing:0.32px;">36 Auctions</span>
<span class="t" style="left:658.2px;top:602.3px;font-size:16.5px;color:#1f2937;">19</span>
<div class="b" style="left:657.7px;top:641.3px;width:109.7px;height:27.0px;background:#dcfce7;border-radius:7px;"></div>
<span class="t" style="left:666.0px;top:646.8px;font-size:16px;color:#15803d;font-weight:700;letter-spacing:0.32px;">24 Auctions</span>
<span class="t" style="left:978.6px;top:602.3px;font-size:16.5px;color:#1f2937;">20</span>
<div class="b" style="left:978.1px;top:641.3px;width:109.7px;height:27.0px;background:#dcfce7;border-radius:7px;"></div>
<span class="t" style="left:986.4px;top:646.8px;font-size:16px;color:#15803d;font-weight:700;letter-spacing:0.32px;">19 Auctions</span>
<span class="t" style="left:1298.9px;top:602.3px;font-size:16.5px;color:#1f2937;">21</span>
<div class="b" style="left:1298.4px;top:641.3px;width:109.7px;height:27.0px;background:#dcfce7;border-radius:7px;"></div>
<span class="t" style="left:1306.7px;top:646.8px;font-size:16px;color:#15803d;font-weight:700;letter-spacing:0.32px;">10 Auctions</span>
<span class="t" style="left:1619.3px;top:602.3px;font-size:16.5px;color:#1f2937;">22</span>
<span class="t" style="left:1939.6px;top:602.3px;font-size:16.5px;color:#1f2937;">23</span>
<span class="t" style="left:17.5px;top:750.1px;font-size:16.5px;color:#1f2937;">24</span>
<div class="b" style="left:17.0px;top:789.1px;width:100.5px;height:27.0px;background:#dcfce7;border-radius:7px;"></div>
<span class="t" style="left:25.3px;top:794.6px;font-size:16px;color:#15803d;font-weight:700;letter-spacing:0.32px;">3 Auctions</span>
<span class="t" style="left:337.9px;top:750.1px;font-size:16.5px;color:#1f2937;">25</span>
<div class="b" style="left:337.4px;top:789.1px;width:109.7px;height:27.0px;background:#dcfce7;border-radius:7px;"></div>
<span class="t" style="left:345.7px;top:794.6px;font-size:16px;color:#15803d;font-weight:700;letter-spacing:0.32px;">30 Auctions</span>
<span class="t" style="left:658.2px;top:750.1px;font-size:16.5px;color:#1f2937;">26</span>
<div class="b" style="left:657.7px;top:789.1px;width:108.8px;height:27.0px;background:#dcfce7;border-radius:7px;"></div>
<span class="t" style="left:666.0px;top:794.6px;font-size:16px;color:#15803d;font-weight:700;letter-spacing:0.31px;">11 Auctions</span>
<span class="t" style="left:978.6px;top:750.1px;font-size:16.5px;color:#1f2937;">27</span>
<div class="b" style="left:978.1px;top:789.1px;width:109.7px;height:27.0px;background:#dcfce7;border-radius:7px;"></div>
<span class="t" style="left:986.4px;top:794.6px;font-size:16px;color:#15803d;font-weight:700;letter-spacing:0.32px;">14 Auctions</span>
<span class="t" style="left:1298.9px;top:750.1px;font-size:16.5px;color:#1f2937;">28</span>
<div class="b" style="left:1298.4px;top:789.1px;width:100.5px;height:27.0px;background:#dcfce7;border-radius:7px;"></div>
<span class="t" style="left:1306.7px;top:794.6px;font-size:16px;color:#15803d;font-weight:700;letter-spacing:0.32px;">5 Auctions</span>
<span class="t" style="left:1619.3px;top:750.1px;font-size:16.5px;color:#1f2937;">29</span>
<span class="t" style="left:1939.6px;top:750.1px;font-size:16.5px;color:#1f2937;">30</span>
<div class="b" style="left:319.4px;top:83.5px;width:2.0px;height:795.0px;background:#e5e7eb;"></div>
<div class="b" style="left:639.7px;top:83.5px;width:2.0px;height:795.0px;background:#e5e7eb;"></div>
<div class="b" style="left:960.1px;top:83.5px;width:2.0px;height:795.0px;background:#e5e7eb;"></div>
<div class="b" style="left:1280.4px;top:83.5px;width:2.0px;height:795.0px;background:#e5e7eb;"></div>
<div class="b" style="left:1600.8px;top:83.5px;width:2.0px;height:795.0px;background:#e5e7eb;"></div>
<div class="b" style="left:1921.1px;top:83.5px;width:2.0px;height:795.0px;background:#e5e7eb;"></div>
<div class="b" style="left:0.0px;top:286.3px;width:2242.5px;height:2.0px;background:#e5e7eb;"></div>
<div class="b" style="left:0.0px;top:434.1px;width:2242.5px;height:2.0px;background:#e5e7eb;"></div>
<div class="b" style="left:0.0px;top:581.9px;width:2242.5px;height:2.0px;background:#e5e7eb;"></div>
<div class="b" style="left:0.0px;top:729.7px;width:2242.5px;height:2.0px;background:#e5e7eb;"></div>
</div></body></html>
